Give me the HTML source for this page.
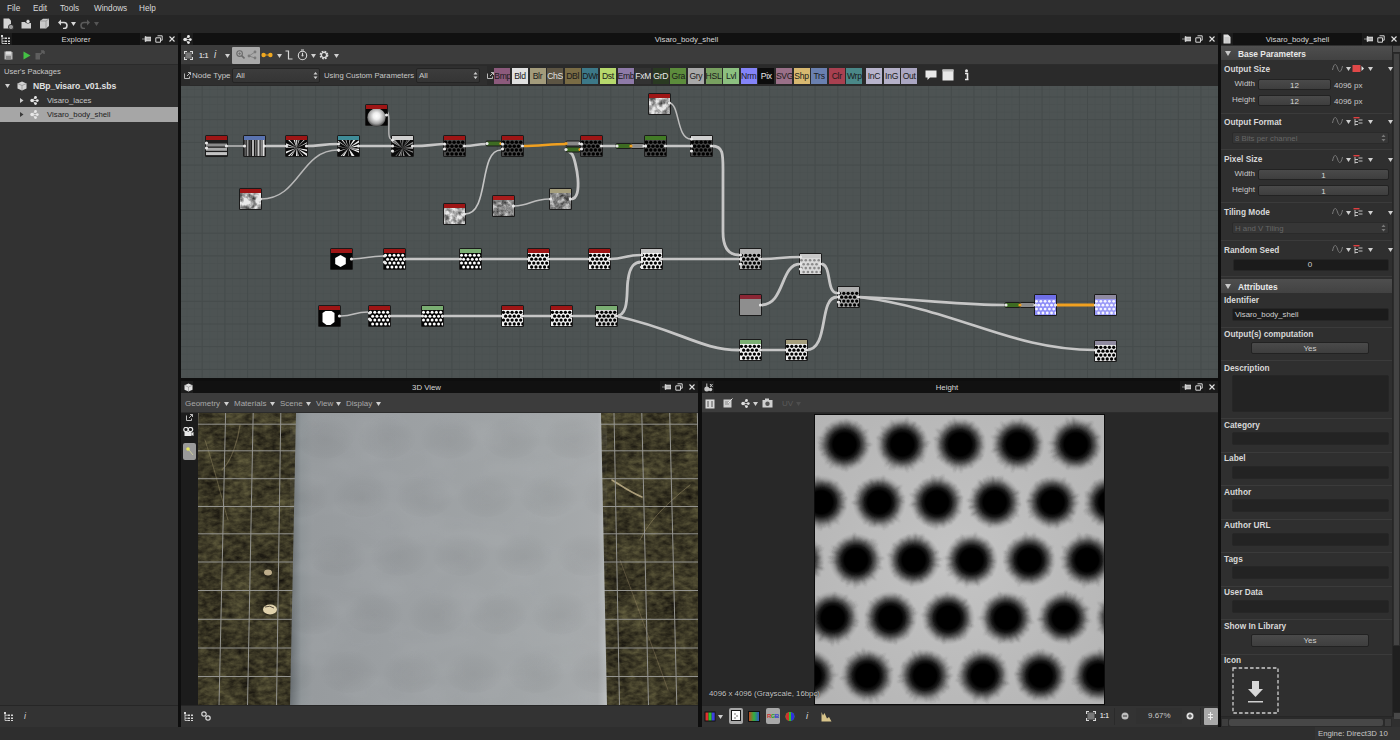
<!DOCTYPE html>
<html><head><meta charset="utf-8">
<style>
*{margin:0;padding:0;box-sizing:border-box}
html,body{width:1400px;height:740px;overflow:hidden;background:#0e0e0e;font-family:"Liberation Sans",sans-serif;font-size:8px;color:#cfcfcf}
.a{position:absolute}
.t{position:absolute;white-space:nowrap;line-height:1}
svg.a{display:block;overflow:hidden}
.fld{position:absolute;border:1px solid #222;border-radius:2px;background:linear-gradient(#4a4a4a,#3e3e3e)}
.dfld{position:absolute;border:1px solid #262626;border-radius:2px;background:#1b1b1b}
.btn{position:absolute;font-size:8.6px;color:#111;text-align:center;line-height:16px;overflow:hidden;white-space:nowrap;letter-spacing:-0.3px}
</style></head><body>
<div class="a" style="left:0px;top:0px;width:1400px;height:15px;background:#2d2d2d;"></div><div class="t" style="left:7px;top:4.5px;font-size:8.2px;color:#dadada;">File</div><div class="t" style="left:33px;top:4.5px;font-size:8.2px;color:#dadada;">Edit</div><div class="t" style="left:60px;top:4.5px;font-size:8.2px;color:#dadada;">Tools</div><div class="t" style="left:94px;top:4.5px;font-size:8.2px;color:#dadada;">Windows</div><div class="t" style="left:139px;top:4.5px;font-size:8.2px;color:#dadada;">Help</div><div class="a" style="left:0px;top:15px;width:1400px;height:18px;background:#262626;"></div><svg class="a" style="left:3px;top:18px" width="11" height="12" viewBox="0 0 11 12"><path d="M0.5 0.5H6L8 2.5V10.5H0.5Z" fill="#d6d6d6"/><circle cx="8" cy="9" r="2.6" fill="#9a9a9a" stroke="#262626" stroke-width="0.8"/></svg><svg class="a" style="left:21px;top:19px" width="11" height="10" viewBox="0 0 11 10"><path d="M0.5 3H4L5 4H10V9.5H0.5Z" fill="#cfcfcf"/><circle cx="7" cy="2.5" r="2" fill="#e0e0e0" stroke="#262626" stroke-width="0.6"/></svg><svg class="a" style="left:39px;top:18px" width="11" height="11" viewBox="0 0 11 11"><path d="M1 3L4 0.8H10V8L7 10.5H1Z" fill="#c8c8c8"/><path d="M1 3H7V10.5M7 3L10 0.8" stroke="#8a8a8a" stroke-width="0.7" fill="none"/></svg><svg class="a" style="left:58px;top:19px" width="10" height="10" viewBox="0 0 10 10"><path d="M2 3.5H6A3 3 0 0 1 6 9.5H5" stroke="#d8d8d8" stroke-width="1.6" fill="none"/><path d="M0 3.5L3 0.5V6.5Z" fill="#d8d8d8"/></svg><svg class="a" style="left:71px;top:22px" width="5" height="4" viewBox="0 0 5 4"><path d="M0 0H5L2.5 4Z" fill="#d8d8d8"/></svg><svg class="a" style="left:80px;top:19px" width="10" height="10" viewBox="0 0 10 10"><path d="M8 3.5H4A3 3 0 0 0 4 9.5H5" stroke="#5a5a5a" stroke-width="1.6" fill="none"/><path d="M10 3.5L7 0.5V6.5Z" fill="#5a5a5a"/></svg><svg class="a" style="left:94px;top:22px" width="5" height="4" viewBox="0 0 5 4"><path d="M0 0H5L2.5 4Z" fill="#555"/></svg><div class="a" style="left:0px;top:33px;width:178px;height:12px;background:#1c1c1c;"></div><div class="a" style="left:12px;top:33px;width:128px;height:12px;background:#111111;"></div><svg class="a" style="left:1px;top:34.5px" width="10" height="9" viewBox="0 0 10 9"><g fill="#d8d8d8"><rect x="0" y="0" width="2" height="2"/><rect x="4" y="2.5" width="2" height="1.5"/><rect x="7" y="2.5" width="2" height="1.5"/><rect x="7" y="5.5" width="2" height="1.5"/><rect x="4" y="5.5" width="2" height="1.5"/><rect x="4" y="8" width="2" height="1"/><rect x="7" y="8" width="2" height="1"/></g><path d="M1 2V8.5H4M1 3.2H4M1 6.2H4" stroke="#d8d8d8" stroke-width="0.8" fill="none"/></svg><div class="a" style="left:141px;top:33px;width:11px;height:12px;background:#1a1a1a;"></div><div class="a" style="left:153px;top:33px;width:11px;height:12px;background:#1a1a1a;"></div><div class="a" style="left:166px;top:33px;width:12px;height:12px;background:#1a1a1a;"></div><svg class="a" style="left:142px;top:35px" width="9" height="8" viewBox="0 0 9 8"><path d="M0 4H3M3 1.5H4V6.5H3ZM4 2H9V6H4Z" fill="#d4d4d4" stroke="#d4d4d4" stroke-width="0.6"/><path d="M4.5 3.3H8.5M4.5 4.7H8.5" stroke="#888" stroke-width="0.6"/></svg><svg class="a" style="left:155px;top:35px" width="8" height="8" viewBox="0 0 8 8"><path d="M2.5 0.8H7.2V5.2H5.5M0.8 2.8H5.5V7.2H0.8Z" fill="none" stroke="#d4d4d4" stroke-width="1"/></svg><svg class="a" style="left:169px;top:36px" width="6" height="6" viewBox="0 0 6 6"><path d="M0.5 0.5L5.5 5.5M5.5 0.5L0.5 5.5" stroke="#e0e0e0" stroke-width="1.1"/></svg><div class="t" style="left:-24.0px;top:35.5px;width:200px;text-align:center;font-size:7.8px;color:#d6d6d6;">Explorer</div><div class="a" style="left:0px;top:45px;width:178px;height:20px;background:#3a3a3a;"></div><div class="a" style="left:0px;top:64px;width:178px;height:1px;background:#2a2a2a;"></div><svg class="a" style="left:4px;top:51px" width="9" height="9" viewBox="0 0 9 9"><path d="M0.5 0.5H7.5L8.5 1.5V8.5H0.5Z" fill="#b8b8b8"/><rect x="2" y="0.5" width="5" height="3" fill="#e0e0e0"/><rect x="2" y="5" width="5" height="3.5" fill="#8a8a8a"/></svg><svg class="a" style="left:23px;top:51px" width="8" height="9" viewBox="0 0 8 9"><path d="M0.5 0.5L7.5 4.5L0.5 8.5Z" fill="#44c044"/></svg><svg class="a" style="left:35px;top:50px" width="11" height="10" viewBox="0 0 11 10"><path d="M0.5 3H5V9.5H0.5Z" fill="#5e5e5e"/><path d="M3 6L9 1M9 1H6M9 1V4" stroke="#5e5e5e" stroke-width="1.5" fill="none"/></svg><div class="a" style="left:0px;top:65px;width:178px;height:641px;background:#323232;"></div><div class="t" style="left:4px;top:67.5px;font-size:7.6px;color:#c8c8c8;">User's Packages</div><svg class="a" style="left:5px;top:84px" width="5" height="4" viewBox="0 0 5 4"><path d="M0 0H5L2.5 4Z" fill="#d0d0d0"/></svg><svg class="a" style="left:17px;top:81px" width="10" height="10" viewBox="0 0 10 10"><path d="M5 0.5L9.5 2.5V7.5L5 9.5L0.5 7.5V2.5Z" fill="#d4d4d4"/><path d="M0.5 2.5L5 4.5L9.5 2.5M5 4.5V9.5" stroke="#8a8a8a" stroke-width="0.7" fill="none"/></svg><div class="t" style="left:33px;top:81.5px;font-size:8.6px;color:#e0e0e0;font-weight:bold;letter-spacing:-0.05px;">NBp_visaro_v01.sbs</div><svg class="a" style="left:20px;top:97.5px" width="3.5" height="5" viewBox="0 0 3.5 5"><path d="M0 0L3.5 2.5L0 5Z" fill="#d0d0d0"/></svg><svg class="a" style="left:30px;top:95.5px" width="9" height="9" viewBox="0 0 9 9"><g fill="#e8e8e8"><circle cx="2" cy="4.5" r="1.7"/><circle cx="5.5" cy="1.5" r="1.4"/><circle cx="7.3" cy="4.6" r="1.4"/><circle cx="5.5" cy="7.6" r="1.4"/></g><path d="M2 4.5L5.5 1.5M2 4.5L7.3 4.6M2 4.5L5.5 7.6" stroke="#e8e8e8" stroke-width="0.8"/></svg><div class="t" style="left:47px;top:96.5px;font-size:7.8px;color:#c8c8c8;">Visaro_laces</div><div class="a" style="left:0px;top:107px;width:178px;height:15px;background:#a6a6a6;"></div><svg class="a" style="left:20px;top:111.5px" width="3.5" height="5" viewBox="0 0 3.5 5"><path d="M0 0L3.5 2.5L0 5Z" fill="#3a3a3a"/></svg><svg class="a" style="left:30px;top:109.5px" width="9" height="9" viewBox="0 0 9 9"><g fill="#e8e8e8"><circle cx="2" cy="4.5" r="1.7"/><circle cx="5.5" cy="1.5" r="1.4"/><circle cx="7.3" cy="4.6" r="1.4"/><circle cx="5.5" cy="7.6" r="1.4"/></g><path d="M2 4.5L5.5 1.5M2 4.5L7.3 4.6M2 4.5L5.5 7.6" stroke="#e8e8e8" stroke-width="0.8"/></svg><div class="t" style="left:47px;top:110.5px;font-size:7.8px;color:#1e1e1e;">Visaro_body_shell</div><div class="a" style="left:0px;top:705px;width:178px;height:1px;background:#262626;"></div><div class="a" style="left:0px;top:706px;width:178px;height:21px;background:#333333;"></div><svg class="a" style="left:4px;top:712px" width="10" height="9" viewBox="0 0 10 9"><g fill="#d8d8d8"><rect x="0" y="0" width="2" height="2"/><rect x="4" y="2.5" width="2" height="1.5"/><rect x="7" y="2.5" width="2" height="1.5"/><rect x="7" y="5.5" width="2" height="1.5"/><rect x="4" y="5.5" width="2" height="1.5"/><rect x="4" y="8" width="2" height="1"/><rect x="7" y="8" width="2" height="1"/></g><path d="M1 2V8.5H4M1 3.2H4M1 6.2H4" stroke="#d8d8d8" stroke-width="0.8" fill="none"/></svg><div class="t" style="left:24px;top:711.5px;font-size:9px;color:#d0d0d0;"><i>i</i></div><div class="a" style="left:181px;top:33px;width:1037px;height:12px;background:#1c1c1c;"></div><div class="a" style="left:193px;top:33px;width:987px;height:12px;background:#111111;"></div><svg class="a" style="left:183px;top:34.5px" width="9" height="9" viewBox="0 0 9 9"><g fill="#e8e8e8"><circle cx="2" cy="4.5" r="1.7"/><circle cx="5.5" cy="1.5" r="1.4"/><circle cx="7.3" cy="4.6" r="1.4"/><circle cx="5.5" cy="7.6" r="1.4"/></g><path d="M2 4.5L5.5 1.5M2 4.5L7.3 4.6M2 4.5L5.5 7.6" stroke="#e8e8e8" stroke-width="0.8"/></svg><div class="a" style="left:1181px;top:33px;width:11px;height:12px;background:#1a1a1a;"></div><div class="a" style="left:1193px;top:33px;width:11px;height:12px;background:#1a1a1a;"></div><div class="a" style="left:1206px;top:33px;width:12px;height:12px;background:#1a1a1a;"></div><svg class="a" style="left:1182px;top:35px" width="9" height="8" viewBox="0 0 9 8"><path d="M0 4H3M3 1.5H4V6.5H3ZM4 2H9V6H4Z" fill="#d4d4d4" stroke="#d4d4d4" stroke-width="0.6"/><path d="M4.5 3.3H8.5M4.5 4.7H8.5" stroke="#888" stroke-width="0.6"/></svg><svg class="a" style="left:1195px;top:35px" width="8" height="8" viewBox="0 0 8 8"><path d="M2.5 0.8H7.2V5.2H5.5M0.8 2.8H5.5V7.2H0.8Z" fill="none" stroke="#d4d4d4" stroke-width="1"/></svg><svg class="a" style="left:1209px;top:36px" width="6" height="6" viewBox="0 0 6 6"><path d="M0.5 0.5L5.5 5.5M5.5 0.5L0.5 5.5" stroke="#e0e0e0" stroke-width="1.1"/></svg><div class="t" style="left:586.5px;top:35.5px;width:200px;text-align:center;font-size:7.8px;color:#d6d6d6;">Visaro_body_shell</div><div class="a" style="left:181px;top:45px;width:1037px;height:20px;background:#3c3c3c;"></div><div class="a" style="left:181px;top:64px;width:1037px;height:1px;background:#2c2c2c;"></div><svg class="a" style="left:184px;top:51px" width="9" height="9" viewBox="0 0 9 9"><rect x="1.5" y="1.5" width="6" height="6" fill="#777"/><path d="M0.5 3V0.5H3M6 0.5H8.5V3M8.5 6V8.5H6M3 8.5H0.5V6" stroke="#d8d8d8" stroke-width="1.2" fill="none"/></svg><div class="t" style="left:199px;top:51.5px;font-size:7px;color:#d0d0d0;font-weight:bold;letter-spacing:-0.3px;">1:1</div><div class="t" style="left:214px;top:50px;font-size:10px;color:#d8d8d8;"><i>i</i></div><svg class="a" style="left:225px;top:54px" width="5" height="4" viewBox="0 0 5 4"><path d="M0 0H5L2.5 4Z" fill="#d0d0d0"/></svg><div class="a" style="left:232px;top:47px;width:28px;height:17px;background:#a9a9a9;border-radius:1px"></div><svg class="a" style="left:236px;top:50px" width="9" height="10" viewBox="0 0 9 10"><circle cx="3.6" cy="3.6" r="2.8" fill="none" stroke="#6a6a6a" stroke-width="1.1"/><path d="M5.6 5.6L8.5 8.5" stroke="#6a6a6a" stroke-width="1.6"/><path d="M2.3 3.6H4.9M3.6 2.3V4.9" stroke="#6a6a6a" stroke-width="0.8"/></svg><svg class="a" style="left:247px;top:50px" width="10" height="10" viewBox="0 0 10 10"><circle cx="2" cy="6" r="1.4" fill="#7a7a7a"/><circle cx="8" cy="2" r="1.4" fill="#7a7a7a"/><circle cx="8" cy="8" r="1.4" fill="#7a7a7a"/><path d="M2 6L8 2M2 6L8 8" stroke="#7a7a7a" stroke-width="0.8"/></svg><svg class="a" style="left:261px;top:52px" width="12" height="6" viewBox="0 0 12 6"><path d="M2.5 3H9.5" stroke="#e0a020" stroke-width="1"/><circle cx="2.6" cy="3" r="2.2" fill="#f0a820"/><circle cx="9.4" cy="3" r="2.2" fill="#f0a820"/></svg><svg class="a" style="left:277px;top:54px" width="5" height="4" viewBox="0 0 5 4"><path d="M0 0H5L2.5 4Z" fill="#d0d0d0"/></svg><svg class="a" style="left:285px;top:50px" width="8" height="10" viewBox="0 0 8 10"><path d="M0.5 1H3.5V9H7.5" stroke="#d8d8d8" stroke-width="1.2" fill="none"/></svg><svg class="a" style="left:297px;top:49px" width="11" height="12" viewBox="0 0 11 12"><circle cx="5.5" cy="6.5" r="4.2" fill="none" stroke="#d8d8d8" stroke-width="1.1"/><path d="M5.5 6.5V3.8M4 1H7" stroke="#d8d8d8" stroke-width="1.1"/><circle cx="5.5" cy="6.5" r="1" fill="#d8d8d8"/></svg><svg class="a" style="left:311px;top:54px" width="5" height="4" viewBox="0 0 5 4"><path d="M0 0H5L2.5 4Z" fill="#d0d0d0"/></svg><svg class="a" style="left:319px;top:50px" width="10" height="10" viewBox="0 0 10 10"><circle cx="5" cy="5" r="3.3" fill="none" stroke="#d8d8d8" stroke-width="2.2" stroke-dasharray="1.6 1"/><circle cx="5" cy="5" r="2.6" fill="none" stroke="#d8d8d8" stroke-width="1.3"/></svg><svg class="a" style="left:334px;top:54px" width="5" height="4" viewBox="0 0 5 4"><path d="M0 0H5L2.5 4Z" fill="#d0d0d0"/></svg><div class="a" style="left:181px;top:65px;width:1037px;height:21px;background:#2a2a2a;"></div><div class="a" style="left:190px;top:66px;width:297px;height:19px;background:#2f2f2f;"></div><svg class="a" style="left:184px;top:72px" width="7" height="7" viewBox="0 0 7 7"><path d="M0.5 1.5V6.5H5.5V4.5M3 4L6.5 0.5M4 0.5H6.5V3" stroke="#c8c8c8" stroke-width="0.9" fill="none"/></svg><div class="t" style="left:192px;top:72px;font-size:8px;color:#c8c8c8;">Node Type</div><div class="a" style="left:232px;top:68px;width:88px;height:15px;border:1px solid #242424;border-radius:2px;background:linear-gradient(#3c3c3c,#353535)"></div><div class="t" style="left:236px;top:72px;font-size:8px;color:#c8c8c8;">All</div><svg class="a" style="left:313px;top:71px" width="5" height="9" viewBox="0 0 5 9"><path d="M0.5 3.5L2.5 1L4.5 3.5ZM0.5 5.5L2.5 8L4.5 5.5Z" fill="#d0d0d0"/></svg><div class="t" style="left:324px;top:72px;font-size:7.7px;color:#c8c8c8;">Using Custom Parameters</div><div class="a" style="left:416px;top:68px;width:64px;height:15px;border:1px solid #242424;border-radius:2px;background:linear-gradient(#3c3c3c,#353535)"></div><div class="t" style="left:419px;top:72px;font-size:8px;color:#c8c8c8;">All</div><svg class="a" style="left:473px;top:71px" width="5" height="9" viewBox="0 0 5 9"><path d="M0.5 3.5L2.5 1L4.5 3.5ZM0.5 5.5L2.5 8L4.5 5.5Z" fill="#d0d0d0"/></svg><svg class="a" style="left:487px;top:72px" width="7" height="7" viewBox="0 0 7 7"><path d="M0.5 1.5V6.5H5.5V4.5M3 4L6.5 0.5M4 0.5H6.5V3" stroke="#c8c8c8" stroke-width="0.9" fill="none"/></svg><div class="btn" style="left:494.3px;top:68px;width:16px;height:16px;background:#8c5a7c;color:#1a1a1a">Bmp</div><div class="btn" style="left:511.9px;top:68px;width:16px;height:16px;background:#e0e0e0;color:#1a1a1a">Bld</div><div class="btn" style="left:529.5px;top:68px;width:16px;height:16px;background:#a39b7b;color:#1a1a1a">Blr</div><div class="btn" style="left:547.1px;top:68px;width:16px;height:16px;background:#5c5443;color:#e0e0e0">ChS</div><div class="btn" style="left:564.7px;top:68px;width:16px;height:16px;background:#7a6c45;color:#1a1a1a">DBl</div><div class="btn" style="left:582.3px;top:68px;width:16px;height:16px;background:#3c7888;color:#1a1a1a">DWr</div><div class="btn" style="left:599.9px;top:68px;width:16px;height:16px;background:#b6d86c;color:#1a1a1a">Dst</div><div class="btn" style="left:617.5px;top:68px;width:16px;height:16px;background:#8e7aa8;color:#1a1a1a">Emb</div><div class="btn" style="left:635.1px;top:68px;width:16px;height:16px;background:#323232;color:#e8e8e8">FxM</div><div class="btn" style="left:652.7px;top:68px;width:16px;height:16px;background:#2a3a22;color:#e8e8e8">GrD</div><div class="btn" style="left:670.3px;top:68px;width:16px;height:16px;background:#5c8c3c;color:#1a1a1a">Gra</div><div class="btn" style="left:687.9px;top:68px;width:16px;height:16px;background:#a8a8a8;color:#1a1a1a">Gry</div><div class="btn" style="left:705.5px;top:68px;width:16px;height:16px;background:#78a060;color:#1a1a1a">HSL</div><div class="btn" style="left:723.1px;top:68px;width:16px;height:16px;background:#8cc080;color:#1a1a1a">Lvl</div><div class="btn" style="left:740.7px;top:68px;width:16px;height:16px;background:#8484f8;color:#1a1a1a">Nrm</div><div class="btn" style="left:758.3px;top:68px;width:16px;height:16px;background:#0c0c0c;color:#e8e8e8">Pix</div><div class="btn" style="left:775.9px;top:68px;width:16px;height:16px;background:#9a7088;color:#1a1a1a">SVG</div><div class="btn" style="left:793.5px;top:68px;width:16px;height:16px;background:#d8b870;color:#1a1a1a">Shp</div><div class="btn" style="left:811.1px;top:68px;width:16px;height:16px;background:#6a80b0;color:#1a1a1a">Trs</div><div class="btn" style="left:828.7px;top:68px;width:16px;height:16px;background:#a84050;color:#1a1a1a">Clr</div><div class="btn" style="left:846.3px;top:68px;width:16px;height:16px;background:#4a8888;color:#1a1a1a">Wrp</div><div class="btn" style="left:866.0px;top:68px;width:16px;height:16px;background:#b8b4cc;color:#1a1a1a">InC</div><div class="btn" style="left:883.6px;top:68px;width:16px;height:16px;background:#b4b0c8;color:#1a1a1a">InG</div><div class="btn" style="left:901.2px;top:68px;width:16px;height:16px;background:#aaa6c2;color:#1a1a1a">Out</div><svg class="a" style="left:925px;top:70px" width="12" height="11" viewBox="0 0 12 11"><path d="M0.5 0.5H11.5V7.5H5L2.5 10V7.5H0.5Z" fill="#e8e8e8"/></svg><svg class="a" style="left:942px;top:69px" width="12" height="12" viewBox="0 0 12 12"><rect x="0.5" y="0.5" width="11" height="11" fill="#e8e8e8"/><rect x="0.5" y="0.5" width="11" height="2" fill="#bdbdbd"/></svg><svg class="a" style="left:964px;top:69px" width="5" height="12" viewBox="0 0 5 12"><circle cx="2.5" cy="1.8" r="1.5" fill="#e8e8e8"/><path d="M1 4.5H3.5V10M1 10.5H4.5" stroke="#e8e8e8" stroke-width="1.6" fill="none"/></svg><svg class="a" style="left:181px;top:86px" width="1037" height="292" viewBox="181 86 1037 292"><defs>
<pattern id="gmin" width="7.567" height="7.567" patternUnits="userSpaceOnUse" x="20.1" y="5.7"><path d="M0 0H7.567M0 0V7.567" stroke="#484e4e" stroke-width="1" fill="none"/></pattern>
<pattern id="gmaj" width="22.7" height="22.7" patternUnits="userSpaceOnUse" x="20.1" y="5.7"><path d="M0 0.5H22.7M0.5 0V22.7" stroke="#454b4b" stroke-width="1" fill="none"/></pattern>
<pattern id="dotsW" width="5.2" height="4.3" patternUnits="userSpaceOnUse"><circle cx="1.6" cy="2" r="1.45" fill="#fff"/><circle cx="4.2" cy="4.15" r="1.45" fill="#fff"/><circle cx="4.2" cy="-0.15" r="1.45" fill="#fff"/></pattern>
<pattern id="dotsB" width="5.2" height="4.3" patternUnits="userSpaceOnUse"><circle cx="1.6" cy="2" r="1.5" fill="#000"/><circle cx="4.2" cy="4.15" r="1.5" fill="#000"/><circle cx="4.2" cy="-0.15" r="1.5" fill="#000"/></pattern>
<pattern id="dotsL" width="5.2" height="4.3" patternUnits="userSpaceOnUse"><circle cx="1.6" cy="2" r="1.3" fill="#8a8a8a"/><circle cx="4.2" cy="4.15" r="1.3" fill="#8a8a8a"/><circle cx="4.2" cy="-0.15" r="1.3" fill="#8a8a8a"/></pattern>
<pattern id="dotsWB" width="5.2" height="4.3" patternUnits="userSpaceOnUse"><circle cx="1.6" cy="2" r="1.4" fill="#f4f4ff"/><circle cx="4.2" cy="4.15" r="1.4" fill="#f4f4ff"/><circle cx="4.2" cy="-0.15" r="1.4" fill="#f4f4ff"/></pattern>
<pattern id="scr" width="5" height="4" patternUnits="userSpaceOnUse"><path d="M0.5 1.5h2M1 3h3M3 0.5v2" stroke="#8a8a8a" stroke-width="0.9"/></pattern>
<filter id="nz" x="0" y="0" width="100%" height="100%"><feTurbulence type="fractalNoise" baseFrequency="0.16" numOctaves="3" seed="3"/><feColorMatrix type="matrix" values="0 0 0 0 0  0 0 0 0 0  0 0 0 0 0  -1.6 0 0 0 1.05"/></filter>
<filter id="nz2" x="0" y="0" width="100%" height="100%"><feTurbulence type="fractalNoise" baseFrequency="0.2" numOctaves="3" seed="8"/><feColorMatrix type="matrix" values="0 0 0 0 0  0 0 0 0 0  0 0 0 0 0  -1.4 0 0 0 1.0"/></filter>
<radialGradient id="sph" cx="0.5" cy="0.42" r="0.6"><stop offset="0" stop-color="#fff"/><stop offset="0.3" stop-color="#f0f0f0"/><stop offset="0.7" stop-color="#a0a0a0"/><stop offset="1" stop-color="#2a2a2a"/></radialGradient>
</defs><rect x="181" y="86" width="1037" height="292" fill="#4d5353"/><rect x="181" y="86" width="1037" height="292" fill="url(#gmin)"/><rect x="181" y="86" width="1037" height="292" fill="url(#gmaj)"/><path d="M227 146 L244 146" fill="none" stroke="#bdbdbd" stroke-width="1.6" stroke-linecap="round"/><path d="M261 199 C300 199 300 150 338 150" fill="none" stroke="#b8b8b8" stroke-width="1.5" stroke-linecap="round"/><path d="M386 111 C392 111 386 139 391 139" fill="none" stroke="#b8b8b8" stroke-width="1.4" stroke-linecap="round"/><path d="M465 214 C490 214 478 150 501 150" fill="none" stroke="#c4c4c4" stroke-width="1.6" stroke-linecap="round"/><path d="M514 206 C530 206 532 199 549 199" fill="none" stroke="#bdbdbd" stroke-width="1.6" stroke-linecap="round"/><path d="M669 103 C680 103 676 139 691 139" fill="none" stroke="#bdbdbd" stroke-width="1.5" stroke-linecap="round"/><path d="M352 259 C366 259 368 256 383 256" fill="none" stroke="#bdbdbd" stroke-width="1.5" stroke-linecap="round"/><path d="M341 316 C354 316 354 312 368 312" fill="none" stroke="#bdbdbd" stroke-width="1.5" stroke-linecap="round"/><path d="M265 146 L286 146" fill="none" stroke="#c6c6c6" stroke-width="2.7" stroke-linecap="round"/><path d="M306 146 C320 146 322 144 338 144" fill="none" stroke="#c6c6c6" stroke-width="2.7" stroke-linecap="round"/><path d="M359 146 L391 146" fill="none" stroke="#c6c6c6" stroke-width="2.7" stroke-linecap="round"/><path d="M413 146 C428 146 428 145 443 144" fill="none" stroke="#c6c6c6" stroke-width="2.7" stroke-linecap="round"/><path d="M465 146 C475 146 476 144 487 144" fill="none" stroke="#c6c6c6" stroke-width="2.7" stroke-linecap="round"/><path d="M571 199 C584 199 576 160 572 154 C568 150 565 150 567 150" fill="none" stroke="#c6c6c6" stroke-width="2.8" stroke-linecap="round"/><path d="M601 146 L617 146" fill="none" stroke="#c6c6c6" stroke-width="2.7" stroke-linecap="round"/><path d="M643 146 L691 146" fill="none" stroke="#c6c6c6" stroke-width="2.7" stroke-linecap="round"/><path d="M712 146 C724 146 723 155 723 175 L723 232 C723 250 730 255 739 255" fill="none" stroke="#c6c6c6" stroke-width="2.8" stroke-linecap="round"/><path d="M405 259 L460 259" fill="none" stroke="#c6c6c6" stroke-width="2.7" stroke-linecap="round"/><path d="M481 259 L528 259" fill="none" stroke="#c6c6c6" stroke-width="2.7" stroke-linecap="round"/><path d="M549 259 L589 259" fill="none" stroke="#c6c6c6" stroke-width="2.7" stroke-linecap="round"/><path d="M610 259 C625 259 625 255 641 255" fill="none" stroke="#c6c6c6" stroke-width="2.7" stroke-linecap="round"/><path d="M616 316 C630 316 626 290 628 280 C630 264 636 262 641 262" fill="none" stroke="#c6c6c6" stroke-width="2.8" stroke-linecap="round"/><path d="M662 259 L739 259" fill="none" stroke="#c6c6c6" stroke-width="2.7" stroke-linecap="round"/><path d="M761 259 C780 259 780 257 800 257" fill="none" stroke="#c6c6c6" stroke-width="2.7" stroke-linecap="round"/><path d="M761 305 C785 305 780 264 800 264" fill="none" stroke="#c6c6c6" stroke-width="2.8" stroke-linecap="round"/><path d="M821 264 C832 264 826 293 837 293" fill="none" stroke="#c6c6c6" stroke-width="2.8" stroke-linecap="round"/><path d="M806 350 C830 350 818 297 837 297" fill="none" stroke="#c6c6c6" stroke-width="2.8" stroke-linecap="round"/><path d="M616 316 C680 330 700 350 739 350" fill="none" stroke="#c6c6c6" stroke-width="2.8" stroke-linecap="round"/><path d="M761 350 L785 350" fill="none" stroke="#c6c6c6" stroke-width="2.7" stroke-linecap="round"/><path d="M390 316 L422 316" fill="none" stroke="#c6c6c6" stroke-width="2.7" stroke-linecap="round"/><path d="M443 316 L502 316" fill="none" stroke="#c6c6c6" stroke-width="2.7" stroke-linecap="round"/><path d="M522 316 L551 316" fill="none" stroke="#c6c6c6" stroke-width="2.7" stroke-linecap="round"/><path d="M571 316 L597 316" fill="none" stroke="#c6c6c6" stroke-width="2.7" stroke-linecap="round"/><path d="M859 297 C930 300 960 305 1006 305" fill="none" stroke="#c6c6c6" stroke-width="2.6" stroke-linecap="round"/><path d="M859 297 C960 310 1010 350 1095 350" fill="none" stroke="#c6c6c6" stroke-width="2.6" stroke-linecap="round"/><path d="M522 146 C540 146 550 144 567 144" fill="none" stroke="#f0a020" stroke-width="2.6" stroke-linecap="round"/><path d="M1055 305 L1095 305" fill="none" stroke="#f0a020" stroke-width="2.8" stroke-linecap="round"/><rect x="486" y="141" width="15" height="5" rx="1" fill="#3d6b22" stroke="#1b1b1b" stroke-width="1"/><rect x="566" y="141" width="14" height="5" rx="1" fill="#8a8a8a" stroke="#1b1b1b" stroke-width="1"/><rect x="566" y="147" width="14" height="5" rx="1" fill="#3d6b22" stroke="#1b1b1b" stroke-width="1"/><rect x="616" y="143.5" width="15" height="5" rx="1" fill="#3d6b22" stroke="#1b1b1b" stroke-width="1"/><rect x="631" y="143.5" width="13" height="5" rx="1" fill="#8a8a8a" stroke="#1b1b1b" stroke-width="1"/><rect x="1005" y="302.5" width="15" height="5" rx="1" fill="#3d6b22" stroke="#1b1b1b" stroke-width="1"/><rect x="1020" y="302.5" width="15" height="5" rx="1" fill="#8a8a8a" stroke="#1b1b1b" stroke-width="1"/><circle cx="501" cy="143.5" r="1.6" fill="#f0a020"/><circle cx="566" cy="143.5" r="1.6" fill="#f0a020"/><circle cx="580" cy="149.5" r="1.6" fill="#f0a020"/><circle cx="631" cy="146" r="1.6" fill="#f0a020"/><circle cx="1020" cy="305" r="1.6" fill="#f0a020"/><circle cx="487" cy="143.5" r="1.6" fill="#e8e8e8"/><circle cx="566" cy="149.5" r="1.6" fill="#e8e8e8"/><circle cx="580" cy="143.5" r="1.6" fill="#e8e8e8"/><circle cx="617" cy="146" r="1.6" fill="#e8e8e8"/><circle cx="644" cy="146" r="1.6" fill="#e8e8e8"/><circle cx="1006" cy="305" r="1.6" fill="#e8e8e8"/><circle cx="1035" cy="305" r="1.6" fill="#e8e8e8"/><rect x="205" y="135" width="23" height="22" rx="1.5" fill="#1b1b1b"/><rect x="206" y="140" width="21" height="16" fill="#1e1e1e"/><rect x="206" y="143.5" width="21" height="3" fill="#8a8a8a"/><rect x="206" y="147.8" width="21" height="3" fill="#a8a8a8"/><rect x="206" y="152.1" width="21" height="3" fill="#c4c4c4"/><rect x="206" y="136" width="21" height="4" fill="#9e1515"/><circle cx="206.5" cy="143" r="1.6" fill="#e8e8e8"/><circle cx="206.5" cy="148" r="1.6" fill="#e8e8e8"/><circle cx="226.5" cy="146" r="1.6" fill="#e8e8e8"/><rect x="243" y="135" width="23" height="22" rx="1.5" fill="#1b1b1b"/><rect x="244" y="140" width="21" height="16" fill="#1a1a1a"/><rect x="244.5" y="140" width="2" height="16" fill="#5a5a5a"/><rect x="247" y="140" width="1.5" height="16" fill="#9a9a9a"/><rect x="249.5" y="140" width="1.5" height="16" fill="#404040"/><rect x="252" y="140" width="2" height="16" fill="#b4b4b4"/><rect x="255" y="140" width="1.5" height="16" fill="#707070"/><rect x="257.5" y="140" width="2" height="16" fill="#d0d0d0"/><rect x="260.5" y="140" width="1.5" height="16" fill="#888"/><rect x="262.5" y="140" width="2" height="16" fill="#e0e0e0"/><rect x="244" y="136" width="21" height="4" fill="#5a73b0"/><circle cx="244.5" cy="146" r="1.6" fill="#e8e8e8"/><circle cx="264.5" cy="146" r="1.6" fill="#e8e8e8"/><rect x="285" y="135" width="23" height="22" rx="1.5" fill="#1b1b1b"/><svg x="286" y="140" width="21" height="16" viewBox="286 140 21 16"><rect x="286" y="140" width="21" height="16" fill="#0a0a0a"/><path d="M296.5 148.0 L316.3 150.6 L315.6 153.8Z" fill="#f0f0f0"/><path d="M296.5 148.0 L314.2 157.4 L312.3 160.3Z" fill="#f0f0f0"/><path d="M296.5 148.0 L309.5 163.2 L308.4 164.1Z" fill="#f0f0f0"/><path d="M296.5 148.0 L302.0 167.2 L300.3 167.6Z" fill="#f0f0f0"/><path d="M296.5 148.0 L299.3 167.8 L295.2 168.0Z" fill="#f0f0f0"/><path d="M296.5 148.0 L286.8 165.5 L285.0 164.4Z" fill="#f0f0f0"/><path d="M296.5 148.0 L283.8 163.4 L281.9 161.6Z" fill="#f0f0f0"/><path d="M296.5 148.0 L278.7 157.2 L277.6 154.4Z" fill="#f0f0f0"/><path d="M296.5 148.0 L276.5 146.9 L276.7 145.2Z" fill="#f0f0f0"/><path d="M296.5 148.0 L277.4 142.2 L278.2 139.9Z" fill="#f0f0f0"/><path d="M296.5 148.0 L282.0 134.2 L283.5 132.8Z" fill="#f0f0f0"/><path d="M296.5 148.0 L289.8 129.1 L293.1 128.3Z" fill="#f0f0f0"/><path d="M296.5 148.0 L295.4 128.0 L298.7 128.1Z" fill="#f0f0f0"/><path d="M296.5 148.0 L301.6 128.7 L303.6 129.3Z" fill="#f0f0f0"/><path d="M296.5 148.0 L309.8 133.1 L310.7 134.0Z" fill="#f0f0f0"/><path d="M296.5 148.0 L314.1 138.4 L314.7 139.6Z" fill="#f0f0f0"/></svg><rect x="286" y="136" width="21" height="4" fill="#9e1515"/><circle cx="286.5" cy="146" r="1.6" fill="#e8e8e8"/><circle cx="306.5" cy="146" r="1.6" fill="#e8e8e8"/><rect x="337" y="135" width="23" height="22" rx="1.5" fill="#1b1b1b"/><svg x="338" y="140" width="21" height="16" viewBox="338 140 21 16"><rect x="338" y="140" width="21" height="16" fill="#0a0a0a"/><path d="M348.5 148.0 L368.4 149.6 L368.1 152.1Z" fill="#f0f0f0"/><path d="M348.5 148.0 L367.7 153.5 L366.7 156.4Z" fill="#f0f0f0"/><path d="M348.5 148.0 L360.6 163.9 L356.9 166.1Z" fill="#f0f0f0"/><path d="M348.5 148.0 L358.6 165.2 L355.7 166.6Z" fill="#f0f0f0"/><path d="M348.5 148.0 L349.8 168.0 L348.8 168.0Z" fill="#f0f0f0"/><path d="M348.5 148.0 L339.2 165.7 L336.3 163.8Z" fill="#f0f0f0"/><path d="M348.5 148.0 L335.5 163.2 L334.5 162.3Z" fill="#f0f0f0"/><path d="M348.5 148.0 L329.9 155.3 L329.2 153.3Z" fill="#f0f0f0"/><path d="M348.5 148.0 L328.6 145.7 L328.8 144.7Z" fill="#f0f0f0"/><path d="M348.5 148.0 L331.3 137.8 L332.0 136.8Z" fill="#f0f0f0"/><path d="M348.5 148.0 L335.3 133.0 L336.9 131.7Z" fill="#f0f0f0"/><path d="M348.5 148.0 L341.5 129.3 L343.2 128.7Z" fill="#f0f0f0"/><path d="M348.5 148.0 L351.0 128.2 L353.0 128.5Z" fill="#f0f0f0"/><path d="M348.5 148.0 L358.7 130.8 L361.6 132.9Z" fill="#f0f0f0"/><path d="M348.5 148.0 L364.5 136.0 L366.1 138.6Z" fill="#f0f0f0"/><path d="M348.5 148.0 L367.5 141.7 L368.3 145.0Z" fill="#f0f0f0"/></svg><rect x="338" y="136" width="21" height="4" fill="#3f8c98"/><circle cx="338.5" cy="144" r="1.6" fill="#e8e8e8"/><circle cx="338.5" cy="150" r="1.6" fill="#e8e8e8"/><circle cx="358.5" cy="146" r="1.6" fill="#e8e8e8"/><rect x="391" y="135" width="23" height="22" rx="1.5" fill="#1b1b1b"/><svg x="392" y="140" width="21" height="16" viewBox="392 140 21 16"><rect x="392" y="140" width="21" height="16" fill="#0a0a0a"/><path d="M402.5 148.0 L422.4 145.8 L422.4 149.8Z" fill="#9a9a9a"/><path d="M402.5 148.0 L421.5 154.3 L420.8 156.2Z" fill="#9a9a9a"/><path d="M402.5 148.0 L417.2 161.6 L415.1 163.6Z" fill="#9a9a9a"/><path d="M402.5 148.0 L407.6 167.3 L404.2 167.9Z" fill="#9a9a9a"/><path d="M402.5 148.0 L400.2 167.9 L398.1 167.5Z" fill="#9a9a9a"/><path d="M402.5 148.0 L396.5 167.1 L393.2 165.7Z" fill="#9a9a9a"/><path d="M402.5 148.0 L390.1 163.7 L389.3 163.0Z" fill="#9a9a9a"/><path d="M402.5 148.0 L384.7 157.1 L384.2 156.2Z" fill="#9a9a9a"/><path d="M402.5 148.0 L382.7 145.3 L382.9 144.0Z" fill="#9a9a9a"/><path d="M402.5 148.0 L385.0 138.4 L386.3 136.3Z" fill="#9a9a9a"/><path d="M402.5 148.0 L386.6 135.9 L388.9 133.4Z" fill="#9a9a9a"/><path d="M402.5 148.0 L395.9 129.1 L397.6 128.6Z" fill="#9a9a9a"/><path d="M402.5 148.0 L402.1 128.0 L404.8 128.1Z" fill="#9a9a9a"/><path d="M402.5 148.0 L412.2 130.5 L413.2 131.1Z" fill="#9a9a9a"/><path d="M402.5 148.0 L414.9 132.3 L416.3 133.6Z" fill="#9a9a9a"/><path d="M402.5 148.0 L419.7 137.9 L420.9 140.1Z" fill="#9a9a9a"/></svg><rect x="392" y="136" width="21" height="4" fill="#cfcfcf"/><circle cx="392.5" cy="140" r="1.6" fill="#e8e8e8"/><circle cx="392.5" cy="146" r="1.6" fill="#e8e8e8"/><circle cx="392.5" cy="151" r="1.6" fill="#e8e8e8"/><circle cx="412.5" cy="146" r="1.6" fill="#e8e8e8"/><rect x="443" y="135" width="23" height="22" rx="1.5" fill="#1b1b1b"/><svg x="444" y="140" width="21" height="16"><rect width="21" height="16" fill="#4a4a4a"/><circle cx="1.50" cy="2.30" r="1.75" fill="#000"/><circle cx="5.80" cy="2.30" r="1.75" fill="#000"/><circle cx="10.10" cy="2.30" r="1.75" fill="#000"/><circle cx="14.40" cy="2.30" r="1.75" fill="#000"/><circle cx="18.70" cy="2.30" r="1.75" fill="#000"/><circle cx="23.00" cy="2.30" r="1.75" fill="#000"/><circle cx="3.65" cy="6.20" r="1.75" fill="#000"/><circle cx="7.95" cy="6.20" r="1.75" fill="#000"/><circle cx="12.25" cy="6.20" r="1.75" fill="#000"/><circle cx="16.55" cy="6.20" r="1.75" fill="#000"/><circle cx="20.85" cy="6.20" r="1.75" fill="#000"/><circle cx="25.15" cy="6.20" r="1.75" fill="#000"/><circle cx="1.50" cy="10.10" r="1.75" fill="#000"/><circle cx="5.80" cy="10.10" r="1.75" fill="#000"/><circle cx="10.10" cy="10.10" r="1.75" fill="#000"/><circle cx="14.40" cy="10.10" r="1.75" fill="#000"/><circle cx="18.70" cy="10.10" r="1.75" fill="#000"/><circle cx="23.00" cy="10.10" r="1.75" fill="#000"/><circle cx="3.65" cy="14.00" r="1.75" fill="#000"/><circle cx="7.95" cy="14.00" r="1.75" fill="#000"/><circle cx="12.25" cy="14.00" r="1.75" fill="#000"/><circle cx="16.55" cy="14.00" r="1.75" fill="#000"/><circle cx="20.85" cy="14.00" r="1.75" fill="#000"/><circle cx="25.15" cy="14.00" r="1.75" fill="#000"/><circle cx="1.50" cy="17.90" r="1.75" fill="#000"/><circle cx="5.80" cy="17.90" r="1.75" fill="#000"/><circle cx="10.10" cy="17.90" r="1.75" fill="#000"/><circle cx="14.40" cy="17.90" r="1.75" fill="#000"/><circle cx="18.70" cy="17.90" r="1.75" fill="#000"/><circle cx="23.00" cy="17.90" r="1.75" fill="#000"/></svg><rect x="444" y="136" width="21" height="4" fill="#9e1515"/><circle cx="444.5" cy="144" r="1.6" fill="#e8e8e8"/><circle cx="444.5" cy="149" r="1.6" fill="#e8e8e8"/><circle cx="464.5" cy="146" r="1.6" fill="#e8e8e8"/><rect x="501" y="135" width="23" height="22" rx="1.5" fill="#1b1b1b"/><svg x="502" y="140" width="21" height="16"><rect width="21" height="16" fill="#4a4a4a"/><circle cx="1.50" cy="2.30" r="1.75" fill="#000"/><circle cx="5.80" cy="2.30" r="1.75" fill="#000"/><circle cx="10.10" cy="2.30" r="1.75" fill="#000"/><circle cx="14.40" cy="2.30" r="1.75" fill="#000"/><circle cx="18.70" cy="2.30" r="1.75" fill="#000"/><circle cx="23.00" cy="2.30" r="1.75" fill="#000"/><circle cx="3.65" cy="6.20" r="1.75" fill="#000"/><circle cx="7.95" cy="6.20" r="1.75" fill="#000"/><circle cx="12.25" cy="6.20" r="1.75" fill="#000"/><circle cx="16.55" cy="6.20" r="1.75" fill="#000"/><circle cx="20.85" cy="6.20" r="1.75" fill="#000"/><circle cx="25.15" cy="6.20" r="1.75" fill="#000"/><circle cx="1.50" cy="10.10" r="1.75" fill="#000"/><circle cx="5.80" cy="10.10" r="1.75" fill="#000"/><circle cx="10.10" cy="10.10" r="1.75" fill="#000"/><circle cx="14.40" cy="10.10" r="1.75" fill="#000"/><circle cx="18.70" cy="10.10" r="1.75" fill="#000"/><circle cx="23.00" cy="10.10" r="1.75" fill="#000"/><circle cx="3.65" cy="14.00" r="1.75" fill="#000"/><circle cx="7.95" cy="14.00" r="1.75" fill="#000"/><circle cx="12.25" cy="14.00" r="1.75" fill="#000"/><circle cx="16.55" cy="14.00" r="1.75" fill="#000"/><circle cx="20.85" cy="14.00" r="1.75" fill="#000"/><circle cx="25.15" cy="14.00" r="1.75" fill="#000"/><circle cx="1.50" cy="17.90" r="1.75" fill="#000"/><circle cx="5.80" cy="17.90" r="1.75" fill="#000"/><circle cx="10.10" cy="17.90" r="1.75" fill="#000"/><circle cx="14.40" cy="17.90" r="1.75" fill="#000"/><circle cx="18.70" cy="17.90" r="1.75" fill="#000"/><circle cx="23.00" cy="17.90" r="1.75" fill="#000"/></svg><rect x="502" y="136" width="21" height="4" fill="#9e1515"/><circle cx="502.5" cy="144" r="1.6" fill="#e8e8e8"/><circle cx="502.5" cy="149" r="1.6" fill="#e8e8e8"/><circle cx="522.5" cy="146" r="1.6" fill="#e8e8e8"/><rect x="580" y="135" width="23" height="22" rx="1.5" fill="#1b1b1b"/><svg x="581" y="140" width="21" height="16"><rect width="21" height="16" fill="#4a4a4a"/><circle cx="1.50" cy="2.30" r="1.75" fill="#000"/><circle cx="5.80" cy="2.30" r="1.75" fill="#000"/><circle cx="10.10" cy="2.30" r="1.75" fill="#000"/><circle cx="14.40" cy="2.30" r="1.75" fill="#000"/><circle cx="18.70" cy="2.30" r="1.75" fill="#000"/><circle cx="23.00" cy="2.30" r="1.75" fill="#000"/><circle cx="3.65" cy="6.20" r="1.75" fill="#000"/><circle cx="7.95" cy="6.20" r="1.75" fill="#000"/><circle cx="12.25" cy="6.20" r="1.75" fill="#000"/><circle cx="16.55" cy="6.20" r="1.75" fill="#000"/><circle cx="20.85" cy="6.20" r="1.75" fill="#000"/><circle cx="25.15" cy="6.20" r="1.75" fill="#000"/><circle cx="1.50" cy="10.10" r="1.75" fill="#000"/><circle cx="5.80" cy="10.10" r="1.75" fill="#000"/><circle cx="10.10" cy="10.10" r="1.75" fill="#000"/><circle cx="14.40" cy="10.10" r="1.75" fill="#000"/><circle cx="18.70" cy="10.10" r="1.75" fill="#000"/><circle cx="23.00" cy="10.10" r="1.75" fill="#000"/><circle cx="3.65" cy="14.00" r="1.75" fill="#000"/><circle cx="7.95" cy="14.00" r="1.75" fill="#000"/><circle cx="12.25" cy="14.00" r="1.75" fill="#000"/><circle cx="16.55" cy="14.00" r="1.75" fill="#000"/><circle cx="20.85" cy="14.00" r="1.75" fill="#000"/><circle cx="25.15" cy="14.00" r="1.75" fill="#000"/><circle cx="1.50" cy="17.90" r="1.75" fill="#000"/><circle cx="5.80" cy="17.90" r="1.75" fill="#000"/><circle cx="10.10" cy="17.90" r="1.75" fill="#000"/><circle cx="14.40" cy="17.90" r="1.75" fill="#000"/><circle cx="18.70" cy="17.90" r="1.75" fill="#000"/><circle cx="23.00" cy="17.90" r="1.75" fill="#000"/></svg><rect x="581" y="136" width="21" height="4" fill="#9e1515"/><circle cx="581.5" cy="144" r="1.6" fill="#e8e8e8"/><circle cx="581.5" cy="149" r="1.6" fill="#e8e8e8"/><circle cx="601.5" cy="146" r="1.6" fill="#e8e8e8"/><rect x="644" y="135" width="23" height="22" rx="1.5" fill="#1b1b1b"/><svg x="645" y="140" width="21" height="16"><rect width="21" height="16" fill="#4a4a4a"/><circle cx="1.50" cy="2.30" r="1.75" fill="#000"/><circle cx="5.80" cy="2.30" r="1.75" fill="#000"/><circle cx="10.10" cy="2.30" r="1.75" fill="#000"/><circle cx="14.40" cy="2.30" r="1.75" fill="#000"/><circle cx="18.70" cy="2.30" r="1.75" fill="#000"/><circle cx="23.00" cy="2.30" r="1.75" fill="#000"/><circle cx="3.65" cy="6.20" r="1.75" fill="#000"/><circle cx="7.95" cy="6.20" r="1.75" fill="#000"/><circle cx="12.25" cy="6.20" r="1.75" fill="#000"/><circle cx="16.55" cy="6.20" r="1.75" fill="#000"/><circle cx="20.85" cy="6.20" r="1.75" fill="#000"/><circle cx="25.15" cy="6.20" r="1.75" fill="#000"/><circle cx="1.50" cy="10.10" r="1.75" fill="#000"/><circle cx="5.80" cy="10.10" r="1.75" fill="#000"/><circle cx="10.10" cy="10.10" r="1.75" fill="#000"/><circle cx="14.40" cy="10.10" r="1.75" fill="#000"/><circle cx="18.70" cy="10.10" r="1.75" fill="#000"/><circle cx="23.00" cy="10.10" r="1.75" fill="#000"/><circle cx="3.65" cy="14.00" r="1.75" fill="#000"/><circle cx="7.95" cy="14.00" r="1.75" fill="#000"/><circle cx="12.25" cy="14.00" r="1.75" fill="#000"/><circle cx="16.55" cy="14.00" r="1.75" fill="#000"/><circle cx="20.85" cy="14.00" r="1.75" fill="#000"/><circle cx="25.15" cy="14.00" r="1.75" fill="#000"/><circle cx="1.50" cy="17.90" r="1.75" fill="#000"/><circle cx="5.80" cy="17.90" r="1.75" fill="#000"/><circle cx="10.10" cy="17.90" r="1.75" fill="#000"/><circle cx="14.40" cy="17.90" r="1.75" fill="#000"/><circle cx="18.70" cy="17.90" r="1.75" fill="#000"/><circle cx="23.00" cy="17.90" r="1.75" fill="#000"/></svg><rect x="645" y="136" width="21" height="4" fill="#427a26"/><circle cx="645.5" cy="146" r="1.6" fill="#e8e8e8"/><circle cx="665.5" cy="146" r="1.6" fill="#e8e8e8"/><rect x="690" y="135" width="23" height="22" rx="1.5" fill="#1b1b1b"/><svg x="691" y="140" width="21" height="16"><rect width="21" height="16" fill="#444"/><circle cx="1.50" cy="2.30" r="1.75" fill="#000"/><circle cx="5.80" cy="2.30" r="1.75" fill="#000"/><circle cx="10.10" cy="2.30" r="1.75" fill="#000"/><circle cx="14.40" cy="2.30" r="1.75" fill="#000"/><circle cx="18.70" cy="2.30" r="1.75" fill="#000"/><circle cx="23.00" cy="2.30" r="1.75" fill="#000"/><circle cx="3.65" cy="6.20" r="1.75" fill="#000"/><circle cx="7.95" cy="6.20" r="1.75" fill="#000"/><circle cx="12.25" cy="6.20" r="1.75" fill="#000"/><circle cx="16.55" cy="6.20" r="1.75" fill="#000"/><circle cx="20.85" cy="6.20" r="1.75" fill="#000"/><circle cx="25.15" cy="6.20" r="1.75" fill="#000"/><circle cx="1.50" cy="10.10" r="1.75" fill="#000"/><circle cx="5.80" cy="10.10" r="1.75" fill="#000"/><circle cx="10.10" cy="10.10" r="1.75" fill="#000"/><circle cx="14.40" cy="10.10" r="1.75" fill="#000"/><circle cx="18.70" cy="10.10" r="1.75" fill="#000"/><circle cx="23.00" cy="10.10" r="1.75" fill="#000"/><circle cx="3.65" cy="14.00" r="1.75" fill="#000"/><circle cx="7.95" cy="14.00" r="1.75" fill="#000"/><circle cx="12.25" cy="14.00" r="1.75" fill="#000"/><circle cx="16.55" cy="14.00" r="1.75" fill="#000"/><circle cx="20.85" cy="14.00" r="1.75" fill="#000"/><circle cx="25.15" cy="14.00" r="1.75" fill="#000"/><circle cx="1.50" cy="17.90" r="1.75" fill="#000"/><circle cx="5.80" cy="17.90" r="1.75" fill="#000"/><circle cx="10.10" cy="17.90" r="1.75" fill="#000"/><circle cx="14.40" cy="17.90" r="1.75" fill="#000"/><circle cx="18.70" cy="17.90" r="1.75" fill="#000"/><circle cx="23.00" cy="17.90" r="1.75" fill="#000"/></svg><rect x="691" y="136" width="21" height="4" fill="#cfcfcf"/><circle cx="691.5" cy="139" r="1.6" fill="#e8e8e8"/><circle cx="691.5" cy="146" r="1.6" fill="#e8e8e8"/><circle cx="691.5" cy="151" r="1.6" fill="#e8e8e8"/><circle cx="711.5" cy="146" r="1.6" fill="#e8e8e8"/><rect x="365" y="104" width="23" height="22" rx="1.5" fill="#1b1b1b"/><rect x="366" y="109" width="21" height="16" fill="#050505"/><circle cx="376.5" cy="117.5" r="9.2" fill="url(#sph)"/><rect x="366" y="105" width="21" height="4" fill="#9e1515"/><circle cx="386.5" cy="115" r="1.6" fill="#e8e8e8"/><rect x="239" y="188" width="23" height="22" rx="1.5" fill="#1b1b1b"/><rect x="240" y="193" width="21" height="16" fill="#e8e8e8"/><rect x="240" y="193" width="21" height="16" fill="#666" filter="url(#nz)"/><rect x="240" y="189" width="21" height="4" fill="#9e1515"/><circle cx="260.5" cy="199" r="1.6" fill="#e8e8e8"/><rect x="443" y="203" width="23" height="22" rx="1.5" fill="#1b1b1b"/><rect x="444" y="208" width="21" height="16" fill="#e8e8e8"/><rect x="444" y="208" width="21" height="16" fill="#666" filter="url(#nz)"/><rect x="444" y="204" width="21" height="4" fill="#9e1515"/><circle cx="464.5" cy="214" r="1.6" fill="#e8e8e8"/><rect x="492" y="195" width="23" height="22" rx="1.5" fill="#1b1b1b"/><rect x="493" y="200" width="21" height="16" fill="#c8c8c8"/><rect x="493" y="200" width="21" height="16" fill="#666" filter="url(#nz2)"/><rect x="493" y="196" width="21" height="4" fill="#a81c1c"/><circle cx="513.5" cy="206" r="1.6" fill="#e8e8e8"/><rect x="549" y="188" width="23" height="22" rx="1.5" fill="#1b1b1b"/><rect x="550" y="193" width="21" height="16" fill="#c0c0c0"/><rect x="550" y="193" width="21" height="16" fill="#666" filter="url(#nz2)"/><rect x="550" y="189" width="21" height="4" fill="#a59e7c"/><circle cx="550.5" cy="199" r="1.6" fill="#e8e8e8"/><circle cx="570.5" cy="199" r="1.6" fill="#e8e8e8"/><rect x="648" y="93" width="23" height="22" rx="1.5" fill="#1b1b1b"/><rect x="649" y="98" width="21" height="16" fill="#e8e8e8"/><rect x="649" y="98" width="21" height="16" fill="#666" filter="url(#nz)"/><rect x="649" y="94" width="21" height="4" fill="#9e1515"/><circle cx="669.5" cy="103" r="1.6" fill="#e8e8e8"/><rect x="330" y="248" width="23" height="22" rx="1.5" fill="#1b1b1b"/><rect x="331" y="253" width="21" height="16" fill="#050505"/><path d="M340.5 255.0 L345.8 258.0 L345.8 264.0 L340.5 267.0 L335.2 264.0 L335.2 258.0Z" fill="#fff"/><rect x="331" y="249" width="21" height="4" fill="#9e1515"/><circle cx="351.5" cy="259" r="1.6" fill="#e8e8e8"/><rect x="383" y="248" width="23" height="22" rx="1.5" fill="#1b1b1b"/><svg x="384" y="253" width="21" height="16"><rect width="21" height="16" fill="#050505"/><circle cx="1.50" cy="2.30" r="1.5" fill="#fff"/><circle cx="5.80" cy="2.30" r="1.5" fill="#fff"/><circle cx="10.10" cy="2.30" r="1.5" fill="#fff"/><circle cx="14.40" cy="2.30" r="1.5" fill="#fff"/><circle cx="18.70" cy="2.30" r="1.5" fill="#fff"/><circle cx="23.00" cy="2.30" r="1.5" fill="#fff"/><circle cx="3.65" cy="6.20" r="1.5" fill="#fff"/><circle cx="7.95" cy="6.20" r="1.5" fill="#fff"/><circle cx="12.25" cy="6.20" r="1.5" fill="#fff"/><circle cx="16.55" cy="6.20" r="1.5" fill="#fff"/><circle cx="20.85" cy="6.20" r="1.5" fill="#fff"/><circle cx="25.15" cy="6.20" r="1.5" fill="#fff"/><circle cx="1.50" cy="10.10" r="1.5" fill="#fff"/><circle cx="5.80" cy="10.10" r="1.5" fill="#fff"/><circle cx="10.10" cy="10.10" r="1.5" fill="#fff"/><circle cx="14.40" cy="10.10" r="1.5" fill="#fff"/><circle cx="18.70" cy="10.10" r="1.5" fill="#fff"/><circle cx="23.00" cy="10.10" r="1.5" fill="#fff"/><circle cx="3.65" cy="14.00" r="1.5" fill="#fff"/><circle cx="7.95" cy="14.00" r="1.5" fill="#fff"/><circle cx="12.25" cy="14.00" r="1.5" fill="#fff"/><circle cx="16.55" cy="14.00" r="1.5" fill="#fff"/><circle cx="20.85" cy="14.00" r="1.5" fill="#fff"/><circle cx="25.15" cy="14.00" r="1.5" fill="#fff"/><circle cx="1.50" cy="17.90" r="1.5" fill="#fff"/><circle cx="5.80" cy="17.90" r="1.5" fill="#fff"/><circle cx="10.10" cy="17.90" r="1.5" fill="#fff"/><circle cx="14.40" cy="17.90" r="1.5" fill="#fff"/><circle cx="18.70" cy="17.90" r="1.5" fill="#fff"/><circle cx="23.00" cy="17.90" r="1.5" fill="#fff"/></svg><rect x="384" y="249" width="21" height="4" fill="#9e1515"/><circle cx="384.5" cy="256" r="1.6" fill="#e8e8e8"/><circle cx="384.5" cy="262" r="1.6" fill="#e8e8e8"/><circle cx="404.5" cy="259" r="1.6" fill="#e8e8e8"/><rect x="459" y="248" width="23" height="22" rx="1.5" fill="#1b1b1b"/><svg x="460" y="253" width="21" height="16"><rect width="21" height="16" fill="#050505"/><circle cx="1.50" cy="2.30" r="1.5" fill="#fff"/><circle cx="5.80" cy="2.30" r="1.5" fill="#fff"/><circle cx="10.10" cy="2.30" r="1.5" fill="#fff"/><circle cx="14.40" cy="2.30" r="1.5" fill="#fff"/><circle cx="18.70" cy="2.30" r="1.5" fill="#fff"/><circle cx="23.00" cy="2.30" r="1.5" fill="#fff"/><circle cx="3.65" cy="6.20" r="1.5" fill="#fff"/><circle cx="7.95" cy="6.20" r="1.5" fill="#fff"/><circle cx="12.25" cy="6.20" r="1.5" fill="#fff"/><circle cx="16.55" cy="6.20" r="1.5" fill="#fff"/><circle cx="20.85" cy="6.20" r="1.5" fill="#fff"/><circle cx="25.15" cy="6.20" r="1.5" fill="#fff"/><circle cx="1.50" cy="10.10" r="1.5" fill="#fff"/><circle cx="5.80" cy="10.10" r="1.5" fill="#fff"/><circle cx="10.10" cy="10.10" r="1.5" fill="#fff"/><circle cx="14.40" cy="10.10" r="1.5" fill="#fff"/><circle cx="18.70" cy="10.10" r="1.5" fill="#fff"/><circle cx="23.00" cy="10.10" r="1.5" fill="#fff"/><circle cx="3.65" cy="14.00" r="1.5" fill="#fff"/><circle cx="7.95" cy="14.00" r="1.5" fill="#fff"/><circle cx="12.25" cy="14.00" r="1.5" fill="#fff"/><circle cx="16.55" cy="14.00" r="1.5" fill="#fff"/><circle cx="20.85" cy="14.00" r="1.5" fill="#fff"/><circle cx="25.15" cy="14.00" r="1.5" fill="#fff"/><circle cx="1.50" cy="17.90" r="1.5" fill="#fff"/><circle cx="5.80" cy="17.90" r="1.5" fill="#fff"/><circle cx="10.10" cy="17.90" r="1.5" fill="#fff"/><circle cx="14.40" cy="17.90" r="1.5" fill="#fff"/><circle cx="18.70" cy="17.90" r="1.5" fill="#fff"/><circle cx="23.00" cy="17.90" r="1.5" fill="#fff"/></svg><rect x="460" y="249" width="21" height="4" fill="#7aae72"/><circle cx="460.5" cy="259" r="1.6" fill="#e8e8e8"/><circle cx="480.5" cy="259" r="1.6" fill="#e8e8e8"/><rect x="527" y="248" width="23" height="22" rx="1.5" fill="#1b1b1b"/><svg x="528" y="253" width="21" height="16"><rect width="21" height="16" fill="#f4f4f4"/><circle cx="1.50" cy="2.30" r="1.65" fill="#000"/><circle cx="5.80" cy="2.30" r="1.65" fill="#000"/><circle cx="10.10" cy="2.30" r="1.65" fill="#000"/><circle cx="14.40" cy="2.30" r="1.65" fill="#000"/><circle cx="18.70" cy="2.30" r="1.65" fill="#000"/><circle cx="23.00" cy="2.30" r="1.65" fill="#000"/><circle cx="3.65" cy="6.20" r="1.65" fill="#000"/><circle cx="7.95" cy="6.20" r="1.65" fill="#000"/><circle cx="12.25" cy="6.20" r="1.65" fill="#000"/><circle cx="16.55" cy="6.20" r="1.65" fill="#000"/><circle cx="20.85" cy="6.20" r="1.65" fill="#000"/><circle cx="25.15" cy="6.20" r="1.65" fill="#000"/><circle cx="1.50" cy="10.10" r="1.65" fill="#000"/><circle cx="5.80" cy="10.10" r="1.65" fill="#000"/><circle cx="10.10" cy="10.10" r="1.65" fill="#000"/><circle cx="14.40" cy="10.10" r="1.65" fill="#000"/><circle cx="18.70" cy="10.10" r="1.65" fill="#000"/><circle cx="23.00" cy="10.10" r="1.65" fill="#000"/><circle cx="3.65" cy="14.00" r="1.65" fill="#000"/><circle cx="7.95" cy="14.00" r="1.65" fill="#000"/><circle cx="12.25" cy="14.00" r="1.65" fill="#000"/><circle cx="16.55" cy="14.00" r="1.65" fill="#000"/><circle cx="20.85" cy="14.00" r="1.65" fill="#000"/><circle cx="25.15" cy="14.00" r="1.65" fill="#000"/><circle cx="1.50" cy="17.90" r="1.65" fill="#000"/><circle cx="5.80" cy="17.90" r="1.65" fill="#000"/><circle cx="10.10" cy="17.90" r="1.65" fill="#000"/><circle cx="14.40" cy="17.90" r="1.65" fill="#000"/><circle cx="18.70" cy="17.90" r="1.65" fill="#000"/><circle cx="23.00" cy="17.90" r="1.65" fill="#000"/></svg><rect x="528" y="249" width="21" height="4" fill="#9e1515"/><circle cx="528.5" cy="259" r="1.6" fill="#e8e8e8"/><circle cx="548.5" cy="259" r="1.6" fill="#e8e8e8"/><rect x="588" y="248" width="23" height="22" rx="1.5" fill="#1b1b1b"/><svg x="589" y="253" width="21" height="16"><rect width="21" height="16" fill="#f4f4f4"/><circle cx="1.50" cy="2.30" r="1.65" fill="#000"/><circle cx="5.80" cy="2.30" r="1.65" fill="#000"/><circle cx="10.10" cy="2.30" r="1.65" fill="#000"/><circle cx="14.40" cy="2.30" r="1.65" fill="#000"/><circle cx="18.70" cy="2.30" r="1.65" fill="#000"/><circle cx="23.00" cy="2.30" r="1.65" fill="#000"/><circle cx="3.65" cy="6.20" r="1.65" fill="#000"/><circle cx="7.95" cy="6.20" r="1.65" fill="#000"/><circle cx="12.25" cy="6.20" r="1.65" fill="#000"/><circle cx="16.55" cy="6.20" r="1.65" fill="#000"/><circle cx="20.85" cy="6.20" r="1.65" fill="#000"/><circle cx="25.15" cy="6.20" r="1.65" fill="#000"/><circle cx="1.50" cy="10.10" r="1.65" fill="#000"/><circle cx="5.80" cy="10.10" r="1.65" fill="#000"/><circle cx="10.10" cy="10.10" r="1.65" fill="#000"/><circle cx="14.40" cy="10.10" r="1.65" fill="#000"/><circle cx="18.70" cy="10.10" r="1.65" fill="#000"/><circle cx="23.00" cy="10.10" r="1.65" fill="#000"/><circle cx="3.65" cy="14.00" r="1.65" fill="#000"/><circle cx="7.95" cy="14.00" r="1.65" fill="#000"/><circle cx="12.25" cy="14.00" r="1.65" fill="#000"/><circle cx="16.55" cy="14.00" r="1.65" fill="#000"/><circle cx="20.85" cy="14.00" r="1.65" fill="#000"/><circle cx="25.15" cy="14.00" r="1.65" fill="#000"/><circle cx="1.50" cy="17.90" r="1.65" fill="#000"/><circle cx="5.80" cy="17.90" r="1.65" fill="#000"/><circle cx="10.10" cy="17.90" r="1.65" fill="#000"/><circle cx="14.40" cy="17.90" r="1.65" fill="#000"/><circle cx="18.70" cy="17.90" r="1.65" fill="#000"/><circle cx="23.00" cy="17.90" r="1.65" fill="#000"/></svg><rect x="589" y="249" width="21" height="4" fill="#9e1515"/><circle cx="589.5" cy="259" r="1.6" fill="#e8e8e8"/><circle cx="609.5" cy="259" r="1.6" fill="#e8e8e8"/><rect x="640" y="248" width="23" height="22" rx="1.5" fill="#1b1b1b"/><svg x="641" y="253" width="21" height="16"><rect width="21" height="16" fill="#f4f4f4"/><circle cx="1.50" cy="2.30" r="1.65" fill="#000"/><circle cx="5.80" cy="2.30" r="1.65" fill="#000"/><circle cx="10.10" cy="2.30" r="1.65" fill="#000"/><circle cx="14.40" cy="2.30" r="1.65" fill="#000"/><circle cx="18.70" cy="2.30" r="1.65" fill="#000"/><circle cx="23.00" cy="2.30" r="1.65" fill="#000"/><circle cx="3.65" cy="6.20" r="1.65" fill="#000"/><circle cx="7.95" cy="6.20" r="1.65" fill="#000"/><circle cx="12.25" cy="6.20" r="1.65" fill="#000"/><circle cx="16.55" cy="6.20" r="1.65" fill="#000"/><circle cx="20.85" cy="6.20" r="1.65" fill="#000"/><circle cx="25.15" cy="6.20" r="1.65" fill="#000"/><circle cx="1.50" cy="10.10" r="1.65" fill="#000"/><circle cx="5.80" cy="10.10" r="1.65" fill="#000"/><circle cx="10.10" cy="10.10" r="1.65" fill="#000"/><circle cx="14.40" cy="10.10" r="1.65" fill="#000"/><circle cx="18.70" cy="10.10" r="1.65" fill="#000"/><circle cx="23.00" cy="10.10" r="1.65" fill="#000"/><circle cx="3.65" cy="14.00" r="1.65" fill="#000"/><circle cx="7.95" cy="14.00" r="1.65" fill="#000"/><circle cx="12.25" cy="14.00" r="1.65" fill="#000"/><circle cx="16.55" cy="14.00" r="1.65" fill="#000"/><circle cx="20.85" cy="14.00" r="1.65" fill="#000"/><circle cx="25.15" cy="14.00" r="1.65" fill="#000"/><circle cx="1.50" cy="17.90" r="1.65" fill="#000"/><circle cx="5.80" cy="17.90" r="1.65" fill="#000"/><circle cx="10.10" cy="17.90" r="1.65" fill="#000"/><circle cx="14.40" cy="17.90" r="1.65" fill="#000"/><circle cx="18.70" cy="17.90" r="1.65" fill="#000"/><circle cx="23.00" cy="17.90" r="1.65" fill="#000"/></svg><rect x="641" y="249" width="21" height="4" fill="#c4c4c4"/><circle cx="641.5" cy="255" r="1.6" fill="#e8e8e8"/><circle cx="641.5" cy="262" r="1.6" fill="#e8e8e8"/><circle cx="641.5" cy="267" r="1.6" fill="#e8e8e8"/><circle cx="661.5" cy="259" r="1.6" fill="#e8e8e8"/><rect x="318" y="305" width="23" height="22" rx="1.5" fill="#1b1b1b"/><rect x="319" y="310" width="21" height="16" fill="#050505"/><path d="M322.5 313.0 L325.5 311.0 L331.5 311.0 L334.5 313.0 L334.5 322.0 L330.5 325.0 L326.5 325.0 L322.5 322.0Z" fill="#fff"/><rect x="319" y="306" width="21" height="4" fill="#9e1515"/><circle cx="339.5" cy="316" r="1.6" fill="#e8e8e8"/><rect x="368" y="305" width="23" height="22" rx="1.5" fill="#1b1b1b"/><svg x="369" y="310" width="21" height="16"><rect width="21" height="16" fill="#050505"/><circle cx="1.50" cy="2.30" r="1.5" fill="#fff"/><circle cx="5.80" cy="2.30" r="1.5" fill="#fff"/><circle cx="10.10" cy="2.30" r="1.5" fill="#fff"/><circle cx="14.40" cy="2.30" r="1.5" fill="#fff"/><circle cx="18.70" cy="2.30" r="1.5" fill="#fff"/><circle cx="23.00" cy="2.30" r="1.5" fill="#fff"/><circle cx="3.65" cy="6.20" r="1.5" fill="#fff"/><circle cx="7.95" cy="6.20" r="1.5" fill="#fff"/><circle cx="12.25" cy="6.20" r="1.5" fill="#fff"/><circle cx="16.55" cy="6.20" r="1.5" fill="#fff"/><circle cx="20.85" cy="6.20" r="1.5" fill="#fff"/><circle cx="25.15" cy="6.20" r="1.5" fill="#fff"/><circle cx="1.50" cy="10.10" r="1.5" fill="#fff"/><circle cx="5.80" cy="10.10" r="1.5" fill="#fff"/><circle cx="10.10" cy="10.10" r="1.5" fill="#fff"/><circle cx="14.40" cy="10.10" r="1.5" fill="#fff"/><circle cx="18.70" cy="10.10" r="1.5" fill="#fff"/><circle cx="23.00" cy="10.10" r="1.5" fill="#fff"/><circle cx="3.65" cy="14.00" r="1.5" fill="#fff"/><circle cx="7.95" cy="14.00" r="1.5" fill="#fff"/><circle cx="12.25" cy="14.00" r="1.5" fill="#fff"/><circle cx="16.55" cy="14.00" r="1.5" fill="#fff"/><circle cx="20.85" cy="14.00" r="1.5" fill="#fff"/><circle cx="25.15" cy="14.00" r="1.5" fill="#fff"/><circle cx="1.50" cy="17.90" r="1.5" fill="#fff"/><circle cx="5.80" cy="17.90" r="1.5" fill="#fff"/><circle cx="10.10" cy="17.90" r="1.5" fill="#fff"/><circle cx="14.40" cy="17.90" r="1.5" fill="#fff"/><circle cx="18.70" cy="17.90" r="1.5" fill="#fff"/><circle cx="23.00" cy="17.90" r="1.5" fill="#fff"/></svg><rect x="369" y="306" width="21" height="4" fill="#9e1515"/><circle cx="369.5" cy="313" r="1.6" fill="#e8e8e8"/><circle cx="369.5" cy="319" r="1.6" fill="#e8e8e8"/><circle cx="389.5" cy="316" r="1.6" fill="#e8e8e8"/><rect x="421" y="305" width="23" height="22" rx="1.5" fill="#1b1b1b"/><svg x="422" y="310" width="21" height="16"><rect width="21" height="16" fill="#050505"/><circle cx="1.50" cy="2.30" r="1.5" fill="#fff"/><circle cx="5.80" cy="2.30" r="1.5" fill="#fff"/><circle cx="10.10" cy="2.30" r="1.5" fill="#fff"/><circle cx="14.40" cy="2.30" r="1.5" fill="#fff"/><circle cx="18.70" cy="2.30" r="1.5" fill="#fff"/><circle cx="23.00" cy="2.30" r="1.5" fill="#fff"/><circle cx="3.65" cy="6.20" r="1.5" fill="#fff"/><circle cx="7.95" cy="6.20" r="1.5" fill="#fff"/><circle cx="12.25" cy="6.20" r="1.5" fill="#fff"/><circle cx="16.55" cy="6.20" r="1.5" fill="#fff"/><circle cx="20.85" cy="6.20" r="1.5" fill="#fff"/><circle cx="25.15" cy="6.20" r="1.5" fill="#fff"/><circle cx="1.50" cy="10.10" r="1.5" fill="#fff"/><circle cx="5.80" cy="10.10" r="1.5" fill="#fff"/><circle cx="10.10" cy="10.10" r="1.5" fill="#fff"/><circle cx="14.40" cy="10.10" r="1.5" fill="#fff"/><circle cx="18.70" cy="10.10" r="1.5" fill="#fff"/><circle cx="23.00" cy="10.10" r="1.5" fill="#fff"/><circle cx="3.65" cy="14.00" r="1.5" fill="#fff"/><circle cx="7.95" cy="14.00" r="1.5" fill="#fff"/><circle cx="12.25" cy="14.00" r="1.5" fill="#fff"/><circle cx="16.55" cy="14.00" r="1.5" fill="#fff"/><circle cx="20.85" cy="14.00" r="1.5" fill="#fff"/><circle cx="25.15" cy="14.00" r="1.5" fill="#fff"/><circle cx="1.50" cy="17.90" r="1.5" fill="#fff"/><circle cx="5.80" cy="17.90" r="1.5" fill="#fff"/><circle cx="10.10" cy="17.90" r="1.5" fill="#fff"/><circle cx="14.40" cy="17.90" r="1.5" fill="#fff"/><circle cx="18.70" cy="17.90" r="1.5" fill="#fff"/><circle cx="23.00" cy="17.90" r="1.5" fill="#fff"/></svg><rect x="422" y="306" width="21" height="4" fill="#7aae72"/><circle cx="422.5" cy="316" r="1.6" fill="#e8e8e8"/><circle cx="442.5" cy="316" r="1.6" fill="#e8e8e8"/><rect x="501" y="305" width="23" height="22" rx="1.5" fill="#1b1b1b"/><svg x="502" y="310" width="21" height="16"><rect width="21" height="16" fill="#f4f4f4"/><circle cx="1.50" cy="2.30" r="1.65" fill="#000"/><circle cx="5.80" cy="2.30" r="1.65" fill="#000"/><circle cx="10.10" cy="2.30" r="1.65" fill="#000"/><circle cx="14.40" cy="2.30" r="1.65" fill="#000"/><circle cx="18.70" cy="2.30" r="1.65" fill="#000"/><circle cx="23.00" cy="2.30" r="1.65" fill="#000"/><circle cx="3.65" cy="6.20" r="1.65" fill="#000"/><circle cx="7.95" cy="6.20" r="1.65" fill="#000"/><circle cx="12.25" cy="6.20" r="1.65" fill="#000"/><circle cx="16.55" cy="6.20" r="1.65" fill="#000"/><circle cx="20.85" cy="6.20" r="1.65" fill="#000"/><circle cx="25.15" cy="6.20" r="1.65" fill="#000"/><circle cx="1.50" cy="10.10" r="1.65" fill="#000"/><circle cx="5.80" cy="10.10" r="1.65" fill="#000"/><circle cx="10.10" cy="10.10" r="1.65" fill="#000"/><circle cx="14.40" cy="10.10" r="1.65" fill="#000"/><circle cx="18.70" cy="10.10" r="1.65" fill="#000"/><circle cx="23.00" cy="10.10" r="1.65" fill="#000"/><circle cx="3.65" cy="14.00" r="1.65" fill="#000"/><circle cx="7.95" cy="14.00" r="1.65" fill="#000"/><circle cx="12.25" cy="14.00" r="1.65" fill="#000"/><circle cx="16.55" cy="14.00" r="1.65" fill="#000"/><circle cx="20.85" cy="14.00" r="1.65" fill="#000"/><circle cx="25.15" cy="14.00" r="1.65" fill="#000"/><circle cx="1.50" cy="17.90" r="1.65" fill="#000"/><circle cx="5.80" cy="17.90" r="1.65" fill="#000"/><circle cx="10.10" cy="17.90" r="1.65" fill="#000"/><circle cx="14.40" cy="17.90" r="1.65" fill="#000"/><circle cx="18.70" cy="17.90" r="1.65" fill="#000"/><circle cx="23.00" cy="17.90" r="1.65" fill="#000"/></svg><rect x="502" y="306" width="21" height="4" fill="#9e1515"/><circle cx="502.5" cy="316" r="1.6" fill="#e8e8e8"/><circle cx="522.5" cy="316" r="1.6" fill="#e8e8e8"/><rect x="550" y="305" width="23" height="22" rx="1.5" fill="#1b1b1b"/><svg x="551" y="310" width="21" height="16"><rect width="21" height="16" fill="#f4f4f4"/><circle cx="1.50" cy="2.30" r="1.65" fill="#000"/><circle cx="5.80" cy="2.30" r="1.65" fill="#000"/><circle cx="10.10" cy="2.30" r="1.65" fill="#000"/><circle cx="14.40" cy="2.30" r="1.65" fill="#000"/><circle cx="18.70" cy="2.30" r="1.65" fill="#000"/><circle cx="23.00" cy="2.30" r="1.65" fill="#000"/><circle cx="3.65" cy="6.20" r="1.65" fill="#000"/><circle cx="7.95" cy="6.20" r="1.65" fill="#000"/><circle cx="12.25" cy="6.20" r="1.65" fill="#000"/><circle cx="16.55" cy="6.20" r="1.65" fill="#000"/><circle cx="20.85" cy="6.20" r="1.65" fill="#000"/><circle cx="25.15" cy="6.20" r="1.65" fill="#000"/><circle cx="1.50" cy="10.10" r="1.65" fill="#000"/><circle cx="5.80" cy="10.10" r="1.65" fill="#000"/><circle cx="10.10" cy="10.10" r="1.65" fill="#000"/><circle cx="14.40" cy="10.10" r="1.65" fill="#000"/><circle cx="18.70" cy="10.10" r="1.65" fill="#000"/><circle cx="23.00" cy="10.10" r="1.65" fill="#000"/><circle cx="3.65" cy="14.00" r="1.65" fill="#000"/><circle cx="7.95" cy="14.00" r="1.65" fill="#000"/><circle cx="12.25" cy="14.00" r="1.65" fill="#000"/><circle cx="16.55" cy="14.00" r="1.65" fill="#000"/><circle cx="20.85" cy="14.00" r="1.65" fill="#000"/><circle cx="25.15" cy="14.00" r="1.65" fill="#000"/><circle cx="1.50" cy="17.90" r="1.65" fill="#000"/><circle cx="5.80" cy="17.90" r="1.65" fill="#000"/><circle cx="10.10" cy="17.90" r="1.65" fill="#000"/><circle cx="14.40" cy="17.90" r="1.65" fill="#000"/><circle cx="18.70" cy="17.90" r="1.65" fill="#000"/><circle cx="23.00" cy="17.90" r="1.65" fill="#000"/></svg><rect x="551" y="306" width="21" height="4" fill="#9e1515"/><circle cx="551.5" cy="316" r="1.6" fill="#e8e8e8"/><circle cx="571.5" cy="316" r="1.6" fill="#e8e8e8"/><rect x="595" y="305" width="23" height="22" rx="1.5" fill="#1b1b1b"/><svg x="596" y="310" width="21" height="16"><rect width="21" height="16" fill="#d8d8d8"/><circle cx="1.50" cy="2.30" r="1.65" fill="#000"/><circle cx="5.80" cy="2.30" r="1.65" fill="#000"/><circle cx="10.10" cy="2.30" r="1.65" fill="#000"/><circle cx="14.40" cy="2.30" r="1.65" fill="#000"/><circle cx="18.70" cy="2.30" r="1.65" fill="#000"/><circle cx="23.00" cy="2.30" r="1.65" fill="#000"/><circle cx="3.65" cy="6.20" r="1.65" fill="#000"/><circle cx="7.95" cy="6.20" r="1.65" fill="#000"/><circle cx="12.25" cy="6.20" r="1.65" fill="#000"/><circle cx="16.55" cy="6.20" r="1.65" fill="#000"/><circle cx="20.85" cy="6.20" r="1.65" fill="#000"/><circle cx="25.15" cy="6.20" r="1.65" fill="#000"/><circle cx="1.50" cy="10.10" r="1.65" fill="#000"/><circle cx="5.80" cy="10.10" r="1.65" fill="#000"/><circle cx="10.10" cy="10.10" r="1.65" fill="#000"/><circle cx="14.40" cy="10.10" r="1.65" fill="#000"/><circle cx="18.70" cy="10.10" r="1.65" fill="#000"/><circle cx="23.00" cy="10.10" r="1.65" fill="#000"/><circle cx="3.65" cy="14.00" r="1.65" fill="#000"/><circle cx="7.95" cy="14.00" r="1.65" fill="#000"/><circle cx="12.25" cy="14.00" r="1.65" fill="#000"/><circle cx="16.55" cy="14.00" r="1.65" fill="#000"/><circle cx="20.85" cy="14.00" r="1.65" fill="#000"/><circle cx="25.15" cy="14.00" r="1.65" fill="#000"/><circle cx="1.50" cy="17.90" r="1.65" fill="#000"/><circle cx="5.80" cy="17.90" r="1.65" fill="#000"/><circle cx="10.10" cy="17.90" r="1.65" fill="#000"/><circle cx="14.40" cy="17.90" r="1.65" fill="#000"/><circle cx="18.70" cy="17.90" r="1.65" fill="#000"/><circle cx="23.00" cy="17.90" r="1.65" fill="#000"/></svg><rect x="596" y="306" width="21" height="4" fill="#7aae72"/><circle cx="596.5" cy="316" r="1.6" fill="#e8e8e8"/><circle cx="616.5" cy="316" r="1.6" fill="#e8e8e8"/><rect x="739" y="248" width="23" height="22" rx="1.5" fill="#1b1b1b"/><svg x="740" y="253" width="21" height="16"><rect width="21" height="16" fill="#b8b8b8"/><circle cx="1.50" cy="2.30" r="1.65" fill="#000"/><circle cx="5.80" cy="2.30" r="1.65" fill="#000"/><circle cx="10.10" cy="2.30" r="1.65" fill="#000"/><circle cx="14.40" cy="2.30" r="1.65" fill="#000"/><circle cx="18.70" cy="2.30" r="1.65" fill="#000"/><circle cx="23.00" cy="2.30" r="1.65" fill="#000"/><circle cx="3.65" cy="6.20" r="1.65" fill="#000"/><circle cx="7.95" cy="6.20" r="1.65" fill="#000"/><circle cx="12.25" cy="6.20" r="1.65" fill="#000"/><circle cx="16.55" cy="6.20" r="1.65" fill="#000"/><circle cx="20.85" cy="6.20" r="1.65" fill="#000"/><circle cx="25.15" cy="6.20" r="1.65" fill="#000"/><circle cx="1.50" cy="10.10" r="1.65" fill="#000"/><circle cx="5.80" cy="10.10" r="1.65" fill="#000"/><circle cx="10.10" cy="10.10" r="1.65" fill="#000"/><circle cx="14.40" cy="10.10" r="1.65" fill="#000"/><circle cx="18.70" cy="10.10" r="1.65" fill="#000"/><circle cx="23.00" cy="10.10" r="1.65" fill="#000"/><circle cx="3.65" cy="14.00" r="1.65" fill="#000"/><circle cx="7.95" cy="14.00" r="1.65" fill="#000"/><circle cx="12.25" cy="14.00" r="1.65" fill="#000"/><circle cx="16.55" cy="14.00" r="1.65" fill="#000"/><circle cx="20.85" cy="14.00" r="1.65" fill="#000"/><circle cx="25.15" cy="14.00" r="1.65" fill="#000"/><circle cx="1.50" cy="17.90" r="1.65" fill="#000"/><circle cx="5.80" cy="17.90" r="1.65" fill="#000"/><circle cx="10.10" cy="17.90" r="1.65" fill="#000"/><circle cx="14.40" cy="17.90" r="1.65" fill="#000"/><circle cx="18.70" cy="17.90" r="1.65" fill="#000"/><circle cx="23.00" cy="17.90" r="1.65" fill="#000"/></svg><rect x="740" y="249" width="21" height="4" fill="#b4b4b4"/><circle cx="740.5" cy="255" r="1.6" fill="#e8e8e8"/><circle cx="740.5" cy="259" r="1.6" fill="#e8e8e8"/><circle cx="740.5" cy="264" r="1.6" fill="#e8e8e8"/><circle cx="760.5" cy="259" r="1.6" fill="#e8e8e8"/><rect x="799" y="253" width="23" height="22" rx="1.5" fill="#1b1b1b"/><svg x="800" y="258" width="21" height="16"><rect width="21" height="16" fill="#d8d8d8"/><circle cx="1.50" cy="2.30" r="1.3" fill="#8a8a8a"/><circle cx="5.80" cy="2.30" r="1.3" fill="#8a8a8a"/><circle cx="10.10" cy="2.30" r="1.3" fill="#8a8a8a"/><circle cx="14.40" cy="2.30" r="1.3" fill="#8a8a8a"/><circle cx="18.70" cy="2.30" r="1.3" fill="#8a8a8a"/><circle cx="23.00" cy="2.30" r="1.3" fill="#8a8a8a"/><circle cx="3.65" cy="6.20" r="1.3" fill="#8a8a8a"/><circle cx="7.95" cy="6.20" r="1.3" fill="#8a8a8a"/><circle cx="12.25" cy="6.20" r="1.3" fill="#8a8a8a"/><circle cx="16.55" cy="6.20" r="1.3" fill="#8a8a8a"/><circle cx="20.85" cy="6.20" r="1.3" fill="#8a8a8a"/><circle cx="25.15" cy="6.20" r="1.3" fill="#8a8a8a"/><circle cx="1.50" cy="10.10" r="1.3" fill="#8a8a8a"/><circle cx="5.80" cy="10.10" r="1.3" fill="#8a8a8a"/><circle cx="10.10" cy="10.10" r="1.3" fill="#8a8a8a"/><circle cx="14.40" cy="10.10" r="1.3" fill="#8a8a8a"/><circle cx="18.70" cy="10.10" r="1.3" fill="#8a8a8a"/><circle cx="23.00" cy="10.10" r="1.3" fill="#8a8a8a"/><circle cx="3.65" cy="14.00" r="1.3" fill="#8a8a8a"/><circle cx="7.95" cy="14.00" r="1.3" fill="#8a8a8a"/><circle cx="12.25" cy="14.00" r="1.3" fill="#8a8a8a"/><circle cx="16.55" cy="14.00" r="1.3" fill="#8a8a8a"/><circle cx="20.85" cy="14.00" r="1.3" fill="#8a8a8a"/><circle cx="25.15" cy="14.00" r="1.3" fill="#8a8a8a"/><circle cx="1.50" cy="17.90" r="1.3" fill="#8a8a8a"/><circle cx="5.80" cy="17.90" r="1.3" fill="#8a8a8a"/><circle cx="10.10" cy="17.90" r="1.3" fill="#8a8a8a"/><circle cx="14.40" cy="17.90" r="1.3" fill="#8a8a8a"/><circle cx="18.70" cy="17.90" r="1.3" fill="#8a8a8a"/><circle cx="23.00" cy="17.90" r="1.3" fill="#8a8a8a"/></svg><rect x="800" y="254" width="21" height="4" fill="#c8c8c8"/><circle cx="800.5" cy="257" r="1.6" fill="#e8e8e8"/><circle cx="800.5" cy="264" r="1.6" fill="#e8e8e8"/><circle cx="800.5" cy="269" r="1.6" fill="#e8e8e8"/><circle cx="820.5" cy="264" r="1.6" fill="#e8e8e8"/><rect x="739" y="294" width="23" height="22" rx="1.5" fill="#1b1b1b"/><rect x="740" y="299" width="21" height="16" fill="#8e8e8e"/><rect x="740" y="295" width="21" height="4" fill="#8a2634"/><circle cx="760.5" cy="305" r="1.6" fill="#e8e8e8"/><rect x="837" y="286" width="23" height="22" rx="1.5" fill="#1b1b1b"/><svg x="838" y="291" width="21" height="16"><rect width="21" height="16" fill="#a8a8a8"/><circle cx="1.50" cy="2.30" r="1.65" fill="#000"/><circle cx="5.80" cy="2.30" r="1.65" fill="#000"/><circle cx="10.10" cy="2.30" r="1.65" fill="#000"/><circle cx="14.40" cy="2.30" r="1.65" fill="#000"/><circle cx="18.70" cy="2.30" r="1.65" fill="#000"/><circle cx="23.00" cy="2.30" r="1.65" fill="#000"/><circle cx="3.65" cy="6.20" r="1.65" fill="#000"/><circle cx="7.95" cy="6.20" r="1.65" fill="#000"/><circle cx="12.25" cy="6.20" r="1.65" fill="#000"/><circle cx="16.55" cy="6.20" r="1.65" fill="#000"/><circle cx="20.85" cy="6.20" r="1.65" fill="#000"/><circle cx="25.15" cy="6.20" r="1.65" fill="#000"/><circle cx="1.50" cy="10.10" r="1.65" fill="#000"/><circle cx="5.80" cy="10.10" r="1.65" fill="#000"/><circle cx="10.10" cy="10.10" r="1.65" fill="#000"/><circle cx="14.40" cy="10.10" r="1.65" fill="#000"/><circle cx="18.70" cy="10.10" r="1.65" fill="#000"/><circle cx="23.00" cy="10.10" r="1.65" fill="#000"/><circle cx="3.65" cy="14.00" r="1.65" fill="#000"/><circle cx="7.95" cy="14.00" r="1.65" fill="#000"/><circle cx="12.25" cy="14.00" r="1.65" fill="#000"/><circle cx="16.55" cy="14.00" r="1.65" fill="#000"/><circle cx="20.85" cy="14.00" r="1.65" fill="#000"/><circle cx="25.15" cy="14.00" r="1.65" fill="#000"/><circle cx="1.50" cy="17.90" r="1.65" fill="#000"/><circle cx="5.80" cy="17.90" r="1.65" fill="#000"/><circle cx="10.10" cy="17.90" r="1.65" fill="#000"/><circle cx="14.40" cy="17.90" r="1.65" fill="#000"/><circle cx="18.70" cy="17.90" r="1.65" fill="#000"/><circle cx="23.00" cy="17.90" r="1.65" fill="#000"/></svg><rect x="838" y="287" width="21" height="4" fill="#b0b0b0"/><circle cx="838.5" cy="293" r="1.6" fill="#e8e8e8"/><circle cx="838.5" cy="297" r="1.6" fill="#e8e8e8"/><circle cx="838.5" cy="302" r="1.6" fill="#e8e8e8"/><circle cx="858.5" cy="297" r="1.6" fill="#e8e8e8"/><rect x="739" y="339" width="23" height="22" rx="1.5" fill="#1b1b1b"/><svg x="740" y="344" width="21" height="16"><rect width="21" height="16" fill="#f4f4f4"/><circle cx="1.50" cy="2.30" r="1.65" fill="#000"/><circle cx="5.80" cy="2.30" r="1.65" fill="#000"/><circle cx="10.10" cy="2.30" r="1.65" fill="#000"/><circle cx="14.40" cy="2.30" r="1.65" fill="#000"/><circle cx="18.70" cy="2.30" r="1.65" fill="#000"/><circle cx="23.00" cy="2.30" r="1.65" fill="#000"/><circle cx="3.65" cy="6.20" r="1.65" fill="#000"/><circle cx="7.95" cy="6.20" r="1.65" fill="#000"/><circle cx="12.25" cy="6.20" r="1.65" fill="#000"/><circle cx="16.55" cy="6.20" r="1.65" fill="#000"/><circle cx="20.85" cy="6.20" r="1.65" fill="#000"/><circle cx="25.15" cy="6.20" r="1.65" fill="#000"/><circle cx="1.50" cy="10.10" r="1.65" fill="#000"/><circle cx="5.80" cy="10.10" r="1.65" fill="#000"/><circle cx="10.10" cy="10.10" r="1.65" fill="#000"/><circle cx="14.40" cy="10.10" r="1.65" fill="#000"/><circle cx="18.70" cy="10.10" r="1.65" fill="#000"/><circle cx="23.00" cy="10.10" r="1.65" fill="#000"/><circle cx="3.65" cy="14.00" r="1.65" fill="#000"/><circle cx="7.95" cy="14.00" r="1.65" fill="#000"/><circle cx="12.25" cy="14.00" r="1.65" fill="#000"/><circle cx="16.55" cy="14.00" r="1.65" fill="#000"/><circle cx="20.85" cy="14.00" r="1.65" fill="#000"/><circle cx="25.15" cy="14.00" r="1.65" fill="#000"/><circle cx="1.50" cy="17.90" r="1.65" fill="#000"/><circle cx="5.80" cy="17.90" r="1.65" fill="#000"/><circle cx="10.10" cy="17.90" r="1.65" fill="#000"/><circle cx="14.40" cy="17.90" r="1.65" fill="#000"/><circle cx="18.70" cy="17.90" r="1.65" fill="#000"/><circle cx="23.00" cy="17.90" r="1.65" fill="#000"/></svg><rect x="740" y="340" width="21" height="4" fill="#7aae72"/><circle cx="740.5" cy="350" r="1.6" fill="#e8e8e8"/><circle cx="760.5" cy="350" r="1.6" fill="#e8e8e8"/><rect x="785" y="339" width="23" height="22" rx="1.5" fill="#1b1b1b"/><svg x="786" y="344" width="21" height="16"><rect width="21" height="16" fill="#ececec"/><circle cx="1.50" cy="2.30" r="1.65" fill="#000"/><circle cx="5.80" cy="2.30" r="1.65" fill="#000"/><circle cx="10.10" cy="2.30" r="1.65" fill="#000"/><circle cx="14.40" cy="2.30" r="1.65" fill="#000"/><circle cx="18.70" cy="2.30" r="1.65" fill="#000"/><circle cx="23.00" cy="2.30" r="1.65" fill="#000"/><circle cx="3.65" cy="6.20" r="1.65" fill="#000"/><circle cx="7.95" cy="6.20" r="1.65" fill="#000"/><circle cx="12.25" cy="6.20" r="1.65" fill="#000"/><circle cx="16.55" cy="6.20" r="1.65" fill="#000"/><circle cx="20.85" cy="6.20" r="1.65" fill="#000"/><circle cx="25.15" cy="6.20" r="1.65" fill="#000"/><circle cx="1.50" cy="10.10" r="1.65" fill="#000"/><circle cx="5.80" cy="10.10" r="1.65" fill="#000"/><circle cx="10.10" cy="10.10" r="1.65" fill="#000"/><circle cx="14.40" cy="10.10" r="1.65" fill="#000"/><circle cx="18.70" cy="10.10" r="1.65" fill="#000"/><circle cx="23.00" cy="10.10" r="1.65" fill="#000"/><circle cx="3.65" cy="14.00" r="1.65" fill="#000"/><circle cx="7.95" cy="14.00" r="1.65" fill="#000"/><circle cx="12.25" cy="14.00" r="1.65" fill="#000"/><circle cx="16.55" cy="14.00" r="1.65" fill="#000"/><circle cx="20.85" cy="14.00" r="1.65" fill="#000"/><circle cx="25.15" cy="14.00" r="1.65" fill="#000"/><circle cx="1.50" cy="17.90" r="1.65" fill="#000"/><circle cx="5.80" cy="17.90" r="1.65" fill="#000"/><circle cx="10.10" cy="17.90" r="1.65" fill="#000"/><circle cx="14.40" cy="17.90" r="1.65" fill="#000"/><circle cx="18.70" cy="17.90" r="1.65" fill="#000"/><circle cx="23.00" cy="17.90" r="1.65" fill="#000"/></svg><rect x="786" y="340" width="21" height="4" fill="#a59e7c"/><circle cx="786.5" cy="350" r="1.6" fill="#e8e8e8"/><circle cx="806.5" cy="350" r="1.6" fill="#e8e8e8"/><rect x="1034" y="294" width="23" height="22" rx="1.5" fill="#1b1b1b"/><svg x="1035" y="299" width="21" height="16"><rect width="21" height="16" fill="#8c8cf8"/><circle cx="1.50" cy="2.30" r="1.4" fill="#f4f4ff"/><circle cx="5.80" cy="2.30" r="1.4" fill="#f4f4ff"/><circle cx="10.10" cy="2.30" r="1.4" fill="#f4f4ff"/><circle cx="14.40" cy="2.30" r="1.4" fill="#f4f4ff"/><circle cx="18.70" cy="2.30" r="1.4" fill="#f4f4ff"/><circle cx="23.00" cy="2.30" r="1.4" fill="#f4f4ff"/><circle cx="3.65" cy="6.20" r="1.4" fill="#f4f4ff"/><circle cx="7.95" cy="6.20" r="1.4" fill="#f4f4ff"/><circle cx="12.25" cy="6.20" r="1.4" fill="#f4f4ff"/><circle cx="16.55" cy="6.20" r="1.4" fill="#f4f4ff"/><circle cx="20.85" cy="6.20" r="1.4" fill="#f4f4ff"/><circle cx="25.15" cy="6.20" r="1.4" fill="#f4f4ff"/><circle cx="1.50" cy="10.10" r="1.4" fill="#f4f4ff"/><circle cx="5.80" cy="10.10" r="1.4" fill="#f4f4ff"/><circle cx="10.10" cy="10.10" r="1.4" fill="#f4f4ff"/><circle cx="14.40" cy="10.10" r="1.4" fill="#f4f4ff"/><circle cx="18.70" cy="10.10" r="1.4" fill="#f4f4ff"/><circle cx="23.00" cy="10.10" r="1.4" fill="#f4f4ff"/><circle cx="3.65" cy="14.00" r="1.4" fill="#f4f4ff"/><circle cx="7.95" cy="14.00" r="1.4" fill="#f4f4ff"/><circle cx="12.25" cy="14.00" r="1.4" fill="#f4f4ff"/><circle cx="16.55" cy="14.00" r="1.4" fill="#f4f4ff"/><circle cx="20.85" cy="14.00" r="1.4" fill="#f4f4ff"/><circle cx="25.15" cy="14.00" r="1.4" fill="#f4f4ff"/><circle cx="1.50" cy="17.90" r="1.4" fill="#f4f4ff"/><circle cx="5.80" cy="17.90" r="1.4" fill="#f4f4ff"/><circle cx="10.10" cy="17.90" r="1.4" fill="#f4f4ff"/><circle cx="14.40" cy="17.90" r="1.4" fill="#f4f4ff"/><circle cx="18.70" cy="17.90" r="1.4" fill="#f4f4ff"/><circle cx="23.00" cy="17.90" r="1.4" fill="#f4f4ff"/></svg><rect x="1035" y="295" width="21" height="4" fill="#6f6fe8"/><circle cx="1035.5" cy="305" r="1.6" fill="#e8e8e8"/><circle cx="1055.5" cy="305" r="1.6" fill="#e8e8e8"/><rect x="1094" y="294" width="23" height="22" rx="1.5" fill="#1b1b1b"/><svg x="1095" y="299" width="21" height="16"><rect width="21" height="16" fill="#9a9af8"/><circle cx="1.50" cy="2.30" r="1.4" fill="#f4f4ff"/><circle cx="5.80" cy="2.30" r="1.4" fill="#f4f4ff"/><circle cx="10.10" cy="2.30" r="1.4" fill="#f4f4ff"/><circle cx="14.40" cy="2.30" r="1.4" fill="#f4f4ff"/><circle cx="18.70" cy="2.30" r="1.4" fill="#f4f4ff"/><circle cx="23.00" cy="2.30" r="1.4" fill="#f4f4ff"/><circle cx="3.65" cy="6.20" r="1.4" fill="#f4f4ff"/><circle cx="7.95" cy="6.20" r="1.4" fill="#f4f4ff"/><circle cx="12.25" cy="6.20" r="1.4" fill="#f4f4ff"/><circle cx="16.55" cy="6.20" r="1.4" fill="#f4f4ff"/><circle cx="20.85" cy="6.20" r="1.4" fill="#f4f4ff"/><circle cx="25.15" cy="6.20" r="1.4" fill="#f4f4ff"/><circle cx="1.50" cy="10.10" r="1.4" fill="#f4f4ff"/><circle cx="5.80" cy="10.10" r="1.4" fill="#f4f4ff"/><circle cx="10.10" cy="10.10" r="1.4" fill="#f4f4ff"/><circle cx="14.40" cy="10.10" r="1.4" fill="#f4f4ff"/><circle cx="18.70" cy="10.10" r="1.4" fill="#f4f4ff"/><circle cx="23.00" cy="10.10" r="1.4" fill="#f4f4ff"/><circle cx="3.65" cy="14.00" r="1.4" fill="#f4f4ff"/><circle cx="7.95" cy="14.00" r="1.4" fill="#f4f4ff"/><circle cx="12.25" cy="14.00" r="1.4" fill="#f4f4ff"/><circle cx="16.55" cy="14.00" r="1.4" fill="#f4f4ff"/><circle cx="20.85" cy="14.00" r="1.4" fill="#f4f4ff"/><circle cx="25.15" cy="14.00" r="1.4" fill="#f4f4ff"/><circle cx="1.50" cy="17.90" r="1.4" fill="#f4f4ff"/><circle cx="5.80" cy="17.90" r="1.4" fill="#f4f4ff"/><circle cx="10.10" cy="17.90" r="1.4" fill="#f4f4ff"/><circle cx="14.40" cy="17.90" r="1.4" fill="#f4f4ff"/><circle cx="18.70" cy="17.90" r="1.4" fill="#f4f4ff"/><circle cx="23.00" cy="17.90" r="1.4" fill="#f4f4ff"/></svg><rect x="1095" y="295" width="21" height="4" fill="#8f8aa0"/><circle cx="1095.5" cy="305" r="1.6" fill="#e8e8e8"/><rect x="1094" y="340" width="23" height="22" rx="1.5" fill="#1b1b1b"/><svg x="1095" y="345" width="21" height="16"><rect width="21" height="16" fill="#e8e8e8"/><circle cx="1.50" cy="2.30" r="1.65" fill="#000"/><circle cx="5.80" cy="2.30" r="1.65" fill="#000"/><circle cx="10.10" cy="2.30" r="1.65" fill="#000"/><circle cx="14.40" cy="2.30" r="1.65" fill="#000"/><circle cx="18.70" cy="2.30" r="1.65" fill="#000"/><circle cx="23.00" cy="2.30" r="1.65" fill="#000"/><circle cx="3.65" cy="6.20" r="1.65" fill="#000"/><circle cx="7.95" cy="6.20" r="1.65" fill="#000"/><circle cx="12.25" cy="6.20" r="1.65" fill="#000"/><circle cx="16.55" cy="6.20" r="1.65" fill="#000"/><circle cx="20.85" cy="6.20" r="1.65" fill="#000"/><circle cx="25.15" cy="6.20" r="1.65" fill="#000"/><circle cx="1.50" cy="10.10" r="1.65" fill="#000"/><circle cx="5.80" cy="10.10" r="1.65" fill="#000"/><circle cx="10.10" cy="10.10" r="1.65" fill="#000"/><circle cx="14.40" cy="10.10" r="1.65" fill="#000"/><circle cx="18.70" cy="10.10" r="1.65" fill="#000"/><circle cx="23.00" cy="10.10" r="1.65" fill="#000"/><circle cx="3.65" cy="14.00" r="1.65" fill="#000"/><circle cx="7.95" cy="14.00" r="1.65" fill="#000"/><circle cx="12.25" cy="14.00" r="1.65" fill="#000"/><circle cx="16.55" cy="14.00" r="1.65" fill="#000"/><circle cx="20.85" cy="14.00" r="1.65" fill="#000"/><circle cx="25.15" cy="14.00" r="1.65" fill="#000"/><circle cx="1.50" cy="17.90" r="1.65" fill="#000"/><circle cx="5.80" cy="17.90" r="1.65" fill="#000"/><circle cx="10.10" cy="17.90" r="1.65" fill="#000"/><circle cx="14.40" cy="17.90" r="1.65" fill="#000"/><circle cx="18.70" cy="17.90" r="1.65" fill="#000"/><circle cx="23.00" cy="17.90" r="1.65" fill="#000"/></svg><rect x="1095" y="341" width="21" height="4" fill="#8f8aa0"/><circle cx="1095.5" cy="350" r="1.6" fill="#e8e8e8"/></svg><div class="a" style="left:181px;top:381px;width:517px;height:12px;background:#1c1c1c;"></div><div class="a" style="left:193px;top:381px;width:467px;height:12px;background:#111111;"></div><svg class="a" style="left:184px;top:383px" width="9" height="9" viewBox="0 0 9 9"><path d="M4.5 0.5L8.5 2.3V6.7L4.5 8.5L0.5 6.7V2.3Z" fill="#e0e0e0"/><path d="M0.5 2.3L4.5 4.1L8.5 2.3M4.5 4.1V8.5" stroke="#8a8a8a" stroke-width="0.6" fill="none"/></svg><div class="a" style="left:661px;top:381px;width:11px;height:12px;background:#1a1a1a;"></div><div class="a" style="left:673px;top:381px;width:11px;height:12px;background:#1a1a1a;"></div><div class="a" style="left:686px;top:381px;width:12px;height:12px;background:#1a1a1a;"></div><svg class="a" style="left:662px;top:383px" width="9" height="8" viewBox="0 0 9 8"><path d="M0 4H3M3 1.5H4V6.5H3ZM4 2H9V6H4Z" fill="#d4d4d4" stroke="#d4d4d4" stroke-width="0.6"/><path d="M4.5 3.3H8.5M4.5 4.7H8.5" stroke="#888" stroke-width="0.6"/></svg><svg class="a" style="left:675px;top:383px" width="8" height="8" viewBox="0 0 8 8"><path d="M2.5 0.8H7.2V5.2H5.5M0.8 2.8H5.5V7.2H0.8Z" fill="none" stroke="#d4d4d4" stroke-width="1"/></svg><svg class="a" style="left:689px;top:384px" width="6" height="6" viewBox="0 0 6 6"><path d="M0.5 0.5L5.5 5.5M5.5 0.5L0.5 5.5" stroke="#e0e0e0" stroke-width="1.1"/></svg><div class="t" style="left:326.5px;top:383.5px;width:200px;text-align:center;font-size:7.8px;color:#d6d6d6;">3D View</div><div class="a" style="left:181px;top:393px;width:517px;height:20px;background:#3c3c3c;"></div><div class="a" style="left:181px;top:412px;width:517px;height:1px;background:#2c2c2c;"></div><div class="t" style="left:185px;top:400px;font-size:8px;color:#a8a8a8;">Geometry</div><svg class="a" style="left:224px;top:402px" width="5" height="4" viewBox="0 0 5 4"><path d="M0 0H5L2.5 4Z" fill="#d0d0d0"/></svg><div class="t" style="left:234px;top:400px;font-size:8px;color:#a8a8a8;">Materials</div><svg class="a" style="left:270px;top:402px" width="5" height="4" viewBox="0 0 5 4"><path d="M0 0H5L2.5 4Z" fill="#d0d0d0"/></svg><div class="t" style="left:280px;top:400px;font-size:8px;color:#a8a8a8;">Scene</div><svg class="a" style="left:306px;top:402px" width="5" height="4" viewBox="0 0 5 4"><path d="M0 0H5L2.5 4Z" fill="#d0d0d0"/></svg><div class="t" style="left:316px;top:400px;font-size:8px;color:#a8a8a8;">View</div><svg class="a" style="left:336px;top:402px" width="5" height="4" viewBox="0 0 5 4"><path d="M0 0H5L2.5 4Z" fill="#d0d0d0"/></svg><div class="t" style="left:346px;top:400px;font-size:8px;color:#a8a8a8;">Display</div><svg class="a" style="left:376px;top:402px" width="5" height="4" viewBox="0 0 5 4"><path d="M0 0H5L2.5 4Z" fill="#d0d0d0"/></svg><div class="a" style="left:181px;top:413px;width:17px;height:293px;background:#1c1c1c;"></div><svg class="a" style="left:186px;top:414px" width="7" height="7" viewBox="0 0 7 7"><path d="M0.5 1.5V6.5H5.5V4.5M3 4L6.5 0.5M4 0.5H6.5V3" stroke="#d0d0d0" stroke-width="0.9" fill="none"/></svg><svg class="a" style="left:183px;top:427px" width="11" height="10" viewBox="0 0 11 10"><circle cx="3" cy="2.5" r="2.2" fill="none" stroke="#e8e8e8" stroke-width="1.2"/><circle cx="7.5" cy="2.5" r="2.2" fill="none" stroke="#e8e8e8" stroke-width="1.2"/><rect x="1.5" y="5" width="7" height="4" fill="#e8e8e8"/><path d="M8.5 6L10.5 5V9L8.5 8Z" fill="#e8e8e8"/></svg><div class="a" style="left:183px;top:443px;width:13px;height:17px;background:#9a9a9a;border-radius:2px"></div><svg class="a" style="left:185px;top:446px" width="9" height="10" viewBox="0 0 9 10"><circle cx="3" cy="3" r="1.8" fill="#e8e860"/><path d="M4 4L8 9" stroke="#d8d8a0" stroke-width="0.8"/></svg><svg class="a" style="left:198px;top:413px" width="500" height="293" viewBox="198 413 500 293"><defs>
<filter id="grass" x="0" y="0" width="100%" height="100%" filterUnits="objectBoundingBox" color-interpolation-filters="sRGB">
<feTurbulence type="fractalNoise" baseFrequency="0.035" numOctaves="3" seed="5" result="lo0"/>
<feColorMatrix in="lo0" type="matrix" values="1 0 0 0 0  1 0 0 0 0  0 1 0 0 0  0 0 0 0 1" result="lo"/>
<feTurbulence type="fractalNoise" baseFrequency="0.14 0.22" numOctaves="3" seed="11" result="hi0"/>
<feColorMatrix in="hi0" type="matrix" values="1 0 0 0 0  1 0 0 0 0  1 0 0 0 0  0 0 0 0 1" result="hi"/>
<feComposite in="lo" in2="hi" operator="arithmetic" k1="0" k2="0.5" k3="0.65" k4="-0.08" result="mix"/>
<feColorMatrix in="mix" type="matrix" values="0.44 0 0 0 0.02  0.43 0 0 0 0.01  0.28 0 0 0 0.01  0 0 0 0 1"/>
</filter>
<linearGradient id="cloth" x1="0" x2="1" y1="0" y2="0">
<stop offset="0" stop-color="#6a7074"/><stop offset="0.035" stop-color="#8f9598"/><stop offset="0.07" stop-color="#979b9e"/><stop offset="0.3" stop-color="#9b9fa2"/><stop offset="0.8" stop-color="#a2a6a8"/><stop offset="0.97" stop-color="#a7aaac"/><stop offset="1" stop-color="#bcbfc0"/>
</linearGradient>
<filter id="cl" x="0" y="0" width="100%" height="100%"><feTurbulence type="fractalNoise" baseFrequency="0.02 0.04" numOctaves="2" seed="2"/><feColorMatrix type="matrix" values="0 0 0 0 0.5  0 0 0 0 0.52  0 0 0 0 0.54  0 0 0 -0.9 0.55"/></filter>
</defs><rect x="198" y="413" width="500" height="293" fill="#4a4430"/><rect x="198" y="413" width="500" height="293" filter="url(#grass)"/><g fill="none" stroke-linecap="round"><path d="M612 480 C622 486 630 492 642 497" stroke="#c8b890" stroke-width="1.6" opacity="0.8"/><path d="M640 540 C650 520 665 505 690 485" stroke="#a89870" stroke-width="1" opacity="0.45"/><path d="M620 560 C635 600 650 640 668 690" stroke="#9a8a68" stroke-width="1" opacity="0.4"/><path d="M205 440 C215 470 222 500 228 520" stroke="#a89a70" stroke-width="1" opacity="0.4"/><path d="M240 425 C238 440 232 460 222 470" stroke="#b0a078" stroke-width="1.2" opacity="0.4"/></g><ellipse cx="268" cy="572.5" rx="4" ry="3" fill="#d6c39e" opacity="0.85"/><ellipse cx="270" cy="609.5" rx="7" ry="5" fill="#e0d2ac"/><path d="M265 607 Q270 605 274 608" stroke="#5a5040" stroke-width="1" fill="none"/><line x1="198" y1="424.2" x2="698" y2="424.2" stroke="#949490" stroke-width="1"/><line x1="198" y1="450.8" x2="698" y2="450.8" stroke="#949490" stroke-width="1"/><line x1="198" y1="478.7" x2="698" y2="478.7" stroke="#949490" stroke-width="1"/><line x1="198" y1="506.5" x2="698" y2="506.5" stroke="#949490" stroke-width="1"/><line x1="198" y1="533.8" x2="698" y2="533.8" stroke="#949490" stroke-width="1"/><line x1="198" y1="562" x2="698" y2="562" stroke="#949490" stroke-width="1"/><line x1="198" y1="590.5" x2="698" y2="590.5" stroke="#949490" stroke-width="1"/><line x1="198" y1="619.3" x2="698" y2="619.3" stroke="#949490" stroke-width="1"/><line x1="198" y1="648" x2="698" y2="648" stroke="#949490" stroke-width="1"/><line x1="198" y1="676.5" x2="698" y2="676.5" stroke="#949490" stroke-width="1"/><line x1="198" y1="413" x2="190" y2="706" stroke="#949490" stroke-width="1"/><line x1="225.6" y1="413" x2="219" y2="706" stroke="#949490" stroke-width="1"/><line x1="253.2" y1="413" x2="247.5" y2="706" stroke="#949490" stroke-width="1"/><line x1="280.8" y1="413" x2="276.5" y2="706" stroke="#949490" stroke-width="1"/><line x1="614" y1="413" x2="619.5" y2="706" stroke="#949490" stroke-width="1"/><line x1="641.8" y1="413" x2="648.5" y2="706" stroke="#949490" stroke-width="1"/><line x1="669.7" y1="413" x2="676.8" y2="706" stroke="#949490" stroke-width="1"/><line x1="697.3" y1="413" x2="705" y2="706" stroke="#949490" stroke-width="1"/><path d="M296 413 L601 413 L607 706 L290 706 Z" fill="url(#cloth)"/><path d="M296 413 L601 413 L607 706 L290 706 Z" fill="#fff" filter="url(#cl)" opacity="0.35"/><defs><radialGradient id="dimp" cx="0.5" cy="0.6" r="0.5"><stop offset="0" stop-color="#000" stop-opacity="0.045"/><stop offset="0.6" stop-color="#000" stop-opacity="0.025"/><stop offset="1" stop-color="#000" stop-opacity="0"/></radialGradient><clipPath id="clc"><path d="M296 413 L601 413 L607 706 L290 706 Z"/></clipPath></defs><g clip-path="url(#clc)"><ellipse cx="225.3" cy="376.2" rx="30" ry="24" fill="url(#dimp)"/><ellipse cx="287.5" cy="376.2" rx="30" ry="24" fill="url(#dimp)"/><ellipse cx="349.7" cy="376.2" rx="30" ry="24" fill="url(#dimp)"/><ellipse cx="411.9" cy="376.2" rx="30" ry="24" fill="url(#dimp)"/><ellipse cx="474.1" cy="376.2" rx="30" ry="24" fill="url(#dimp)"/><ellipse cx="536.3" cy="376.2" rx="30" ry="24" fill="url(#dimp)"/><ellipse cx="598.5" cy="376.2" rx="30" ry="24" fill="url(#dimp)"/><ellipse cx="660.7" cy="376.2" rx="30" ry="24" fill="url(#dimp)"/><ellipse cx="722.9" cy="376.2" rx="30" ry="24" fill="url(#dimp)"/><ellipse cx="200.3" cy="434.8" rx="30" ry="24" fill="url(#dimp)"/><ellipse cx="262.5" cy="434.8" rx="30" ry="24" fill="url(#dimp)"/><ellipse cx="324.7" cy="434.8" rx="30" ry="24" fill="url(#dimp)"/><ellipse cx="386.9" cy="434.8" rx="30" ry="24" fill="url(#dimp)"/><ellipse cx="449.1" cy="434.8" rx="30" ry="24" fill="url(#dimp)"/><ellipse cx="511.3" cy="434.8" rx="30" ry="24" fill="url(#dimp)"/><ellipse cx="573.5" cy="434.8" rx="30" ry="24" fill="url(#dimp)"/><ellipse cx="635.7" cy="434.8" rx="30" ry="24" fill="url(#dimp)"/><ellipse cx="697.9" cy="434.8" rx="30" ry="24" fill="url(#dimp)"/><ellipse cx="237.6" cy="493.4" rx="30" ry="24" fill="url(#dimp)"/><ellipse cx="299.8" cy="493.4" rx="30" ry="24" fill="url(#dimp)"/><ellipse cx="362.0" cy="493.4" rx="30" ry="24" fill="url(#dimp)"/><ellipse cx="424.2" cy="493.4" rx="30" ry="24" fill="url(#dimp)"/><ellipse cx="486.4" cy="493.4" rx="30" ry="24" fill="url(#dimp)"/><ellipse cx="548.6" cy="493.4" rx="30" ry="24" fill="url(#dimp)"/><ellipse cx="610.8" cy="493.4" rx="30" ry="24" fill="url(#dimp)"/><ellipse cx="673.0" cy="493.4" rx="30" ry="24" fill="url(#dimp)"/><ellipse cx="735.2" cy="493.4" rx="30" ry="24" fill="url(#dimp)"/><ellipse cx="212.6" cy="552.0" rx="30" ry="24" fill="url(#dimp)"/><ellipse cx="274.8" cy="552.0" rx="30" ry="24" fill="url(#dimp)"/><ellipse cx="337.0" cy="552.0" rx="30" ry="24" fill="url(#dimp)"/><ellipse cx="399.2" cy="552.0" rx="30" ry="24" fill="url(#dimp)"/><ellipse cx="461.4" cy="552.0" rx="30" ry="24" fill="url(#dimp)"/><ellipse cx="523.6" cy="552.0" rx="30" ry="24" fill="url(#dimp)"/><ellipse cx="585.8" cy="552.0" rx="30" ry="24" fill="url(#dimp)"/><ellipse cx="648.0" cy="552.0" rx="30" ry="24" fill="url(#dimp)"/><ellipse cx="710.2" cy="552.0" rx="30" ry="24" fill="url(#dimp)"/><ellipse cx="249.8" cy="610.6" rx="30" ry="24" fill="url(#dimp)"/><ellipse cx="312.0" cy="610.6" rx="30" ry="24" fill="url(#dimp)"/><ellipse cx="374.2" cy="610.6" rx="30" ry="24" fill="url(#dimp)"/><ellipse cx="436.4" cy="610.6" rx="30" ry="24" fill="url(#dimp)"/><ellipse cx="498.6" cy="610.6" rx="30" ry="24" fill="url(#dimp)"/><ellipse cx="560.8" cy="610.6" rx="30" ry="24" fill="url(#dimp)"/><ellipse cx="623.0" cy="610.6" rx="30" ry="24" fill="url(#dimp)"/><ellipse cx="685.2" cy="610.6" rx="30" ry="24" fill="url(#dimp)"/><ellipse cx="747.4" cy="610.6" rx="30" ry="24" fill="url(#dimp)"/><ellipse cx="224.9" cy="669.2" rx="30" ry="24" fill="url(#dimp)"/><ellipse cx="287.1" cy="669.2" rx="30" ry="24" fill="url(#dimp)"/><ellipse cx="349.3" cy="669.2" rx="30" ry="24" fill="url(#dimp)"/><ellipse cx="411.5" cy="669.2" rx="30" ry="24" fill="url(#dimp)"/><ellipse cx="473.7" cy="669.2" rx="30" ry="24" fill="url(#dimp)"/><ellipse cx="535.9" cy="669.2" rx="30" ry="24" fill="url(#dimp)"/><ellipse cx="598.1" cy="669.2" rx="30" ry="24" fill="url(#dimp)"/><ellipse cx="660.3" cy="669.2" rx="30" ry="24" fill="url(#dimp)"/><ellipse cx="722.5" cy="669.2" rx="30" ry="24" fill="url(#dimp)"/><ellipse cx="262.1" cy="727.8" rx="30" ry="24" fill="url(#dimp)"/><ellipse cx="324.3" cy="727.8" rx="30" ry="24" fill="url(#dimp)"/><ellipse cx="386.5" cy="727.8" rx="30" ry="24" fill="url(#dimp)"/><ellipse cx="448.7" cy="727.8" rx="30" ry="24" fill="url(#dimp)"/><ellipse cx="510.9" cy="727.8" rx="30" ry="24" fill="url(#dimp)"/><ellipse cx="573.1" cy="727.8" rx="30" ry="24" fill="url(#dimp)"/><ellipse cx="635.3" cy="727.8" rx="30" ry="24" fill="url(#dimp)"/><ellipse cx="697.5" cy="727.8" rx="30" ry="24" fill="url(#dimp)"/><ellipse cx="759.7" cy="727.8" rx="30" ry="24" fill="url(#dimp)"/><ellipse cx="237.1" cy="786.4" rx="30" ry="24" fill="url(#dimp)"/><ellipse cx="299.3" cy="786.4" rx="30" ry="24" fill="url(#dimp)"/><ellipse cx="361.5" cy="786.4" rx="30" ry="24" fill="url(#dimp)"/><ellipse cx="423.7" cy="786.4" rx="30" ry="24" fill="url(#dimp)"/><ellipse cx="485.9" cy="786.4" rx="30" ry="24" fill="url(#dimp)"/><ellipse cx="548.1" cy="786.4" rx="30" ry="24" fill="url(#dimp)"/><ellipse cx="610.3" cy="786.4" rx="30" ry="24" fill="url(#dimp)"/><ellipse cx="672.5" cy="786.4" rx="30" ry="24" fill="url(#dimp)"/><ellipse cx="734.7" cy="786.4" rx="30" ry="24" fill="url(#dimp)"/></g></svg><div class="a" style="left:181px;top:705px;width:517px;height:1px;background:#262626;"></div><div class="a" style="left:181px;top:706px;width:517px;height:21px;background:#333333;"></div><svg class="a" style="left:184px;top:712px" width="10" height="9" viewBox="0 0 10 9"><g fill="#d8d8d8"><rect x="0" y="0" width="2" height="2"/><rect x="4" y="2.5" width="2" height="1.5"/><rect x="7" y="2.5" width="2" height="1.5"/><rect x="7" y="5.5" width="2" height="1.5"/><rect x="4" y="5.5" width="2" height="1.5"/><rect x="4" y="8" width="2" height="1"/><rect x="7" y="8" width="2" height="1"/></g><path d="M1 2V8.5H4M1 3.2H4M1 6.2H4" stroke="#d8d8d8" stroke-width="0.8" fill="none"/></svg><svg class="a" style="left:201px;top:711px" width="10" height="10" viewBox="0 0 10 10"><circle cx="3" cy="3" r="2.2" fill="none" stroke="#d8d8d8" stroke-width="1.2"/><circle cx="7" cy="7" r="2.2" fill="none" stroke="#d8d8d8" stroke-width="1.2"/></svg><div class="a" style="left:702px;top:381px;width:516px;height:12px;background:#1c1c1c;"></div><div class="a" style="left:714px;top:381px;width:466px;height:12px;background:#111111;"></div><svg class="a" style="left:704px;top:383px" width="9" height="9" viewBox="0 0 9 9"><circle cx="2.8" cy="6" r="2.5" fill="#c8c8c8"/><path d="M2.8 0.5V4M6 1L8.5 4M6 4L8.5 1" stroke="#c8c8c8" stroke-width="1"/><circle cx="6.5" cy="6.5" r="1.8" fill="#c8c8c8"/></svg><div class="a" style="left:1181px;top:381px;width:11px;height:12px;background:#1a1a1a;"></div><div class="a" style="left:1193px;top:381px;width:11px;height:12px;background:#1a1a1a;"></div><div class="a" style="left:1206px;top:381px;width:12px;height:12px;background:#1a1a1a;"></div><svg class="a" style="left:1182px;top:383px" width="9" height="8" viewBox="0 0 9 8"><path d="M0 4H3M3 1.5H4V6.5H3ZM4 2H9V6H4Z" fill="#d4d4d4" stroke="#d4d4d4" stroke-width="0.6"/><path d="M4.5 3.3H8.5M4.5 4.7H8.5" stroke="#888" stroke-width="0.6"/></svg><svg class="a" style="left:1195px;top:383px" width="8" height="8" viewBox="0 0 8 8"><path d="M2.5 0.8H7.2V5.2H5.5M0.8 2.8H5.5V7.2H0.8Z" fill="none" stroke="#d4d4d4" stroke-width="1"/></svg><svg class="a" style="left:1209px;top:384px" width="6" height="6" viewBox="0 0 6 6"><path d="M0.5 0.5L5.5 5.5M5.5 0.5L0.5 5.5" stroke="#e0e0e0" stroke-width="1.1"/></svg><div class="t" style="left:847.0px;top:383.5px;width:200px;text-align:center;font-size:7.8px;color:#d6d6d6;">Height</div><div class="a" style="left:702px;top:393px;width:516px;height:20px;background:#3c3c3c;"></div><div class="a" style="left:702px;top:412px;width:516px;height:1px;background:#2c2c2c;"></div><svg class="a" style="left:705px;top:399px" width="10" height="10" viewBox="0 0 10 10"><rect x="0.5" y="0.5" width="9" height="9" fill="#d8d8d8"/><path d="M3 2V8M7 2V8" stroke="#6a6a6a" stroke-width="1.2"/></svg><svg class="a" style="left:723px;top:398px" width="10" height="10" viewBox="0 0 10 10"><rect x="0.5" y="1.5" width="8" height="8" fill="#d0d0d0"/><path d="M2 4H7M2 6H6" stroke="#7a7a7a" stroke-width="0.8"/><path d="M5 5L9.5 0.5" stroke="#e8e8e8" stroke-width="1"/></svg><svg class="a" style="left:741px;top:399px" width="9" height="9" viewBox="0 0 9 9"><g fill="#e0e0e0"><circle cx="2" cy="4.5" r="1.7"/><circle cx="5.5" cy="1.5" r="1.4"/><circle cx="7.3" cy="4.6" r="1.4"/><circle cx="5.5" cy="7.6" r="1.4"/></g><path d="M2 4.5L5.5 1.5M2 4.5L7.3 4.6M2 4.5L5.5 7.6" stroke="#e0e0e0" stroke-width="0.8"/></svg><svg class="a" style="left:753px;top:402px" width="5" height="4" viewBox="0 0 5 4"><path d="M0 0H5L2.5 4Z" fill="#d0d0d0"/></svg><svg class="a" style="left:762px;top:398px" width="11" height="10" viewBox="0 0 11 10"><rect x="0.5" y="2" width="10" height="7.5" fill="#d0d0d0"/><rect x="3" y="0.5" width="4" height="2" fill="#d0d0d0"/><circle cx="5.5" cy="5.7" r="2.2" fill="#555"/></svg><div class="t" style="left:782px;top:400px;font-size:8px;color:#5a5a5a;">UV</div><svg class="a" style="left:796px;top:402px" width="5" height="4" viewBox="0 0 5 4"><path d="M0 0H5L2.5 4Z" fill="#4e4e4e"/></svg><div class="a" style="left:702px;top:413px;width:516px;height:292px;background:#282828;"></div><div class="a" style="left:814px;top:414px;width:291px;height:291px;background:#0c0c0c;"></div><svg class="a" style="left:815px;top:415px" width="289" height="289" viewBox="0 0 289 289"><defs><radialGradient id="hole"><stop offset="0" stop-color="#000"/><stop offset="0.42" stop-color="#000"/><stop offset="0.56" stop-color="#1c1c1c"/><stop offset="0.72" stop-color="#585858" stop-opacity="0.9"/><stop offset="0.87" stop-color="#8a8a8a" stop-opacity="0.5"/><stop offset="1" stop-color="#a0a0a0" stop-opacity="0"/></radialGradient>
<radialGradient id="bgv" cx="0.5" cy="0.5" r="0.7"><stop offset="0" stop-color="#c4c4c4"/><stop offset="1" stop-color="#b4b4b4"/></radialGradient>
<filter id="sb" x="-10%" y="-10%" width="120%" height="120%"><feGaussianBlur stdDeviation="0.9"/></filter></defs><rect width="289" height="289" fill="url(#bgv)"/><circle cx="-5.1" cy="-28.4" r="27" fill="url(#hole)"/><circle cx="52.7" cy="-28.4" r="27" fill="url(#hole)"/><circle cx="110.5" cy="-28.4" r="27" fill="url(#hole)"/><circle cx="168.3" cy="-28.4" r="27" fill="url(#hole)"/><circle cx="226.1" cy="-28.4" r="27" fill="url(#hole)"/><circle cx="283.9" cy="-28.4" r="27" fill="url(#hole)"/><circle cx="-28.3" cy="29.4" r="27" fill="url(#hole)"/><circle cx="29.5" cy="29.4" r="27" fill="url(#hole)"/><circle cx="87.3" cy="29.4" r="27" fill="url(#hole)"/><circle cx="145.1" cy="29.4" r="27" fill="url(#hole)"/><circle cx="202.9" cy="29.4" r="27" fill="url(#hole)"/><circle cx="260.7" cy="29.4" r="27" fill="url(#hole)"/><circle cx="318.5" cy="29.4" r="27" fill="url(#hole)"/><circle cx="6.3" cy="87.2" r="27" fill="url(#hole)"/><circle cx="64.1" cy="87.2" r="27" fill="url(#hole)"/><circle cx="121.9" cy="87.2" r="27" fill="url(#hole)"/><circle cx="179.7" cy="87.2" r="27" fill="url(#hole)"/><circle cx="237.5" cy="87.2" r="27" fill="url(#hole)"/><circle cx="295.3" cy="87.2" r="27" fill="url(#hole)"/><circle cx="-16.9" cy="145.0" r="27" fill="url(#hole)"/><circle cx="40.9" cy="145.0" r="27" fill="url(#hole)"/><circle cx="98.7" cy="145.0" r="27" fill="url(#hole)"/><circle cx="156.5" cy="145.0" r="27" fill="url(#hole)"/><circle cx="214.3" cy="145.0" r="27" fill="url(#hole)"/><circle cx="272.1" cy="145.0" r="27" fill="url(#hole)"/><circle cx="17.7" cy="202.8" r="27" fill="url(#hole)"/><circle cx="75.5" cy="202.8" r="27" fill="url(#hole)"/><circle cx="133.3" cy="202.8" r="27" fill="url(#hole)"/><circle cx="191.1" cy="202.8" r="27" fill="url(#hole)"/><circle cx="248.9" cy="202.8" r="27" fill="url(#hole)"/><circle cx="306.7" cy="202.8" r="27" fill="url(#hole)"/><circle cx="-5.5" cy="260.6" r="27" fill="url(#hole)"/><circle cx="52.3" cy="260.6" r="27" fill="url(#hole)"/><circle cx="110.1" cy="260.6" r="27" fill="url(#hole)"/><circle cx="167.9" cy="260.6" r="27" fill="url(#hole)"/><circle cx="225.7" cy="260.6" r="27" fill="url(#hole)"/><circle cx="283.5" cy="260.6" r="27" fill="url(#hole)"/><circle cx="-28.7" cy="318.4" r="27" fill="url(#hole)"/><circle cx="29.1" cy="318.4" r="27" fill="url(#hole)"/><circle cx="86.9" cy="318.4" r="27" fill="url(#hole)"/><circle cx="144.7" cy="318.4" r="27" fill="url(#hole)"/><circle cx="202.5" cy="318.4" r="27" fill="url(#hole)"/><circle cx="260.3" cy="318.4" r="27" fill="url(#hole)"/><circle cx="318.1" cy="318.4" r="27" fill="url(#hole)"/><g filter="url(#sb)" stroke="#303030" stroke-width="1" stroke-opacity="0.4" fill="none"><path d="M9.9 -28.8L15.2 -29.0M9.7 -25.9L14.3 -25.1M9.3 -24.1L16.3 -22.0M9.0 -23.1L17.0 -20.1M8.1 -21.2L15.0 -17.5M6.9 -19.4L10.7 -16.5M4.9 -17.2L12.5 -8.6M3.8 -16.3L7.3 -11.4M0.9 -14.6L5.8 -3.1M-1.1 -14.0L1.0 -6.7M-4.1 -13.4L-3.8 -9.0M-6.0 -13.4L-6.3 -6.8M-6.4 -13.5L-6.8 -8.4M-8.9 -13.9L-11.7 -2.9M-10.6 -14.5L-14.0 -5.9M-13.5 -16.0L-17.6 -9.9M-15.0 -17.1L-18.0 -13.7M-15.7 -17.8L-19.9 -13.7M-17.9 -20.7L-24.7 -16.6M-18.6 -21.8L-26.9 -17.7M-19.5 -24.1L-25.9 -22.1M-20.0 -27.0L-30.3 -26.0M-20.1 -27.8L-29.2 -27.4M-19.9 -30.6L-31.7 -32.3M-19.3 -33.2L-25.6 -35.2M-18.2 -35.7L-22.7 -38.1M-17.8 -36.3L-27.0 -42.1M-17.0 -37.6L-23.6 -42.7M-15.7 -39.0L-22.8 -46.0M-12.7 -41.4L-17.3 -49.3M-10.5 -42.4L-13.0 -48.8M-8.9 -42.9L-11.2 -52.0M-7.0 -43.3L-8.1 -51.3M-4.3 -43.4L-3.6 -55.9M-3.0 -43.3L-1.6 -53.1M-1.9 -43.1L0.3 -53.1M1.5 -41.9L7.1 -53.5M3.6 -40.6L7.5 -45.9M4.5 -39.9L10.9 -47.6M5.5 -39.1L11.2 -44.9M7.1 -37.2L11.2 -40.1M8.1 -35.6L17.7 -40.8M9.0 -33.5L14.9 -35.6M9.7 -30.8L21.4 -32.7M67.7 -29.4L75.7 -29.9M67.5 -26.1L79.3 -24.4M66.9 -23.4L78.0 -19.6M66.6 -22.7L73.7 -19.7M65.5 -20.6L75.7 -14.3M63.3 -17.8L67.1 -14.0M63.1 -17.6L67.3 -13.2M61.3 -16.1L66.2 -9.3M58.7 -14.7L61.3 -8.8M58.1 -14.4L60.8 -7.1M55.1 -13.6L56.6 -4.6M51.6 -13.4L50.9 -3.3M50.5 -13.6L49.1 -4.1M48.1 -14.1L46.7 -9.9M45.6 -15.2L40.4 -5.5M43.8 -16.3L37.3 -7.3M43.1 -16.9L38.2 -11.1M42.0 -17.9L35.1 -11.1M40.7 -19.4L37.0 -16.7M39.4 -21.5L34.5 -19.0M38.4 -23.8L34.2 -22.4M38.1 -25.1L32.8 -23.9M37.7 -27.4L30.5 -27.0M37.7 -29.4L25.9 -30.2M38.4 -32.9L33.3 -34.5M38.8 -34.1L32.2 -36.8M39.9 -36.2L35.6 -38.9M41.9 -38.8L32.6 -47.8M42.8 -39.7L37.3 -46.0M43.8 -40.5L40.8 -44.4M46.1 -41.9L43.3 -47.6M49.2 -43.0L48.0 -48.3M49.4 -43.0L46.7 -55.3M52.8 -43.4L52.8 -48.7M54.9 -43.2L55.6 -47.4M57.0 -42.8L60.7 -55.0M59.7 -41.7L64.5 -50.7M60.3 -41.3L64.0 -47.6M61.9 -40.2L68.6 -48.9M64.1 -38.2L72.4 -45.3M65.1 -36.9L70.1 -40.2M66.6 -33.9L78.6 -38.7M67.3 -31.8L78.3 -34.4M67.6 -29.8L78.3 -30.8M125.5 -29.1L134.1 -29.4M125.4 -26.6L129.6 -26.1M125.2 -25.3L131.5 -23.9M124.4 -22.7L133.8 -18.8M122.5 -19.4L128.9 -14.6M121.1 -17.8L130.3 -8.7M119.5 -16.4L123.8 -10.5M119.2 -16.2L122.7 -11.2M117.4 -15.1L120.1 -9.9M114.4 -13.9L117.6 -2.2M111.8 -13.5L112.6 -5.2M110.1 -13.4L109.9 -2.2M109.4 -13.4L108.6 -3.5M105.3 -14.3L101.5 -3.9M103.7 -15.0L100.0 -7.6M103.0 -15.4L97.5 -5.7M101.0 -16.8L93.9 -8.1M98.5 -19.5L92.4 -15.0M98.0 -20.1L87.6 -13.2M96.6 -22.7L91.5 -20.5M96.4 -23.3L91.3 -21.5M95.5 -27.2L84.3 -26.4M95.5 -27.6L84.1 -26.9M95.9 -31.7L86.2 -33.8M96.0 -32.3L87.4 -34.6M96.5 -33.8L92.7 -35.3M98.5 -37.4L90.7 -43.4M99.2 -38.3L89.9 -46.4M100.6 -39.6L92.7 -48.5M103.1 -41.4L100.1 -46.5M103.7 -41.8L100.7 -47.7M105.7 -42.6L102.7 -51.4M107.8 -43.2L106.4 -50.8M109.6 -43.4L108.9 -55.5M112.3 -43.3L113.3 -51.4M114.9 -42.7L118.5 -54.3M116.6 -42.1L121.5 -53.3M118.6 -41.0L123.4 -48.4M120.4 -39.7L123.1 -42.8M121.7 -38.3L126.0 -42.1M122.4 -37.5L131.3 -44.3M123.8 -35.3L131.1 -39.2M125.0 -32.1L133.8 -34.3M125.3 -30.9L133.8 -32.4M183.3 -28.3L194.4 -28.2M183.3 -27.2L192.3 -26.5M182.9 -24.8L189.1 -23.2M181.7 -21.6L189.3 -17.7M180.8 -20.2L189.9 -14.2M179.0 -17.9L184.6 -12.2M177.9 -16.9L183.4 -10.3M176.4 -15.8L181.9 -7.1M174.6 -14.8L178.4 -6.8M172.6 -14.0L176.1 -2.1M170.0 -13.5L171.3 -1.7M167.2 -13.4L166.8 -7.1M166.0 -13.6L164.1 -1.2M163.3 -14.3L161.6 -9.3M162.9 -14.4L160.0 -7.0M161.1 -15.3L158.1 -9.9M159.3 -16.4L153.2 -8.4M156.5 -19.1L147.1 -11.6M156.1 -19.6L147.7 -13.5M154.5 -22.5L149.6 -20.4M153.7 -25.1L141.3 -22.2M153.6 -25.6L141.2 -23.3M153.3 -28.2L144.9 -28.0M153.7 -31.7L142.5 -34.2M153.7 -31.8L146.0 -33.6M154.7 -34.7L148.3 -37.6M155.3 -35.9L149.4 -39.3M157.3 -38.6L154.3 -41.5M158.6 -39.8L153.4 -45.9M159.2 -40.4L155.0 -45.9M162.3 -42.2L158.9 -50.1M163.1 -42.5L158.6 -54.5M166.9 -43.3L165.6 -56.0M167.4 -43.4L166.9 -49.7M169.3 -43.4L170.1 -54.3M172.0 -42.9L173.3 -47.9M174.4 -42.1L179.3 -53.3M177.0 -40.6L180.7 -45.7M177.5 -40.3L185.0 -50.0M179.7 -38.1L187.6 -44.8M180.4 -37.3L184.0 -40.0M182.1 -34.2L189.3 -37.3M182.4 -33.6L194.0 -37.9M183.2 -30.2L194.3 -31.6M241.1 -29.4L252.7 -30.2M241.1 -27.3L252.8 -26.4M240.5 -24.3L247.3 -22.3M239.7 -22.1L250.9 -16.8M239.0 -20.8L243.5 -18.1M237.4 -18.5L242.0 -14.5M236.6 -17.7L240.4 -13.8M235.1 -16.4L238.6 -11.7M232.7 -14.9L235.7 -8.9M229.7 -13.8L231.3 -7.4M228.2 -13.6L229.0 -8.0M226.5 -13.4L226.6 -9.2M224.6 -13.5L224.1 -9.4M221.3 -14.2L218.5 -5.7M220.6 -14.5L217.5 -6.8M217.1 -16.4L214.2 -12.4M215.7 -17.6L210.2 -11.9M214.8 -18.6L206.1 -11.0M213.6 -20.1L206.5 -15.3M212.3 -22.6L200.4 -17.6M211.8 -23.8L200.9 -20.3M211.2 -26.8L201.5 -25.7M211.1 -28.2L204.0 -28.1M211.1 -29.5L206.0 -29.8M211.5 -31.6L201.0 -33.9M212.2 -34.1L207.2 -36.2M213.0 -35.7L202.8 -41.2M215.4 -38.9L208.2 -45.9M215.9 -39.4L211.7 -43.9M217.6 -40.7L213.0 -47.4M219.1 -41.7L215.4 -48.8M221.3 -42.6L217.3 -54.6M225.1 -43.4L224.5 -52.3M225.5 -43.4L225.0 -56.1M227.8 -43.3L228.6 -50.5M229.2 -43.1L230.7 -50.4M232.3 -42.1L235.8 -49.8M233.6 -41.4L237.9 -48.8M235.0 -40.5L238.8 -45.6M236.8 -38.9L242.2 -44.3M238.1 -37.4L241.5 -39.9M239.5 -35.1L245.0 -37.8M240.5 -32.4L249.0 -34.8M241.0 -29.9L250.9 -31.0M298.9 -27.9L310.8 -27.5M298.8 -26.5L305.7 -25.7M297.9 -23.1L302.9 -21.2M297.3 -21.7L306.1 -17.3M297.1 -21.2L307.2 -15.7M294.6 -17.9L301.5 -11.1M293.3 -16.7L300.4 -7.9M292.7 -16.3L297.8 -9.2M290.1 -14.8L294.9 -4.3M287.4 -13.8L290.1 -2.7M285.8 -13.5L287.4 -1.6M283.5 -13.4L283.2 -3.2M282.4 -13.5L282.0 -9.2M280.5 -13.8L278.9 -6.7M278.5 -14.4L274.4 -3.6M275.7 -15.9L270.4 -7.8M273.9 -17.3L267.1 -9.7M272.6 -18.6L269.5 -15.9M270.9 -20.9L261.6 -15.5M270.3 -22.2L262.2 -18.5M269.4 -24.5L265.0 -23.4M269.0 -26.8L262.7 -26.2M268.9 -27.4L262.6 -26.9M269.1 -31.1L263.4 -32.1M269.7 -33.2L257.6 -37.2M270.2 -34.6L263.5 -37.7M271.3 -36.5L262.7 -41.9M273.0 -38.7L266.0 -45.3M274.3 -40.0L271.3 -43.6M275.1 -40.5L271.4 -45.6M278.2 -42.3L275.6 -48.5M279.8 -42.8L278.7 -46.8M280.7 -43.1L279.4 -49.3M284.3 -43.4L284.6 -53.6M286.5 -43.2L287.6 -49.7M288.2 -42.8L290.5 -50.6M290.1 -42.1L292.1 -46.7M292.8 -40.5L296.2 -45.2M294.6 -39.0L303.4 -47.7M294.4 -39.1L300.2 -44.9M296.9 -35.9L307.9 -42.2M297.5 -34.7L303.3 -37.5M298.1 -33.3L309.9 -37.4M298.6 -31.2L307.7 -33.0M-13.3 28.5L-4.6 28.0M-13.6 32.6L-8.6 33.7M-14.1 34.4L-6.0 37.2M-15.1 36.5L-6.0 41.3M-15.3 37.0L-4.9 43.0M-16.9 39.2L-13.7 42.0M-17.6 39.9L-11.6 45.8M-20.1 42.0L-16.4 47.6M-21.3 42.7L-18.0 48.9M-23.7 43.7L-20.1 54.7M-25.0 44.0L-22.6 54.5M-29.1 44.4L-29.4 49.5M-31.4 44.1L-33.6 54.3M-33.4 43.5L-35.7 49.7M-34.3 43.2L-37.2 50.1M-37.4 41.3L-43.0 48.7M-37.9 41.0L-42.9 47.0M-39.3 39.6L-42.5 42.6M-40.4 38.3L-49.6 45.1M-41.7 36.1L-52.8 41.6M-42.5 34.2L-48.6 36.2M-43.2 31.5L-48.8 32.3M-43.3 29.7L-55.9 30.0M-43.0 26.4L-54.1 24.1M-42.6 24.9L-54.3 21.2M-41.5 22.2L-49.3 17.9M-40.6 20.9L-44.3 18.3M-39.3 19.2L-45.2 13.7M-37.7 17.7L-43.8 10.0M-36.8 17.1L-39.4 13.4M-33.6 15.4L-35.4 10.5M-32.6 15.0L-34.6 8.2M-30.9 14.6L-32.8 4.1M-27.2 14.4L-26.7 8.1M-25.8 14.6L-24.7 8.0M-23.9 15.0L-21.7 7.8M-22.8 15.4L-20.8 10.4M-20.8 16.4L-14.7 5.9M-18.5 18.1L-14.6 13.5M-16.3 20.3L-6.0 12.5M-15.7 21.2L-11.3 18.3M-15.0 22.5L-10.7 20.3M-14.0 24.8L-9.4 23.3M-13.6 26.6L-7.3 25.5M44.5 29.6L56.5 29.7M44.3 32.1L51.8 33.5M43.9 33.4L52.3 35.8M43.3 35.4L49.7 38.2M42.7 36.6L48.4 39.7M40.1 40.0L43.7 43.7M39.3 40.7L45.6 48.1M36.9 42.5L39.8 47.6M36.2 42.8L39.0 48.4M34.0 43.7L36.3 51.4M30.6 44.4L31.4 56.0M28.6 44.4L28.4 48.6M28.5 44.4L27.8 54.7M24.4 43.5L21.5 51.3M23.1 43.0L21.4 46.6M21.6 42.2L15.1 52.7M19.1 40.2L11.0 48.6M17.5 38.3L12.4 42.1M17.4 38.3L13.1 41.5M15.8 35.6L6.6 39.8M14.8 32.6L4.6 34.8M14.6 31.2L3.8 32.5M14.5 29.5L5.5 29.6M14.5 28.4L3.5 27.6M14.9 25.8L3.0 22.8M16.0 22.9L9.9 19.9M16.4 22.1L11.0 19.0M18.4 19.3L10.8 12.4M19.0 18.7L15.7 15.4M21.4 16.7L16.5 9.0M23.0 15.9L20.4 10.4M25.5 14.9L24.4 11.0M26.9 14.6L25.5 6.6M30.6 14.4L31.3 4.7M32.5 14.7L34.2 6.6M33.1 14.8L34.6 8.8M36.7 16.3L41.7 7.2M37.2 16.5L39.4 12.9M39.3 18.1L45.9 10.4M40.7 19.4L45.4 15.2M42.3 21.6L52.9 15.2M42.9 22.6L46.7 20.6M43.8 24.8L51.2 22.4M44.4 27.7L50.1 27.0M102.3 30.1L112.9 30.6M102.1 31.5L107.9 32.4M101.3 34.7L107.7 37.1M100.6 36.3L106.0 39.1M100.3 36.9L109.6 42.4M99.0 38.8L108.7 46.8M97.1 40.7L100.9 45.0M96.0 41.6L100.4 48.0M93.2 43.2L98.1 54.7M92.3 43.5L94.9 50.6M90.1 44.1L92.5 56.7M88.2 44.4L88.4 48.8M86.2 44.4L85.7 51.9M82.2 43.5L78.1 54.7M80.6 42.8L74.7 54.4M78.3 41.4L74.2 47.0M78.1 41.2L70.4 51.0M75.6 38.8L72.2 41.4M74.5 37.2L68.1 41.0M73.8 35.9L67.5 38.9M73.2 34.4L69.4 35.7M72.5 32.1L65.5 33.3M72.3 28.3L67.2 27.9M72.7 26.2L66.9 24.9M72.8 25.5L61.8 22.5M74.0 22.5L67.0 18.8M74.1 22.2L66.9 18.3M75.8 19.8L66.3 12.0M76.9 18.6L71.9 13.3M80.0 16.3L77.9 12.6M80.9 15.8L76.0 5.6M83.7 14.8L82.6 10.6M84.1 14.8L83.1 10.3M88.3 14.4L88.7 8.1M90.0 14.6L92.2 2.8M91.2 14.9L92.8 8.7M94.5 16.2L99.1 7.9M94.9 16.5L100.2 7.5M96.8 17.8L100.9 12.8M97.8 18.7L105.4 11.0M100.4 22.1L108.9 17.5M101.4 24.2L105.3 22.7M101.5 24.6L109.3 21.9M102.3 28.4L114.8 27.5M160.1 29.1L166.4 29.0M160.0 31.4L168.3 32.5M159.2 34.6L164.5 36.6M158.4 36.3L167.9 41.2M157.3 38.2L166.2 44.5M156.3 39.4L161.4 44.1M155.2 40.4L160.2 45.8M152.6 42.4L155.0 46.4M152.0 42.7L156.9 52.3M149.9 43.6L151.4 48.0M148.3 44.0L150.3 52.8M145.5 44.4L145.9 57.2M142.1 44.1L139.4 56.7M141.4 43.9L140.3 48.6M139.8 43.4L136.7 51.3M136.6 41.7L132.0 48.3M135.8 41.1L130.9 47.2M133.6 39.0L125.8 45.4M132.2 37.0L122.2 42.9M131.3 35.3L126.6 37.3M130.5 32.8L124.0 34.4M130.2 31.4L122.9 32.3M130.1 28.8L124.3 28.6M130.2 27.9L124.0 27.2M130.5 26.0L118.9 23.3M131.5 23.0L125.3 20.0M132.3 21.5L121.4 14.7M133.8 19.6L129.2 15.6M135.8 17.6L129.8 9.8M138.0 16.2L135.7 11.8M138.8 15.8L134.0 5.5M141.7 14.8L138.9 2.9M141.9 14.7L140.5 8.3M144.2 14.4L143.8 8.7M148.4 14.8L150.4 5.7M150.3 15.3L152.9 8.4M152.1 16.1L155.9 9.0M152.7 16.5L158.3 7.0M155.7 18.8L159.2 15.3M156.6 19.8L163.9 13.6M157.3 20.7L163.3 16.5M158.4 22.4L163.5 19.7M159.3 24.6L168.2 21.6M160.0 27.6L165.8 26.9M217.9 28.2L224.8 27.7M217.7 32.0L223.3 32.9M217.4 33.2L223.1 34.7M216.2 36.3L224.2 40.4M216.1 36.6L220.4 39.0M214.4 39.0L221.3 44.8M212.5 41.0L215.5 44.7M211.7 41.6L217.7 49.9M209.3 43.0L212.1 48.9M207.6 43.7L211.5 55.6M205.5 44.2L207.0 53.1M203.2 44.4L203.4 52.1M199.9 44.1L197.3 56.8M199.0 43.9L197.5 49.5M196.2 42.8L193.6 48.0M195.8 42.6L190.1 53.3M193.2 40.9L185.9 49.5M191.7 39.4L182.8 47.3M190.3 37.6L185.8 40.6M189.8 36.7L181.9 41.0M188.4 33.3L176.6 36.5M188.2 32.5L178.8 34.5M187.9 29.7L179.4 29.9M188.0 28.1L181.4 27.5M188.5 25.1L176.7 21.6M188.9 24.0L181.0 21.0M190.7 20.7L180.4 13.3M191.1 20.1L187.1 17.0M193.9 17.4L186.2 7.2M194.8 16.8L192.3 13.0M197.6 15.4L195.0 8.4M199.6 14.8L197.5 5.4M201.5 14.5L201.0 9.0M203.6 14.4L203.9 8.4M204.8 14.5L206.3 3.0M207.9 15.3L209.8 9.9M208.5 15.5L211.4 8.4M211.0 16.8L215.1 10.5M212.0 17.5L215.8 12.6M214.6 20.0L224.0 12.4M214.9 20.4L222.1 14.9M216.8 23.7L220.8 22.1M217.5 26.0L222.4 24.8M217.8 27.5L226.7 26.4M275.7 29.7L282.5 29.8M275.6 31.3L284.7 32.5M275.1 33.5L284.7 36.1M274.4 35.5L281.7 38.8M273.9 36.5L282.3 41.1M272.1 39.2L276.7 43.2M270.0 41.1L276.9 49.8M268.9 42.0L272.0 46.7M267.0 43.0L269.1 47.5M265.8 43.5L268.4 50.9M263.8 44.1L265.4 51.9M260.7 44.4L260.7 48.8M258.2 44.2L257.5 48.9M255.9 43.6L252.4 54.1M254.4 43.0L252.6 47.1M252.6 42.0L248.6 48.2M250.1 40.0L246.4 43.7M248.8 38.6L238.6 46.5M247.8 37.0L238.0 42.8M247.4 36.3L236.0 42.2M246.3 33.6L234.2 37.2M245.7 30.5L240.3 31.0M245.7 28.7L233.4 28.1M245.7 28.3L238.6 27.8M246.5 24.6L241.4 22.8M247.5 22.3L241.8 19.3M248.5 20.7L244.2 17.6M249.4 19.6L240.1 11.5M250.4 18.5L246.0 13.9M252.6 16.8L248.9 11.0M253.5 16.3L250.8 11.3M255.7 15.3L251.6 3.5M259.0 14.5L257.6 2.5M259.9 14.4L259.3 3.4M261.9 14.4L262.6 5.7M265.2 15.1L267.4 8.2M267.7 16.2L272.0 8.2M269.0 16.9L275.6 6.9M269.8 17.5L277.6 7.2M272.2 19.8L278.0 15.0M273.7 21.9L279.2 18.7M274.8 24.3L283.4 21.1M275.0 24.9L285.4 21.6M275.5 27.1L281.1 26.3M333.5 30.0L337.9 30.2M333.2 32.3L339.4 33.5M332.8 33.9L345.0 37.8M332.1 35.8L341.1 40.1M331.4 37.1L334.8 39.2M330.5 38.4L334.8 41.5M328.1 40.9L333.2 47.0M326.6 42.0L333.1 52.2M325.5 42.7L328.4 48.0M322.4 43.9L323.5 47.9M321.8 44.0L323.4 51.0M319.4 44.4L319.9 51.6M317.0 44.3L316.1 53.5M314.1 43.7L312.3 49.3M312.0 42.9L308.4 50.4M311.1 42.5L305.0 53.3M309.2 41.1L305.8 45.3M307.8 39.9L300.9 46.8M305.4 36.7L295.8 42.2M305.0 35.8L299.2 38.6M304.5 34.7L295.3 38.2M303.6 31.4L296.5 32.3M303.5 29.1L295.5 28.9M303.8 26.2L293.5 24.0M303.9 25.8L292.2 22.8M304.4 24.2L296.2 21.1M305.8 21.5L300.5 18.2M306.5 20.4L297.7 13.8M307.8 18.9L301.4 12.6M311.3 16.2L308.8 11.6M311.6 16.1L307.3 7.7M314.3 15.0L311.5 5.6M317.1 14.5L316.6 8.9M318.0 14.4L317.8 7.7M319.6 14.4L320.4 2.5M323.4 15.2L326.8 5.3M323.6 15.3L327.6 4.4M327.1 17.1L331.8 10.4M328.8 18.5L334.3 12.6M329.4 19.1L333.0 15.7M330.8 20.8L334.3 18.3M332.0 22.8L341.6 18.1M333.0 25.6L344.3 22.7M333.4 27.8L339.8 27.1M21.3 87.3L29.2 87.4M21.0 90.0L29.6 91.7M20.8 90.9L30.3 93.3M19.4 94.4L24.7 97.3M18.4 96.1L21.7 98.5M18.0 96.6L22.8 100.4M15.7 98.9L23.5 108.7M13.9 100.1L17.4 106.1M11.7 101.2L14.2 107.7M11.1 101.4L15.0 112.9M8.1 102.1L9.4 112.2M5.9 102.2L5.6 115.0M4.2 102.1L2.6 113.5M1.6 101.5L-2.0 112.6M0.2 100.9L-4.1 110.5M-2.0 99.7L-5.7 105.4M-3.0 99.0L-8.9 106.5M-4.3 97.8L-13.0 106.4M-5.8 96.0L-9.3 98.5M-6.9 94.3L-17.8 100.1M-8.0 91.8L-13.0 93.4M-8.3 90.4L-12.6 91.4M-8.7 86.7L-18.4 86.4M-8.5 84.6L-18.9 82.8M-8.4 84.0L-17.4 82.0M-7.5 81.3L-17.9 76.8M-5.9 78.5L-15.7 71.4M-5.7 78.2L-15.1 71.1M-2.8 75.2L-10.3 65.3M-2.6 75.1L-6.1 70.4M-0.8 74.0L-2.8 70.2M2.9 72.6L0.3 61.6M4.5 72.3L3.1 61.0M6.6 72.2L6.8 65.6M7.5 72.2L7.9 67.4M11.1 73.0L13.0 67.5M12.1 73.4L15.2 66.2M13.4 74.0L16.4 68.4M15.7 75.5L22.3 67.4M17.4 77.1L22.5 72.5M19.5 80.0L27.0 76.0M20.3 81.7L29.2 78.3M20.3 81.9L27.6 79.2M21.1 84.9L32.0 83.2M79.1 86.8L89.4 86.6M78.9 89.4L84.8 90.3M78.2 92.3L82.8 93.9M77.4 94.1L82.3 96.7M77.3 94.3L82.5 97.0M75.0 97.5L84.3 106.3M74.8 97.7L80.8 103.6M72.2 99.8L78.3 109.2M71.0 100.5L74.9 108.0M68.7 101.5L72.2 112.4M66.8 102.0L69.1 114.2M64.6 102.2L64.8 108.1M61.5 102.0L60.0 110.3M60.8 101.8L58.6 111.3M58.8 101.2L54.9 111.6M55.6 99.6L49.3 108.7M54.0 98.3L49.2 103.7M52.9 97.2L47.3 102.2M51.0 94.5L46.8 96.8M50.1 92.6L46.1 94.1M49.9 92.1L43.9 94.2M49.1 88.4L40.7 89.0M49.1 87.5L37.1 87.7M49.2 85.7L41.1 84.9M49.7 82.9L39.4 79.8M50.7 80.4L42.0 76.0M51.3 79.4L45.4 75.8M52.2 78.0L43.1 70.9M54.6 75.6L47.8 67.4M55.3 75.0L50.7 68.6M58.5 73.3L55.0 64.8M59.0 73.1L56.3 65.4M62.9 72.2L62.4 66.1M63.4 72.2L63.0 65.5M66.7 72.4L68.7 61.0M67.5 72.6L68.8 67.3M69.8 73.3L72.4 66.9M72.3 74.6L75.2 70.0M73.6 75.6L77.2 71.2M76.1 78.3L84.6 72.0M76.2 78.3L86.4 70.8M77.3 80.1L83.9 76.6M78.8 84.1L89.7 81.8M79.0 85.6L86.9 84.8M136.9 86.5L146.6 86.0M136.9 88.4L142.7 88.9M136.4 91.2L140.5 92.3M135.6 93.2L145.8 97.7M134.3 95.7L141.3 100.5M133.0 97.3L139.1 102.7M132.4 98.0L138.9 104.7M130.2 99.7L136.1 108.6M127.2 101.2L130.0 108.6M126.0 101.6L128.9 112.0M124.2 102.0L125.2 108.0M121.4 102.2L120.9 114.1M119.1 101.9L117.2 112.1M116.9 101.3L113.5 110.9M115.4 100.7L111.8 108.0M114.2 100.1L109.2 108.3M112.8 99.1L108.1 105.3M110.1 96.5L102.0 103.0M109.1 95.0L103.8 98.3M108.3 93.6L101.0 97.1M107.4 91.1L100.0 93.2M107.0 88.9L94.7 90.3M106.9 88.0L97.0 88.5M107.2 84.4L99.8 83.0M107.5 83.0L95.2 79.4M107.8 82.0L99.5 78.9M108.9 79.8L99.3 74.3M111.3 76.6L105.1 70.5M111.4 76.5L104.9 70.0M113.9 74.5L108.3 65.7M115.7 73.5L111.7 64.7M118.4 72.6L116.4 64.1M119.6 72.4L117.6 60.0M121.2 72.2L120.7 62.1M123.8 72.3L125.1 61.5M125.2 72.6L128.1 60.0M127.8 73.4L129.6 69.3M129.5 74.3L133.4 67.8M130.8 75.1L135.4 68.9M133.1 77.2L140.8 70.4M134.3 78.8L139.6 75.2M135.3 80.4L144.8 75.5M136.6 84.0L145.1 82.1M136.6 84.4L147.7 82.3M194.7 86.9L200.6 86.8M194.6 88.5L205.6 89.4M193.9 92.1L203.0 95.3M193.4 93.4L201.6 97.1M192.7 94.7L203.6 101.1M191.3 96.8L198.8 103.0M188.9 99.0L195.9 108.0M187.9 99.8L191.5 105.4M185.8 100.9L187.9 105.6M183.2 101.8L184.8 108.8M181.0 102.1L181.6 108.5M180.0 102.2L180.1 108.5M177.7 102.1L177.0 107.7M176.6 101.9L174.5 112.2M174.0 101.1L171.6 106.8M172.0 100.1L167.7 107.2M170.0 98.6L163.7 106.1M168.1 96.7L162.5 101.3M166.6 94.4L156.3 100.1M166.5 94.4L156.5 99.9M165.1 90.5L154.3 92.9M165.0 90.2L153.7 92.5M164.7 86.9L160.6 86.8M164.7 86.2L152.2 85.4M165.4 82.6L159.5 80.7M165.7 81.9L160.7 80.0M166.7 79.6L157.3 74.1M168.1 77.7L164.0 74.2M170.6 75.3L163.9 66.4M170.9 75.0L163.9 65.3M173.7 73.4L169.3 63.3M175.9 72.7L172.8 61.1M178.3 72.3L177.1 60.8M179.0 72.2L178.5 62.0M181.9 72.4L183.5 61.8M183.8 72.8L187.0 61.3M186.1 73.6L188.8 67.8M187.3 74.2L189.9 69.7M189.5 75.9L192.5 72.4M191.0 77.3L195.0 73.8M192.3 79.1L199.4 74.5M193.4 81.1L204.1 76.2M193.7 81.9L204.5 77.7M194.5 85.0L203.5 83.7M252.5 87.6L264.1 87.9M252.4 89.0L260.1 90.0M251.5 92.5L255.9 94.1M251.0 93.7L259.8 98.0M250.7 94.3L259.0 98.8M248.5 97.3L257.7 105.7M247.6 98.3L256.3 107.7M245.6 99.8L250.1 106.9M242.9 101.2L244.4 105.2M241.2 101.7L243.6 111.1M240.0 102.0L242.0 113.6M237.8 102.2L238.0 110.5M235.3 102.0L233.7 112.9M233.9 101.8L232.1 109.5M231.4 100.9L227.8 109.1M228.7 99.4L224.9 104.8M227.1 98.0L221.8 103.5M226.2 97.0L221.3 101.2M224.9 95.3L214.1 102.2M223.7 93.1L213.5 97.5M223.2 91.8L216.7 93.9M222.7 89.8L213.6 91.4M222.5 86.9L211.4 86.6M222.5 86.2L212.1 85.4M223.4 82.1L215.0 79.1M223.4 82.0L217.2 79.6M224.3 80.1L219.2 77.4M226.9 76.6L220.1 70.0M228.0 75.6L220.9 67.0M230.2 74.1L225.6 65.8M231.5 73.4L227.7 64.6M233.7 72.7L231.4 63.6M235.8 72.3L235.1 66.4M237.9 72.2L238.1 64.1M240.3 72.5L241.2 67.6M241.0 72.6L242.0 68.4M244.3 73.8L249.9 63.0M245.9 74.8L250.0 68.7M247.9 76.4L255.6 68.4M248.9 77.5L253.8 73.4M249.9 78.7L256.3 74.3M251.0 80.6L258.0 77.1M252.0 83.3L264.0 80.1M252.2 84.0L261.1 82.1M310.3 86.1L315.3 85.7M310.0 90.1L319.0 91.8M309.4 92.4L316.9 95.1M309.4 92.4L316.4 94.9M307.8 95.5L318.2 102.4M305.8 97.9L311.7 103.8M305.3 98.4L308.6 102.1M303.1 100.0L306.2 105.0M302.3 100.5L304.2 104.1M300.7 101.2L304.3 110.7M298.3 101.9L300.9 114.3M296.3 102.2L297.1 114.0M294.0 102.1L293.7 106.3M290.6 101.4L288.6 107.3M288.6 100.6L286.0 105.7M288.1 100.4L282.9 110.0M285.1 98.2L277.1 106.8M283.6 96.6L279.9 99.6M282.5 95.0L273.7 100.5M281.7 93.5L270.5 98.7M281.1 92.0L269.1 96.0M280.4 88.8L276.3 89.3M280.3 88.4L270.5 89.1M280.6 84.3L276.0 83.4M280.8 83.4L270.6 80.7M281.3 81.7L270.4 77.4M282.7 79.1L278.8 76.7M283.8 77.6L276.7 71.8M285.4 76.0L278.7 68.4M286.5 75.1L279.9 66.0M288.8 73.7L284.5 64.9M291.4 72.7L289.3 65.2M292.9 72.4L291.1 61.5M296.4 72.2L297.2 61.2M297.6 72.4L298.6 65.8M298.5 72.5L301.2 60.1M302.0 73.8L307.1 63.5M303.1 74.4L308.0 66.3M306.0 76.6L314.1 68.6M306.8 77.6L312.0 73.2M307.8 78.9L317.8 72.3M308.8 80.7L318.0 76.3M309.8 83.2L321.4 80.0M310.2 85.8L316.8 85.2M-1.9 143.8L4.4 143.3M-2.0 147.0L7.2 148.2M-2.7 149.9L8.6 153.9M-2.8 150.2L7.9 154.2M-4.7 153.7L4.9 160.6M-5.7 155.0L-0.8 159.2M-7.7 156.9L-0.8 165.8M-9.2 157.9L-2.9 168.3M-10.3 158.5L-8.3 162.8M-12.8 159.4L-9.7 170.2M-14.1 159.7L-12.0 170.3M-17.9 160.0L-18.4 166.1M-19.3 159.8L-20.9 169.8M-21.0 159.4L-22.7 165.0M-22.6 158.9L-26.7 168.8M-25.6 157.2L-30.3 163.9M-26.0 157.0L-32.8 165.9M-28.7 154.3L-33.4 158.1M-29.6 152.9L-39.9 159.3M-30.9 150.4L-39.0 153.5M-31.3 149.3L-40.2 151.9M-31.6 147.9L-37.2 149.0M-31.9 145.8L-42.2 146.3M-31.8 143.2L-40.8 142.1M-31.4 141.0L-39.7 138.7M-30.9 139.5L-35.0 137.9M-28.8 135.9L-34.7 131.5M-28.8 135.9L-36.5 130.0M-26.2 133.2L-29.5 129.0M-24.8 132.3L-28.6 126.2M-23.1 131.3L-24.8 127.5M-22.2 131.0L-26.7 118.9M-18.2 130.1L-18.9 121.7M-16.7 130.0L-16.7 123.6M-14.1 130.3L-12.6 122.6M-11.7 130.9L-7.8 120.7M-10.0 131.7L-4.1 120.4M-9.3 132.1L-7.1 128.3M-7.6 133.2L-4.2 128.8M-6.2 134.4L-3.1 131.3M-4.2 137.0L5.8 130.7M-3.3 138.7L8.1 133.4M-2.3 141.7L2.2 140.7M-2.0 143.1L5.5 142.1M55.9 144.1L68.5 143.3M55.8 146.6L64.9 147.5M55.2 149.5L67.2 153.4M54.4 151.6L61.1 154.9M53.6 153.0L58.2 155.9M51.5 155.6L60.6 164.8M51.2 155.9L54.2 159.0M49.5 157.3L53.6 163.2M46.2 159.0L50.6 170.4M44.3 159.6L45.4 163.9M42.4 159.9L43.4 170.3M40.5 160.0L40.2 172.9M39.8 160.0L39.4 165.3M36.1 159.2L32.1 171.0M34.3 158.5L31.3 164.5M32.6 157.5L26.6 166.5M31.8 156.9L27.6 162.4M30.0 155.3L26.2 158.8M28.3 153.1L23.7 156.1M27.5 151.8L22.8 154.2M26.4 148.8L22.4 149.9M26.0 146.6L20.3 147.2M25.9 146.1L13.6 147.0M26.0 143.5L13.6 142.3M26.8 139.9L15.5 135.9M26.9 139.6L19.4 136.7M27.8 137.7L17.0 131.7M30.1 134.6L23.2 127.9M31.0 133.7L26.3 128.4M33.5 132.0L29.3 124.8M34.9 131.2L32.9 126.4M36.0 130.8L34.6 126.5M39.3 130.1L38.3 121.2M40.0 130.0L39.4 118.2M42.5 130.1L43.3 122.4M44.3 130.4L45.8 124.1M47.9 131.7L51.1 125.5M48.3 132.0L52.5 124.7M50.4 133.4L58.1 124.0M51.6 134.5L60.8 125.5M52.9 136.0L62.6 128.8M54.7 139.1L60.1 136.8M55.3 140.7L61.6 138.8M55.7 142.3L61.4 141.2M113.7 144.7L126.6 144.4M113.3 148.3L125.4 151.0M113.3 148.3L119.8 149.7M111.9 152.1L115.9 154.2M111.0 153.6L116.5 157.4M109.3 155.7L112.2 158.6M108.0 156.8L112.3 162.4M107.5 157.1L109.9 160.4M104.2 159.0L107.4 167.1M103.6 159.2L106.3 166.6M99.9 160.0L100.3 165.9M98.5 160.0L98.5 165.2M97.3 159.9L96.3 170.8M94.0 159.2L92.2 164.7M93.4 159.0L91.7 163.5M90.4 157.5L85.7 164.5M89.3 156.7L85.6 161.2M87.2 154.6L79.2 161.3M85.7 152.5L77.7 157.1M85.4 151.9L81.3 154.0M84.2 148.7L76.7 150.6M83.8 146.6L79.3 147.1M83.7 144.3L76.7 143.9M84.0 142.1L72.4 139.7M84.3 140.8L80.3 139.6M85.5 137.9L78.2 134.0M86.6 136.2L81.4 132.4M86.9 135.8L77.8 128.7M88.6 133.9L85.0 129.8M90.3 132.6L85.1 124.8M91.4 131.9L87.2 124.3M94.3 130.6L91.8 122.4M95.7 130.3L93.6 120.1M99.5 130.0L100.1 118.2M100.4 130.1L101.6 119.8M102.7 130.5L105.5 120.1M104.0 131.0L108.1 119.8M107.7 133.0L112.8 126.2M108.5 133.7L114.3 127.1M110.1 135.2L113.3 132.5M111.9 137.9L117.2 135.0M112.0 138.1L116.4 135.8M112.9 140.2L123.7 136.6M113.3 141.8L118.1 140.7M171.5 145.5L177.2 145.7M171.5 146.0L180.8 146.6M170.8 149.4L179.2 152.0M169.9 151.7L174.3 153.9M168.6 153.8L177.1 160.0M168.5 154.0L172.6 157.0M166.3 156.3L171.9 162.7M165.0 157.3L168.0 161.5M162.9 158.5L165.2 163.3M160.5 159.5L163.7 170.8M159.5 159.7L161.3 168.7M155.9 160.0L155.7 165.5M153.6 159.7L151.2 171.9M152.5 159.5L150.5 167.0M149.5 158.3L145.5 166.0M148.6 157.8L142.0 168.4M146.2 155.9L141.3 161.0M145.6 155.3L140.5 160.1M144.0 153.2L133.2 160.3M142.6 150.6L131.2 155.1M141.9 148.5L130.6 151.2M141.8 148.2L133.4 150.0M141.5 143.9L129.2 143.0M141.6 143.5L133.8 142.7M142.2 140.5L135.3 138.3M142.9 138.7L138.7 136.8M143.8 137.0L136.6 132.5M144.4 136.1L140.2 132.9M147.6 133.0L141.0 124.1M149.3 131.8L144.6 123.3M151.0 131.1L146.5 120.0M153.2 130.4L152.2 126.2M154.7 130.1L153.9 123.8M156.9 130.0L157.1 123.5M158.7 130.2L160.6 118.0M161.0 130.7L162.9 124.7M162.8 131.4L166.1 124.2M165.5 133.0L169.4 127.7M166.0 133.4L172.2 125.7M167.2 134.5L173.9 128.0M169.7 137.8L177.3 133.7M169.9 138.3L177.2 134.6M170.9 140.9L176.0 139.4M171.2 142.0L176.3 140.9M229.3 144.5L236.9 144.3M229.2 146.6L235.4 147.3M228.9 148.3L237.6 150.2M227.6 152.0L236.0 156.4M226.8 153.3L235.1 158.7M226.1 154.3L234.3 160.7M224.2 156.3L230.1 163.0M222.2 157.8L226.5 164.8M220.9 158.4L223.7 164.0M219.2 159.2L222.0 167.3M216.7 159.8L218.2 169.0M215.5 160.0L216.0 167.1M211.3 159.7L210.1 165.7M209.9 159.4L207.5 167.4M208.5 158.9L203.6 170.8M206.6 157.9L201.0 167.3M205.1 156.9L202.3 160.5M202.4 154.1L196.1 159.0M202.3 154.0L196.3 158.5M200.7 151.4L191.1 155.9M200.2 150.1L194.5 152.2M199.3 146.0L188.7 146.8M199.3 145.8L192.3 146.2M199.4 143.2L189.4 142.0M200.0 140.5L188.9 137.0M201.0 138.1L193.3 134.1M202.0 136.4L193.2 130.3M203.4 134.7L197.4 129.0M205.0 133.2L198.6 125.1M207.0 131.9L204.6 127.4M208.9 131.0L207.4 127.2M210.7 130.4L208.5 121.4M212.2 130.2L210.4 117.6M214.5 130.0L214.6 122.2M217.1 130.3L219.3 118.6M218.8 130.7L221.0 123.6M220.4 131.3L223.7 123.9M222.9 132.7L226.6 127.2M223.9 133.5L229.7 126.6M225.5 135.0L230.6 130.4M227.3 137.5L237.4 131.6M227.9 138.8L235.2 135.4M228.5 140.1L234.8 137.8M229.0 142.0L238.0 140.2M287.1 145.2L291.9 145.3M286.8 148.1L293.5 149.6M286.2 150.0L297.1 153.9M285.3 152.2L290.4 155.0M284.8 153.0L295.1 159.4M284.2 153.9L287.7 156.5M281.8 156.4L287.3 162.9M279.3 158.1L284.6 167.7M278.2 158.7L283.6 170.5M276.3 159.4L278.7 167.7M273.8 159.9L274.6 167.4M272.4 160.0L272.7 169.3M270.3 159.9L268.8 172.3M267.5 159.3L264.8 167.6M266.8 159.0L264.1 165.9M264.2 157.7L259.4 165.4M262.1 156.2L254.2 165.1M260.1 154.0L253.3 159.0M259.6 153.2L251.5 158.5M258.0 150.1L251.3 152.6M257.7 149.2L246.8 152.3M257.4 147.9L250.7 149.2M257.1 143.9L245.7 143.0M257.3 142.8L252.3 142.1M258.0 139.9L248.4 136.4M258.8 138.1L247.3 132.1M260.0 136.1L253.7 131.5M260.2 135.8L255.0 131.8M262.3 133.6L256.7 127.2M263.4 132.8L260.1 128.2M266.2 131.2L262.4 122.6M267.5 130.7L263.6 118.4M270.3 130.1L269.8 125.8M271.9 130.0L271.7 118.9M273.8 130.1L274.9 119.9M275.2 130.3L276.6 123.7M279.1 131.7L283.4 123.5M280.5 132.6L283.8 127.8M281.9 133.7L287.8 126.9M283.1 134.8L290.2 128.1M284.8 137.0L295.7 130.0M285.8 138.9L292.9 135.8M286.2 139.9L291.3 138.1M287.0 143.5L292.0 143.0M32.7 201.8L38.2 201.5M32.5 205.0L43.8 206.7M32.0 207.3L42.8 210.7M31.7 208.1L35.6 209.5M30.0 211.4L35.6 215.4M28.7 213.0L34.0 217.9M28.1 213.6L32.5 218.2M26.6 214.9L33.8 224.6M23.8 216.5L26.6 223.1M22.0 217.2L24.2 224.3M20.9 217.5L23.4 229.2M17.5 217.8L17.3 230.4M15.7 217.7L14.4 227.2M14.1 217.4L13.0 221.6M10.5 216.0L5.0 226.3M10.0 215.7L3.7 226.0M7.3 213.6L2.7 218.5M6.2 212.4L-3.5 220.6M5.1 210.9L-5.5 217.7M4.3 209.6L-2.4 213.0M3.2 206.5L-2.6 208.0M2.9 205.4L-8.8 207.4M2.7 202.8L-8.4 202.9M2.8 201.3L-2.8 200.7M3.2 198.9L-2.3 197.4M4.6 195.6L-1.2 192.4M5.2 194.6L1.0 191.8M6.4 192.9L0.8 188.0M7.7 191.6L4.6 188.2M8.8 190.7L2.1 181.5M11.1 189.3L8.4 183.7M12.8 188.6L10.6 182.4M14.9 188.1L14.2 183.8M18.1 187.8L18.3 180.7M19.0 187.9L19.9 177.5M21.0 188.2L22.4 181.9M24.7 189.5L27.0 184.9M25.7 190.1L31.8 180.4M28.1 192.0L31.8 188.0M28.8 192.7L36.6 185.7M30.2 194.4L40.6 187.4M31.0 195.9L42.2 190.2M32.1 198.6L37.9 196.9M32.5 200.6L37.7 199.8M90.5 203.3L96.8 203.5M90.2 205.9L99.3 207.8M90.0 206.7L96.0 208.3M89.0 209.3L94.4 211.8M87.6 211.6L91.7 214.7M86.8 212.6L93.5 218.5M85.7 213.8L93.2 221.8M83.8 215.3L89.4 223.5M81.6 216.5L84.3 222.7M80.0 217.1L81.4 221.7M78.4 217.5L80.7 229.0M75.9 217.8L76.2 227.8M74.3 217.8L73.6 226.8M71.6 217.3L69.4 225.5M69.7 216.6L67.9 220.9M67.8 215.7L64.7 220.8M66.4 214.7L60.0 223.0M64.5 213.0L58.9 218.2M62.4 210.1L52.8 215.4M61.5 208.2L50.5 212.4M61.4 207.9L55.3 210.1M60.9 206.0L51.0 208.2M60.5 202.4L53.3 202.2M60.6 200.9L50.8 199.6M61.2 198.1L55.3 196.2M62.2 195.8L55.9 192.5M63.1 194.4L58.4 191.3M63.6 193.7L53.9 186.3M66.1 191.1L59.6 183.0M66.5 190.8L63.9 187.3M68.5 189.5L65.9 184.4M70.8 188.5L68.5 181.5M72.3 188.2L70.8 181.5M75.8 187.8L76.0 182.2M78.4 188.1L80.2 179.1M80.2 188.6L82.2 182.6M81.6 189.1L85.7 179.8M83.3 190.0L85.4 186.6M85.9 192.0L93.5 184.1M86.5 192.6L89.7 189.6M88.6 195.4L96.8 190.8M88.7 195.6L94.1 192.6M89.6 197.7L100.1 193.9M90.2 200.0L102.2 197.7M148.3 203.4L153.1 203.6M148.1 205.4L155.5 206.7M147.5 207.6L158.4 211.3M147.2 208.5L151.6 210.4M145.3 211.8L151.6 216.5M143.9 213.4L151.2 220.6M142.7 214.5L149.9 223.5M141.1 215.6L145.4 222.5M140.5 216.0L145.4 225.0M137.7 217.1L140.2 225.4M134.4 217.8L134.8 222.9M132.7 217.8L132.5 222.2M130.7 217.6L128.7 228.6M129.6 217.3L127.4 226.0M126.1 215.9L121.4 224.5M125.1 215.4L121.7 220.6M124.3 214.8L120.0 220.6M122.1 212.8L117.8 216.7M120.9 211.3L116.6 214.2M119.5 208.6L110.2 212.4M119.1 207.6L113.3 209.6M118.4 204.9L110.5 206.0M118.3 201.8L111.2 201.3M118.4 201.1L106.5 199.8M118.7 199.4L109.9 197.4M119.5 196.9L109.1 192.5M120.7 194.6L111.7 188.7M121.5 193.6L113.6 187.5M123.7 191.3L118.4 185.1M125.7 189.8L119.9 179.9M126.2 189.6L123.1 183.7M128.8 188.5L127.0 182.9M130.1 188.1L128.7 181.8M132.6 187.8L132.1 177.5M135.3 187.9L136.0 183.0M137.1 188.3L139.2 180.3M139.2 189.0L141.4 184.0M140.5 189.7L142.5 186.1M144.0 192.3L151.6 184.7M144.0 192.2L151.4 184.9M146.5 195.7L154.5 191.4M146.5 195.7L153.9 191.8M147.6 198.4L153.1 196.8M148.2 200.8L152.2 200.2M206.1 203.8L215.8 204.5M205.9 205.2L218.2 207.3M205.4 207.4L211.3 209.3M205.0 208.5L209.8 210.5M204.3 209.9L213.9 215.2M201.9 213.2L206.7 217.9M201.5 213.6L208.2 220.7M198.5 215.8L204.6 226.6M198.0 216.1L203.2 225.9M194.6 217.4L197.0 227.8M193.6 217.6L194.6 223.2M190.3 217.8L190.0 224.7M189.3 217.7L188.2 226.6M187.2 217.3L184.2 228.4M185.4 216.7L183.8 220.7M182.9 215.3L177.5 223.4M180.7 213.6L173.5 221.1M179.2 211.9L169.2 219.4M178.5 210.9L171.3 215.5M177.8 209.8L171.9 212.9M176.7 206.8L172.1 208.1M176.2 204.5L170.8 205.1M176.1 202.9L163.4 203.1M176.1 201.6L171.8 201.3M176.7 198.7L171.2 197.2M177.7 196.1L174.1 194.3M178.9 194.0L169.5 187.2M180.2 192.5L174.6 187.1M180.9 191.8L174.1 184.5M183.0 190.2L178.8 183.6M184.5 189.3L181.0 182.2M187.3 188.3L184.3 177.2M189.9 187.8L189.5 182.4M190.6 187.8L190.3 179.8M193.4 188.0L194.5 180.9M194.6 188.2L195.7 183.6M196.9 189.0L200.1 181.5M200.1 190.8L207.5 181.1M201.6 192.1L210.5 182.9M203.1 193.8L210.8 188.1M204.1 195.3L208.0 193.1M204.9 197.0L213.6 193.3M205.3 198.1L214.0 195.3M206.1 201.7L214.4 201.2M263.9 203.2L270.6 203.3M263.8 204.6L275.7 206.0M263.6 205.9L269.1 207.1M262.4 209.4L269.6 213.0M262.0 210.1L270.7 214.9M260.4 212.4L267.5 218.3M258.9 214.0L264.7 220.6M256.9 215.5L260.9 221.9M256.0 216.0L258.6 221.0M252.2 217.4L254.2 226.1M252.0 217.5L254.3 229.0M249.5 217.8L249.7 222.6M246.7 217.6L245.8 223.8M244.7 217.2L242.2 225.8M243.3 216.7L239.8 225.2M241.6 215.9L237.4 223.4M238.9 214.0L235.8 217.5M237.7 212.8L234.2 215.9M236.4 211.0L226.5 217.5M235.2 208.9L225.7 213.2M234.3 206.4L229.5 207.6M233.9 203.8L223.5 204.4M233.9 203.8L222.5 204.5M234.0 200.9L228.5 200.2M234.9 197.5L226.4 194.3M235.5 196.0L230.9 193.6M236.7 194.1L233.0 191.5M237.2 193.5L231.4 188.9M238.2 192.3L231.6 185.7M240.2 190.6L236.3 185.1M243.1 189.0L240.1 181.7M245.6 188.2L243.5 178.8M247.7 187.9L246.9 178.8M249.9 187.8L250.7 176.0M250.2 187.9L251.2 177.2M252.8 188.3L255.6 177.8M255.5 189.3L260.6 179.1M256.2 189.7L259.8 183.3M259.1 191.8L267.7 182.7M260.6 193.4L264.0 190.6M261.7 194.9L265.8 192.3M262.6 196.7L272.8 192.1M263.0 197.7L274.6 193.5M263.8 201.1L270.1 200.4M321.7 202.1L329.7 201.7M321.4 205.7L330.5 207.5M321.3 206.1L325.4 207.1M320.7 208.2L331.2 212.2M319.7 210.3L327.5 214.7M318.4 212.2L326.3 218.6M316.7 213.9L320.3 217.9M314.0 215.9L318.4 223.6M312.5 216.6L316.9 227.0M309.9 217.5L310.8 221.5M309.2 217.6L310.1 222.9M306.7 217.8L306.7 229.7M303.9 217.5L303.0 221.8M303.2 217.4L300.6 228.4M300.1 216.3L296.8 223.0M298.6 215.5L295.7 220.0M296.3 213.6L291.0 219.0M294.8 211.9L287.3 217.7M294.7 211.7L289.1 215.9M293.4 209.6L282.6 215.1M292.2 206.8L288.0 208.0M292.0 205.7L284.9 207.1M291.7 202.9L282.5 202.9M291.8 200.9L284.7 200.0M292.0 199.7L283.0 197.8M292.9 196.9L289.0 195.3M294.0 194.8L283.2 187.9M294.7 193.8L290.4 190.6M297.2 191.2L293.1 186.2M298.1 190.5L293.3 183.5M300.0 189.4L295.9 181.3M302.5 188.4L299.0 176.3M305.7 187.8L305.5 183.5M306.8 187.8L307.0 176.9M309.7 188.1L311.9 177.4M311.2 188.5L314.2 179.2M312.6 189.0L315.2 183.0M315.4 190.6L322.3 180.9M317.3 192.2L324.4 185.0M317.7 192.6L325.7 185.3M319.6 195.2L327.0 190.8M320.5 196.9L327.0 194.0M321.1 198.7L328.5 196.6M321.4 199.6L328.2 198.1M9.5 260.2L22.4 259.8M9.4 262.7L16.6 263.7M9.1 264.2L15.0 265.7M8.3 266.5L13.1 268.6M7.7 267.7L18.2 273.3M5.9 270.3L12.0 275.5M4.2 272.0L8.5 277.2M3.3 272.8L6.0 276.5M1.2 274.0L4.2 280.1M-1.8 275.1L0.4 283.8M-4.4 275.6L-3.9 282.6M-6.5 275.6L-7.1 284.8M-6.6 275.6L-7.1 281.1M-9.9 274.9L-13.7 287.3M-11.4 274.4L-15.7 284.5M-13.5 273.3L-19.7 283.3M-14.5 272.6L-19.5 279.3M-17.4 269.7L-22.6 273.6M-17.8 269.2L-21.2 271.6M-18.8 267.6L-24.5 270.5M-20.0 264.4L-25.8 265.8M-20.3 263.0L-26.0 263.9M-20.5 260.4L-32.3 260.2M-20.3 258.1L-26.0 257.2M-19.7 255.8L-31.7 251.8M-19.0 254.1L-23.3 252.1M-17.7 251.9L-27.4 245.0M-17.1 251.1L-21.1 247.7M-15.9 249.8L-22.0 243.4M-12.8 247.5L-17.6 239.0M-10.8 246.6L-12.9 241.0M-10.1 246.3L-13.4 236.1M-7.3 245.7L-8.2 238.1M-5.1 245.6L-4.9 238.6M-4.4 245.6L-3.9 237.9M-2.3 245.9L-0.3 236.5M0.4 246.8L3.7 239.0M2.8 248.1L6.3 242.9M4.3 249.2L6.9 246.1M6.5 251.6L13.7 246.1M7.7 253.5L11.7 251.4M8.3 254.6L17.9 250.4M8.8 256.0L13.4 254.5M9.2 257.7L14.4 256.6M67.3 261.2L72.1 261.4M67.0 263.5L74.7 265.0M66.7 264.9L75.6 267.6M65.9 267.0L74.9 271.1M64.8 268.9L70.6 272.8M63.2 270.9L67.9 275.2M61.7 272.3L68.6 280.7M59.8 273.6L63.3 279.4M57.9 274.5L62.7 286.4M56.6 275.0L58.5 281.2M54.4 275.5L56.1 287.8M53.2 275.6L53.4 279.6M50.2 275.5L48.9 285.3M47.4 274.8L45.1 281.7M45.0 273.7L42.1 279.0M43.7 272.9L40.9 276.8M43.4 272.6L40.3 276.8M41.7 271.2L35.7 277.2M39.6 268.6L34.8 271.6M38.3 265.9L31.4 268.4M38.2 265.6L32.9 267.5M37.4 262.2L25.2 263.5M37.3 261.4L33.1 261.6M37.6 257.8L31.5 256.7M38.3 255.3L30.3 252.3M38.8 254.1L32.4 251.0M40.1 251.9L33.5 247.2M40.7 251.1L31.3 243.4M41.8 249.9L34.4 242.3M43.3 248.6L37.5 240.7M45.9 247.1L40.8 236.4M47.1 246.5L43.9 238.0M50.0 245.8L48.0 233.7M53.4 245.6L54.1 236.0M53.8 245.7L54.4 239.4M56.0 246.1L57.9 238.4M57.9 246.7L60.1 241.3M60.9 248.3L66.6 240.3M61.8 249.0L69.9 238.9M63.2 250.3L69.8 244.0M64.5 251.8L74.0 244.9M66.3 255.2L72.3 252.9M66.9 257.0L77.9 254.2M67.1 258.0L73.9 256.7M125.1 260.6L137.1 260.5M125.0 261.9L135.1 262.8M124.4 265.1L132.1 267.4M123.7 267.0L134.5 272.1M123.1 268.1L133.4 274.1M121.7 270.2L130.1 277.2M119.2 272.5L122.7 277.0M117.5 273.7L123.8 285.0M116.8 274.0L118.6 277.8M115.2 274.7L119.6 286.7M113.4 275.2L116.1 287.1M110.9 275.6L111.5 286.2M108.9 275.6L108.5 281.1M105.5 274.9L104.0 279.4M104.2 274.4L99.4 285.7M101.6 272.9L94.8 282.7M99.4 271.1L96.4 274.2M99.2 270.9L91.1 278.5M97.2 268.3L93.5 270.6M96.5 266.8L90.9 269.3M95.8 265.0L91.0 266.4M95.5 263.9L82.9 266.7M95.1 261.0L83.2 261.4M95.2 259.4L86.8 258.7M95.5 257.2L87.8 255.4M96.2 255.1L86.7 251.3M97.0 253.2L87.8 248.0M98.8 250.8L95.0 247.5M100.0 249.5L94.3 243.2M102.9 247.5L99.4 241.2M103.3 247.3L97.5 235.9M106.8 246.0L104.4 235.7M107.4 245.8L106.4 240.3M109.5 245.6L109.4 241.0M111.1 245.6L111.7 237.1M114.1 246.1L116.5 237.5M116.0 246.8L117.6 243.1M118.6 248.2L124.2 240.1M120.0 249.3L125.9 242.6M121.7 251.1L131.7 243.0M123.2 253.3L132.3 248.1M123.6 254.1L129.8 251.2M124.4 256.2L136.6 252.4M124.9 258.2L132.3 257.0M182.9 260.4L188.2 260.3M182.5 263.9L186.5 264.8M182.2 265.1L194.0 268.8M181.8 266.3L190.6 269.9M180.7 268.5L185.9 271.7M179.7 269.9L183.7 273.0M177.1 272.5L183.9 281.2M175.2 273.7L177.3 277.6M173.7 274.4L176.4 280.8M171.8 275.1L174.1 283.7M170.5 275.4L172.7 287.9M169.1 275.6L170.0 286.2M164.9 275.3L163.2 283.7M163.5 274.9L159.6 287.3M162.3 274.5L158.6 283.5M159.3 272.9L155.1 279.0M157.7 271.6L152.6 277.1M156.5 270.4L149.3 276.6M155.1 268.3L149.1 271.9M154.1 266.5L146.0 270.1M153.7 265.5L144.7 268.5M153.1 263.3L141.2 265.5M152.9 260.7L142.4 260.7M153.1 258.4L144.9 257.2M153.3 257.0L148.2 255.8M154.7 253.5L147.0 249.3M155.3 252.4L148.0 247.7M157.1 250.2L152.6 246.0M157.5 249.8L149.6 241.6M159.7 248.0L154.4 239.9M162.4 246.6L158.0 235.4M164.5 246.0L163.5 241.7M165.5 245.8L163.6 234.5M168.7 245.6L168.9 240.5M169.2 245.7L169.8 239.4M171.2 246.0L172.8 238.9M174.8 247.3L178.8 239.6M175.9 247.9L178.5 243.9M177.5 249.1L185.9 239.2M179.5 251.1L185.8 246.1M180.5 252.4L189.9 246.4M181.8 254.9L186.7 252.9M182.4 256.8L189.5 254.9M182.8 258.5L188.8 257.7M240.7 260.3L247.8 260.1M240.6 262.5L244.7 263.0M240.3 264.1L249.2 266.3M239.8 265.9L245.0 267.8M238.0 269.1L243.3 272.8M237.3 270.1L242.1 274.0M234.9 272.4L237.9 276.3M233.5 273.4L239.7 283.4M232.6 273.9L236.2 280.9M229.2 275.2L231.5 284.5M228.1 275.4L228.9 279.7M225.8 275.6L225.9 282.9M223.1 275.4L221.9 281.9M221.7 275.1L219.1 284.5M218.8 273.9L215.5 280.3M217.8 273.4L213.0 281.2M215.1 271.2L211.1 275.3M213.7 269.5L205.3 275.7M213.2 269.0L205.0 274.5M212.2 267.2L208.1 269.2M211.1 264.2L204.0 266.0M210.8 262.7L202.5 263.8M210.7 259.6L199.9 258.9M210.7 259.6L201.4 259.0M211.3 256.5L203.4 254.2M212.4 253.6L205.6 250.0M213.0 252.5L202.9 246.1M214.3 250.9L207.9 245.4M215.9 249.2L208.4 240.6M217.9 247.8L212.4 238.6M219.3 247.1L217.4 243.1M221.9 246.1L219.6 237.4M224.2 245.7L223.1 234.8M224.8 245.6L224.4 239.7M226.8 245.6L227.7 234.3M229.0 246.0L230.1 241.3M232.5 247.2L236.6 239.1M232.9 247.4L237.7 238.5M235.9 249.6L241.6 243.5M236.3 250.0L243.5 242.8M238.2 252.3L245.9 247.2M239.8 255.5L250.5 251.6M240.3 257.2L245.5 256.0M240.5 258.1L249.0 256.6M298.5 259.4L311.3 258.4M298.4 262.2L304.7 262.9M298.0 264.4L304.1 266.0M296.8 267.6L304.7 271.8M296.1 268.7L302.6 273.0M295.5 269.6L300.9 273.6M292.6 272.5L299.5 281.4M290.9 273.7L294.0 279.2M290.4 273.9L292.4 277.9M287.6 275.0L289.7 282.1M285.7 275.4L287.0 283.7M283.3 275.6L283.2 282.9M280.7 275.3L279.6 281.0M278.3 274.7L275.2 283.1M278.3 274.7L275.9 281.1M275.3 273.2L271.1 279.6M273.6 271.8L269.0 277.0M272.5 270.8L264.4 278.4M271.2 269.1L262.6 275.0M269.6 266.2L260.9 269.6M269.1 264.9L257.3 268.5M268.7 262.9L256.9 264.7M268.5 261.7L260.7 262.2M268.7 258.1L264.3 257.4M269.4 255.5L265.0 254.0M270.0 254.2L264.9 251.7M271.5 251.7L264.2 246.3M272.6 250.2L266.5 244.4M274.0 249.0L267.6 241.2M275.0 248.3L271.6 243.4M278.0 246.6L276.1 241.7M280.2 246.0L279.0 240.2M280.4 245.9L279.4 241.2M284.2 245.6L284.8 233.1M285.4 245.7L286.7 235.9M287.2 246.1L290.1 234.3M290.1 247.1L292.5 242.3M290.7 247.4L295.6 238.4M292.5 248.6L299.4 239.3M294.5 250.4L299.0 246.3M296.2 252.7L302.1 249.0M297.2 254.5L302.1 252.3M298.1 257.3L304.9 255.8M298.4 259.3L303.8 258.8M-13.7 319.1L-0.9 319.7M-13.8 320.3L-9.6 320.8M-14.2 322.3L-4.8 324.9M-14.8 324.0L-6.5 327.4M-15.6 325.7L-8.4 329.6M-17.7 328.6L-12.0 334.0M-19.2 330.0L-16.0 333.9M-21.3 331.4L-18.7 335.9M-23.4 332.4L-18.8 344.6M-25.5 333.1L-23.6 341.6M-26.1 333.2L-24.8 340.2M-29.3 333.4L-29.6 341.9M-31.8 333.1L-32.9 337.8M-32.9 332.8L-36.2 344.1M-35.1 331.9L-39.0 340.0M-36.0 331.5L-38.5 336.1M-38.1 330.1L-45.6 339.5M-40.6 327.6L-45.3 331.3M-41.8 325.6L-45.6 327.7M-42.4 324.4L-54.1 329.5M-43.0 323.0L-54.9 326.8M-43.6 320.2L-48.0 320.7M-43.7 318.8L-51.7 319.0M-43.6 316.9L-54.2 315.8M-43.3 314.9L-54.1 312.3M-42.5 312.6L-46.8 310.8M-41.2 310.2L-45.3 307.5M-40.0 308.5L-48.3 301.2M-38.3 306.9L-43.6 300.7M-37.7 306.4L-42.9 299.5M-35.8 305.2L-40.4 296.5M-33.8 304.3L-36.9 295.6M-31.2 303.6L-32.4 296.3M-28.3 303.4L-28.2 297.9M-27.4 303.5L-26.2 291.0M-24.9 303.9L-21.9 292.7M-21.7 305.2L-17.8 297.8M-21.3 305.3L-18.9 301.1M-18.2 307.7L-14.7 304.1M-17.4 308.6L-10.7 302.8M-16.6 309.5L-10.0 304.7M-15.4 311.4L-7.6 307.4M-14.3 314.2L-7.3 312.1M-14.0 315.5L-6.5 314.1M44.1 317.7L49.2 317.4M44.0 319.9L55.8 321.1M43.5 322.6L55.0 326.0M43.2 323.6L54.9 327.8M41.7 326.5L51.1 332.5M40.3 328.3L48.0 335.1M39.4 329.3L46.8 337.1M37.9 330.6L41.6 335.7M36.3 331.5L40.0 338.1M33.3 332.8L35.1 339.2M30.3 333.4L30.7 338.1M28.9 333.4L28.8 339.5M26.7 333.2L25.0 344.1M24.4 332.6L23.0 337.0M23.4 332.3L19.9 341.0M20.0 330.4L17.4 333.8M19.1 329.5L12.2 337.1M17.3 327.6L11.7 332.0M16.1 325.9L9.0 329.9M15.1 323.7L11.2 325.1M14.4 321.6L6.9 323.2M14.3 320.8L9.6 321.5M14.1 319.0L3.5 319.4M14.3 315.8L9.0 314.9M14.6 314.5L9.5 313.2M15.2 312.8L9.6 310.6M16.3 310.6L5.3 304.0M18.6 307.7L10.8 299.8M19.2 307.1L13.7 300.7M21.6 305.4L15.4 294.9M23.4 304.5L19.7 295.5M24.2 304.2L21.0 295.1M27.8 303.5L26.8 292.4M28.1 303.4L27.4 293.0M30.9 303.5L31.5 298.1M34.4 304.4L37.9 295.0M35.9 305.0L38.2 300.4M37.9 306.2L45.1 296.1M39.6 307.7L47.2 300.1M40.9 309.2L49.8 302.3M41.8 310.5L48.6 306.3M43.1 312.9L53.3 308.8M43.7 315.0L50.2 313.5M44.1 317.4L52.8 316.8M101.9 319.5L106.9 319.8M101.5 321.6L112.4 324.0M101.4 322.1L112.6 324.9M100.8 324.0L106.2 326.2M99.6 326.4L104.8 329.7M98.2 328.2L107.5 336.2M96.4 330.0L103.0 338.1M95.2 330.9L101.4 340.1M92.5 332.3L96.3 341.7M90.1 333.1L92.5 344.2M89.3 333.2L90.0 337.9M86.5 333.4L86.3 344.9M85.1 333.3L84.1 342.6M81.9 332.5L78.2 343.0M81.8 332.5L78.9 340.4M79.8 331.6L77.4 336.0M76.5 329.2L71.1 334.8M75.4 328.0L69.2 333.2M74.5 326.8L69.6 330.2M73.4 324.9L63.0 330.0M72.4 322.4L66.0 324.1M72.2 321.5L65.9 322.8M71.9 317.9L63.9 317.7M72.1 315.9L61.0 314.0M72.3 315.1L62.4 312.8M72.8 313.2L62.1 309.2M73.9 310.9L68.3 307.7M76.3 307.8L71.2 302.6M76.6 307.5L68.3 298.8M79.0 305.6L72.7 295.4M80.4 304.9L76.8 297.2M83.7 303.7L81.9 295.4M85.9 303.4L85.6 297.7M87.7 303.4L88.0 298.0M89.1 303.6L89.7 299.6M90.4 303.8L93.3 291.6M93.0 304.7L97.6 294.4M94.5 305.5L98.1 299.3M96.0 306.5L101.4 299.3M98.8 309.3L105.6 304.0M99.4 310.0L109.6 303.2M100.9 313.0L110.2 309.5M101.0 313.2L110.0 309.9M101.7 316.1L114.2 314.2M159.7 318.1L169.6 317.8M159.5 320.8L166.8 322.1M159.1 322.7L168.7 325.6M157.9 325.5L165.4 329.5M157.5 326.2L168.4 332.9M156.7 327.4L165.9 334.3M154.2 330.0L159.9 337.0M152.9 331.0L158.8 340.0M150.1 332.4L153.8 342.3M148.3 332.9L149.4 337.1M147.2 333.2L148.1 338.3M143.6 333.4L142.7 345.4M143.4 333.3L142.6 342.6M140.3 332.7L139.0 337.0M138.7 332.1L134.4 342.0M136.3 330.8L132.7 336.2M134.4 329.3L129.9 334.1M133.3 328.1L127.4 333.2M131.5 325.5L122.8 330.2M130.8 324.0L121.4 327.7M130.4 322.9L118.3 326.7M129.8 320.0L119.6 321.1M129.7 318.9L124.3 319.1M129.9 316.1L118.6 314.3M130.5 313.5L123.8 311.2M130.7 313.0L122.7 309.8M132.6 309.5L128.2 306.3M133.7 308.2L129.7 304.4M134.5 307.4L131.5 304.1M136.2 306.1L132.0 299.9M139.5 304.3L135.1 292.5M139.8 304.2L137.5 297.8M143.6 303.4L143.2 297.7M144.3 303.4L144.0 295.5M145.9 303.4L146.4 297.1M148.7 303.9L150.7 296.7M151.9 305.3L155.0 299.6M152.2 305.4L158.3 294.9M154.4 307.0L161.9 298.2M156.2 308.8L164.7 301.8M157.1 309.9L161.5 306.9M158.6 312.7L166.2 309.6M159.1 314.3L168.8 311.6M159.6 316.9L166.1 316.2M217.5 318.1L229.8 317.8M217.3 320.6L223.9 321.6M216.8 322.9L222.8 324.8M215.9 325.2L219.8 327.2M214.7 327.2L222.1 332.5M214.1 328.0L223.7 335.9M212.7 329.4L217.0 333.9M211.5 330.4L216.8 337.6M208.2 332.3L212.0 341.6M206.9 332.7L210.3 343.5M205.6 333.1L206.9 339.7M202.2 333.4L201.9 346.1M200.0 333.2L198.4 343.3M197.6 332.6L195.2 339.7M195.3 331.6L190.2 341.0M194.7 331.2L190.8 337.7M192.1 329.2L187.2 334.4M191.7 328.8L183.1 337.0M189.8 326.4L182.5 331.1M188.7 324.3L177.5 329.0M188.4 323.5L181.7 325.8M187.8 321.6L180.3 323.2M187.5 318.4L175.8 318.4M187.7 315.9L178.6 314.3M188.0 314.4L179.2 312.0M188.6 312.7L177.9 308.2M190.3 309.7L180.9 303.0M190.6 309.2L182.7 303.1M193.1 306.7L187.8 300.0M195.2 305.3L189.3 294.7M196.8 304.5L192.5 294.0M198.6 303.9L195.5 292.4M199.5 303.7L197.4 293.6M203.0 303.4L203.3 293.9M204.1 303.5L204.6 298.9M207.0 304.1L210.4 293.2M208.2 304.5L210.5 299.1M210.0 305.4L212.5 301.2M212.6 307.3L221.3 297.9M214.3 309.1L220.0 304.7M215.4 310.7L219.4 308.3M216.5 312.9L222.9 310.4M216.5 313.0L225.5 309.6M217.2 315.4L223.5 314.1M275.3 317.3L283.3 316.8M275.1 320.7L286.3 322.4M275.0 321.6L286.2 324.0M274.3 323.8L279.9 325.9M272.7 326.8L278.6 330.7M271.9 327.9L278.9 333.7M270.6 329.3L278.3 337.4M269.0 330.6L275.7 340.0M265.8 332.3L269.1 340.5M265.6 332.4L269.5 342.7M263.5 333.0L265.4 341.4M260.5 333.4L260.5 338.0M257.9 333.2L256.1 343.6M255.9 332.7L253.6 340.0M254.0 332.0L250.2 340.5M252.8 331.4L246.8 341.6M249.6 328.9L241.6 336.8M248.3 327.4L242.7 331.5M247.1 325.5L243.0 327.7M246.7 324.7L242.0 326.9M245.9 322.7L236.2 325.7M245.4 320.0L237.3 320.9M245.3 318.8L239.6 318.9M245.4 316.5L238.9 315.7M245.7 314.9L235.4 312.4M246.7 312.1L239.5 308.8M247.3 310.9L238.4 305.8M248.5 309.1L243.5 305.2M250.6 307.0L243.9 299.1M253.2 305.2L248.1 295.8M255.1 304.3L250.8 292.8M256.6 303.9L254.0 293.7M257.1 303.7L255.9 298.0M259.1 303.4L258.2 291.7M263.0 303.6L264.7 294.1M264.0 303.9L265.7 296.9M265.8 304.4L269.3 295.4M269.4 306.5L273.5 301.1M269.3 306.4L272.6 301.9M271.4 308.3L280.4 300.2M273.3 310.9L280.3 306.9M273.5 311.3L277.9 309.0M274.4 313.4L284.8 309.7M275.1 316.2L287.9 314.3M333.1 319.4L344.2 320.1M333.0 320.5L344.2 322.1M332.7 321.8L337.6 322.9M331.7 324.8L339.4 328.4M331.1 325.9L336.5 329.1M330.2 327.3L339.9 334.6M327.5 330.1L335.4 339.8M325.2 331.6L329.0 338.6M323.8 332.3L326.7 339.2M321.6 333.0L324.3 344.2M321.1 333.1L321.9 337.1M318.8 333.4L319.2 342.6M316.3 333.3L315.8 337.3M313.1 332.5L309.4 343.0M311.9 332.1L310.1 336.1M309.2 330.5L304.0 337.6M309.1 330.4L304.9 335.9M306.6 328.0L297.4 335.7M305.5 326.5L297.3 331.8M304.8 325.3L299.3 328.1M303.5 321.7L296.2 323.3M303.4 321.5L294.3 323.4M303.1 319.3L297.3 319.6M303.2 316.4L294.1 315.1M303.8 313.9L293.9 310.7M304.4 312.3L300.2 310.4M305.8 309.8L302.1 307.3M306.7 308.6L300.9 303.7M308.6 306.8L302.0 298.7M309.5 306.1L303.8 298.1M312.3 304.6L309.1 297.0M313.1 304.3L309.0 292.8M316.2 303.5L315.6 299.0M317.5 303.4L316.9 290.5M319.6 303.5L320.3 296.0M323.0 304.2L326.7 293.4M324.6 304.9L329.3 295.3M325.3 305.2L327.6 301.0M328.8 307.8L336.7 299.9M328.7 307.8L331.8 304.6M330.4 309.8L340.5 302.7M331.5 311.6L340.4 307.0M332.7 315.2L342.3 313.1M333.1 317.3L339.4 316.8"/></g></svg><div class="t" style="left:709px;top:690px;font-size:7.8px;color:#c8c8c8;text-shadow:0 0 1px #000">4096 x 4096 (Grayscale, 16bpc)</div><div class="a" style="left:702px;top:705px;width:516px;height:1px;background:#262626;"></div><div class="a" style="left:702px;top:706px;width:516px;height:21px;background:#333333;"></div><svg class="a" style="left:704px;top:711px" width="12" height="11" viewBox="0 0 12 11"><rect x="0.5" y="0.5" width="11" height="10" fill="#101010"/><rect x="1.5" y="1.5" width="3" height="8" fill="#e03030"/><rect x="4.5" y="1.5" width="3.2" height="8" fill="#30c030"/><rect x="7.7" y="1.5" width="3" height="8" fill="#4040e0"/></svg><svg class="a" style="left:718px;top:715px" width="5" height="4" viewBox="0 0 5 4"><path d="M0 0H5L2.5 4Z" fill="#d0d0d0"/></svg><div class="a" style="left:729px;top:708px;width:14px;height:16px;background:#a8a8a8;border-radius:2px"></div><svg class="a" style="left:731px;top:710px" width="10" height="11" viewBox="0 0 10 11"><rect x="0.5" y="0.5" width="9" height="10" fill="#fff" stroke="#1a1a1a" stroke-width="1"/><rect x="3" y="3" width="2" height="2" fill="#bbb"/><rect x="5" y="5" width="2" height="2" fill="#bbb"/><rect x="3" y="7" width="2" height="2" fill="#bbb"/></svg><svg class="a" style="left:748px;top:711px" width="12" height="11" viewBox="0 0 12 11"><defs><linearGradient id="rg" x1="0" x2="1"><stop offset="0" stop-color="#d04020"/><stop offset="0.5" stop-color="#30b040"/><stop offset="1" stop-color="#3050d0"/></linearGradient></defs><rect x="0.5" y="0.5" width="11" height="10" fill="url(#rg)" stroke="#101010"/></svg><div class="a" style="left:766px;top:708px;width:14px;height:16px;background:#a8a8a8;border-radius:2px"></div><div class="t" style="left:767px;top:713px;font-size:6px;color:#000;font-weight:bold;letter-spacing:-0.6px;"><span style="color:#d03030">R</span><span style="color:#20a020">G</span><span style="color:#3030d0">B</span></div><svg class="a" style="left:785px;top:711px" width="10" height="11" viewBox="0 0 10 11"><circle cx="5" cy="5.5" r="4.5" fill="#30c030"/><path d="M5 1A4.5 4.5 0 0 0 5 10Z" fill="#d03030"/><path d="M5 1A4.5 4.5 0 0 1 5 10Z" fill="#3030e0"/><rect x="4" y="1" width="2" height="9" fill="#30c030"/></svg><div class="t" style="left:806px;top:711px;font-size:9.5px;color:#d8d8d8;"><i>i</i></div><svg class="a" style="left:821px;top:711px" width="11" height="11" viewBox="0 0 11 11"><path d="M0.5 1V10.5H10.5L8 6L6 7.5L3.5 2L2 4.5Z" fill="#d8c48a"/></svg><svg class="a" style="left:1086px;top:711px" width="10" height="10" viewBox="0 0 10 10"><rect x="1.5" y="1.5" width="7" height="7" fill="#777"/><path d="M0.5 3V0.5H3M7 0.5H9.5V3M9.5 7V9.5H7M3 9.5H0.5V7" stroke="#d8d8d8" stroke-width="1.2" fill="none"/></svg><div class="t" style="left:1100px;top:713px;font-size:6.5px;color:#d8d8d8;font-weight:bold;letter-spacing:-0.3px;">1:1</div><div class="a" style="left:1114px;top:708px;width:1px;height:17px;background:#2a2a2a;"></div><svg class="a" style="left:1121px;top:712px" width="8" height="8" viewBox="0 0 8 8"><circle cx="4" cy="4" r="3.5" fill="#bdbdbd"/><path d="M2 4H6" stroke="#333" stroke-width="1"/></svg><div class="a" style="left:1136px;top:708px;width:46px;height:16px;background:#313131;"></div><div class="t" style="left:1148px;top:712px;font-size:8px;color:#c8c8c8;">9.67%</div><svg class="a" style="left:1186px;top:712px" width="8" height="8" viewBox="0 0 8 8"><circle cx="4" cy="4" r="3.5" fill="#e0e0e0"/><path d="M2 4H6M4 2V6" stroke="#333" stroke-width="1"/></svg><div class="a" style="left:1200px;top:708px;width:1px;height:17px;background:#2a2a2a;"></div><div class="a" style="left:1204px;top:708px;width:13.6px;height:17px;background:#a8a8a8;border-radius:1px"></div><svg class="a" style="left:1207px;top:711px" width="7" height="10" viewBox="0 0 7 10"><path d="M1 3.5H6M1 6.5H6M3.5 1V9" stroke="#eee" stroke-width="1"/></svg><div class="a" style="left:1221px;top:33px;width:179px;height:12px;background:#1c1c1c;"></div><div class="a" style="left:1233px;top:33px;width:129px;height:12px;background:#111111;"></div><svg class="a" style="left:1223px;top:34px" width="8" height="10" viewBox="0 0 8 10"><path d="M0.5 0.5H5L7.5 3V9.5H0.5Z" fill="#e0e0e0"/><path d="M1.5 4H6.5M1.5 6H6.5M1.5 8H6.5" stroke="#9a9a9a" stroke-width="0.6"/></svg><div class="a" style="left:1363px;top:33px;width:11px;height:12px;background:#1a1a1a;"></div><div class="a" style="left:1375px;top:33px;width:11px;height:12px;background:#1a1a1a;"></div><div class="a" style="left:1388px;top:33px;width:12px;height:12px;background:#1a1a1a;"></div><svg class="a" style="left:1364px;top:35px" width="9" height="8" viewBox="0 0 9 8"><path d="M0 4H3M3 1.5H4V6.5H3ZM4 2H9V6H4Z" fill="#d4d4d4" stroke="#d4d4d4" stroke-width="0.6"/><path d="M4.5 3.3H8.5M4.5 4.7H8.5" stroke="#888" stroke-width="0.6"/></svg><svg class="a" style="left:1377px;top:35px" width="8" height="8" viewBox="0 0 8 8"><path d="M2.5 0.8H7.2V5.2H5.5M0.8 2.8H5.5V7.2H0.8Z" fill="none" stroke="#d4d4d4" stroke-width="1"/></svg><svg class="a" style="left:1391px;top:36px" width="6" height="6" viewBox="0 0 6 6"><path d="M0.5 0.5L5.5 5.5M5.5 0.5L0.5 5.5" stroke="#e0e0e0" stroke-width="1.1"/></svg><div class="t" style="left:1197.5px;top:35.5px;width:200px;text-align:center;font-size:7.8px;color:#d6d6d6;">Visaro_body_shell</div><div class="a" style="left:1221px;top:45px;width:179px;height:682px;background:#2f2f2f;"></div><div class="a" style="left:1392px;top:45px;width:8px;height:672px;background:#262626;"></div><div class="a" style="left:1393px;top:46px;width:7px;height:6px;background:#484848;"></div><div class="a" style="left:1393px;top:53px;width:7px;height:593px;background:#434343;border:1px solid #2c2c2c;border-radius:1px"></div><div class="a" style="left:1393px;top:646px;width:7px;height:66px;background:#1f1f1f;"></div><div class="a" style="left:1221px;top:46px;width:171px;height:14px;background:linear-gradient(#4e4e4e,#424242);"></div><svg class="a" style="left:1225px;top:51px" width="6" height="5" viewBox="0 0 6 5"><path d="M0 0H6L3.0 5Z" fill="#c8c8c8"/></svg><div class="t" style="left:1238px;top:49.5px;font-size:8.4px;color:#e8e8e8;font-weight:bold;">Base Parameters</div><div class="t" style="left:1224px;top:64.5px;font-size:8.3px;color:#d8d8d8;font-weight:bold;">Output Size</div><svg class="a" style="left:1332px;top:64px" width="11" height="9" viewBox="0 0 11 9"><path d="M0.5 6C2 -1 4 -1 5.5 4S9 9 10.5 2" stroke="#7a7a7a" stroke-width="1" fill="none"/></svg><svg class="a" style="left:1346px;top:67px" width="5" height="4" viewBox="0 0 5 4"><path d="M0 0H5L2.5 4Z" fill="#d0d0d0"/></svg><svg class="a" style="left:1352px;top:64px" width="12" height="9" viewBox="0 0 12 9"><rect x="0.5" y="1" width="8" height="7" fill="#e04848"/><path d="M9.5 2L12 4.5L9.5 7Z" fill="#e8e8e8"/></svg><svg class="a" style="left:1368px;top:67px" width="5" height="4" viewBox="0 0 5 4"><path d="M0 0H5L2.5 4Z" fill="#d0d0d0"/></svg><svg class="a" style="left:1388px;top:67px" width="5" height="4" viewBox="0 0 5 4"><path d="M0 0H5L2.5 4Z" fill="#d0d0d0"/></svg><div class="t" style="left:1055px;top:79.5px;width:200px;text-align:right;font-size:8px;color:#c8c8c8;">Width</div><div class="fld" style="left:1258px;top:79px;width:73px;height:11px"></div><div class="t" style="left:1194.5px;top:82px;width:200px;text-align:center;font-size:8px;color:#d8d8d8;">12</div><div class="t" style="left:1334px;top:81.5px;font-size:8px;color:#c8c8c8;">4096 px</div><div class="t" style="left:1055px;top:95.5px;width:200px;text-align:right;font-size:8px;color:#c8c8c8;">Height</div><div class="fld" style="left:1258px;top:95px;width:73px;height:11px"></div><div class="t" style="left:1194.5px;top:98px;width:200px;text-align:center;font-size:8px;color:#d8d8d8;">12</div><div class="t" style="left:1334px;top:97.5px;font-size:8px;color:#c8c8c8;">4096 px</div><div class="a" style="left:1221px;top:113px;width:171px;height:1px;background:#3b3b3b;"></div><div class="t" style="left:1224px;top:117.5px;font-size:8.3px;color:#d8d8d8;font-weight:bold;">Output Format</div><svg class="a" style="left:1332px;top:117px" width="11" height="9" viewBox="0 0 11 9"><path d="M0.5 6C2 -1 4 -1 5.5 4S9 9 10.5 2" stroke="#7a7a7a" stroke-width="1" fill="none"/></svg><svg class="a" style="left:1346px;top:120px" width="5" height="4" viewBox="0 0 5 4"><path d="M0 0H5L2.5 4Z" fill="#d0d0d0"/></svg><svg class="a" style="left:1353px;top:117px" width="10" height="9" viewBox="0 0 10 9"><path d="M1 0.5H5M2 2V8.5M2 4.5H5M2 7.5H5M5.5 3H9.5M5.5 6H9.5" stroke="#d0d0d0" stroke-width="0.9" fill="none"/><rect x="0.5" y="0" width="6" height="1.4" fill="#e04040"/></svg><svg class="a" style="left:1368px;top:120px" width="5" height="4" viewBox="0 0 5 4"><path d="M0 0H5L2.5 4Z" fill="#d0d0d0"/></svg><svg class="a" style="left:1388px;top:120px" width="5" height="4" viewBox="0 0 5 4"><path d="M0 0H5L2.5 4Z" fill="#d0d0d0"/></svg><div class="a" style="left:1232px;top:132px;width:157px;height:12px;border:1px solid #2a2a2a;border-radius:2px;background:#363636"></div><div class="t" style="left:1235px;top:134.5px;font-size:7.8px;color:#666;">8 Bits per channel</div><svg class="a" style="left:1381px;top:134px" width="5" height="8" viewBox="0 0 5 8"><path d="M0.5 3L2.5 0.5L4.5 3ZM0.5 5L2.5 7.5L4.5 5Z" fill="#777"/></svg><div class="a" style="left:1221px;top:149px;width:171px;height:1px;background:#3b3b3b;"></div><div class="t" style="left:1224px;top:155.0px;font-size:8.3px;color:#d8d8d8;font-weight:bold;">Pixel Size</div><svg class="a" style="left:1332px;top:154.5px" width="11" height="9" viewBox="0 0 11 9"><path d="M0.5 6C2 -1 4 -1 5.5 4S9 9 10.5 2" stroke="#7a7a7a" stroke-width="1" fill="none"/></svg><svg class="a" style="left:1346px;top:157.5px" width="5" height="4" viewBox="0 0 5 4"><path d="M0 0H5L2.5 4Z" fill="#d0d0d0"/></svg><svg class="a" style="left:1353px;top:154.5px" width="10" height="9" viewBox="0 0 10 9"><path d="M1 0.5H5M2 2V8.5M2 4.5H5M2 7.5H5M5.5 3H9.5M5.5 6H9.5" stroke="#d0d0d0" stroke-width="0.9" fill="none"/><rect x="0.5" y="0" width="6" height="1.4" fill="#e04040"/></svg><svg class="a" style="left:1368px;top:157.5px" width="5" height="4" viewBox="0 0 5 4"><path d="M0 0H5L2.5 4Z" fill="#d0d0d0"/></svg><svg class="a" style="left:1388px;top:157.5px" width="5" height="4" viewBox="0 0 5 4"><path d="M0 0H5L2.5 4Z" fill="#d0d0d0"/></svg><div class="t" style="left:1055px;top:169.5px;width:200px;text-align:right;font-size:8px;color:#c8c8c8;">Width</div><div class="fld" style="left:1258px;top:169px;width:131px;height:11px"></div><div class="t" style="left:1223.5px;top:172px;width:200px;text-align:center;font-size:8px;color:#d8d8d8;">1</div><div class="t" style="left:1055px;top:185.5px;width:200px;text-align:right;font-size:8px;color:#c8c8c8;">Height</div><div class="fld" style="left:1258px;top:185px;width:131px;height:11px"></div><div class="t" style="left:1223.5px;top:188px;width:200px;text-align:center;font-size:8px;color:#d8d8d8;">1</div><div class="a" style="left:1221px;top:202px;width:171px;height:1px;background:#3b3b3b;"></div><div class="t" style="left:1224px;top:208.0px;font-size:8.3px;color:#d8d8d8;font-weight:bold;">Tiling Mode</div><svg class="a" style="left:1332px;top:207.5px" width="11" height="9" viewBox="0 0 11 9"><path d="M0.5 6C2 -1 4 -1 5.5 4S9 9 10.5 2" stroke="#7a7a7a" stroke-width="1" fill="none"/></svg><svg class="a" style="left:1346px;top:210.5px" width="5" height="4" viewBox="0 0 5 4"><path d="M0 0H5L2.5 4Z" fill="#d0d0d0"/></svg><svg class="a" style="left:1353px;top:207.5px" width="10" height="9" viewBox="0 0 10 9"><path d="M1 0.5H5M2 2V8.5M2 4.5H5M2 7.5H5M5.5 3H9.5M5.5 6H9.5" stroke="#d0d0d0" stroke-width="0.9" fill="none"/><rect x="0.5" y="0" width="6" height="1.4" fill="#e04040"/></svg><svg class="a" style="left:1368px;top:210.5px" width="5" height="4" viewBox="0 0 5 4"><path d="M0 0H5L2.5 4Z" fill="#d0d0d0"/></svg><svg class="a" style="left:1388px;top:210.5px" width="5" height="4" viewBox="0 0 5 4"><path d="M0 0H5L2.5 4Z" fill="#d0d0d0"/></svg><div class="a" style="left:1232px;top:222px;width:157px;height:12px;border:1px solid #2a2a2a;border-radius:2px;background:#363636"></div><div class="t" style="left:1235px;top:224.5px;font-size:7.8px;color:#666;">H and V Tiling</div><svg class="a" style="left:1381px;top:224px" width="5" height="8" viewBox="0 0 5 8"><path d="M0.5 3L2.5 0.5L4.5 3ZM0.5 5L2.5 7.5L4.5 5Z" fill="#777"/></svg><div class="a" style="left:1221px;top:240px;width:171px;height:1px;background:#3b3b3b;"></div><div class="t" style="left:1224px;top:245.5px;font-size:8.3px;color:#d8d8d8;font-weight:bold;">Random Seed</div><svg class="a" style="left:1332px;top:245px" width="11" height="9" viewBox="0 0 11 9"><path d="M0.5 6C2 -1 4 -1 5.5 4S9 9 10.5 2" stroke="#7a7a7a" stroke-width="1" fill="none"/></svg><svg class="a" style="left:1346px;top:248px" width="5" height="4" viewBox="0 0 5 4"><path d="M0 0H5L2.5 4Z" fill="#d0d0d0"/></svg><svg class="a" style="left:1353px;top:245px" width="10" height="9" viewBox="0 0 10 9"><path d="M1 0.5H5M2 2V8.5M2 4.5H5M2 7.5H5M5.5 3H9.5M5.5 6H9.5" stroke="#d0d0d0" stroke-width="0.9" fill="none"/><rect x="0.5" y="0" width="6" height="1.4" fill="#e04040"/></svg><svg class="a" style="left:1368px;top:248px" width="5" height="4" viewBox="0 0 5 4"><path d="M0 0H5L2.5 4Z" fill="#d0d0d0"/></svg><svg class="a" style="left:1388px;top:248px" width="5" height="4" viewBox="0 0 5 4"><path d="M0 0H5L2.5 4Z" fill="#d0d0d0"/></svg><div class="dfld" style="left:1233px;top:259px;width:156px;height:12px"></div><div class="t" style="left:1210.0px;top:261px;width:200px;text-align:center;font-size:8px;color:#d0d0d0;">0</div><div class="a" style="left:1221px;top:276px;width:171px;height:1px;background:#3b3b3b;"></div><div class="a" style="left:1221px;top:279px;width:171px;height:14px;background:linear-gradient(#4e4e4e,#424242);"></div><svg class="a" style="left:1225px;top:284px" width="6" height="5" viewBox="0 0 6 5"><path d="M0 0H6L3.0 5Z" fill="#c8c8c8"/></svg><div class="t" style="left:1238px;top:282.5px;font-size:8.4px;color:#e8e8e8;font-weight:bold;">Attributes</div><div class="t" style="left:1224px;top:296.0px;font-size:8.3px;color:#d8d8d8;font-weight:bold;">Identifier</div><div class="dfld" style="left:1232px;top:308px;width:157px;height:13px"></div><div class="t" style="left:1235px;top:310.5px;font-size:7.8px;color:#d0d0d0;">Visaro_body_shell</div><div class="a" style="left:1221px;top:327px;width:171px;height:1px;background:#3b3b3b;"></div><div class="t" style="left:1224px;top:329.5px;font-size:8.3px;color:#d8d8d8;font-weight:bold;">Output(s) computation</div><div class="fld" style="left:1251px;top:342px;width:118px;height:12px"></div><div class="t" style="left:1210.0px;top:344.5px;width:200px;text-align:center;font-size:8px;color:#d0d0d0;">Yes</div><div class="a" style="left:1221px;top:360px;width:171px;height:1px;background:#3b3b3b;"></div><div class="t" style="left:1224px;top:363.5px;font-size:8.3px;color:#d8d8d8;font-weight:bold;">Description</div><div class="dfld" style="left:1232px;top:375px;width:157px;height:37px;background:#232323"></div><div class="a" style="left:1221px;top:418px;width:171px;height:1px;background:#3b3b3b;"></div><div class="t" style="left:1224px;top:420.5px;font-size:8.3px;color:#d8d8d8;font-weight:bold;">Category</div><div class="dfld" style="left:1232px;top:432px;width:157px;height:13px;background:#232323"></div><div class="a" style="left:1221px;top:451.5px;width:171px;height:1px;background:#3b3b3b;"></div><div class="t" style="left:1224px;top:454.0px;font-size:8.3px;color:#d8d8d8;font-weight:bold;">Label</div><div class="dfld" style="left:1232px;top:465.5px;width:157px;height:13px;background:#232323"></div><div class="a" style="left:1221px;top:485.0px;width:171px;height:1px;background:#3b3b3b;"></div><div class="t" style="left:1224px;top:487.5px;font-size:8.3px;color:#d8d8d8;font-weight:bold;">Author</div><div class="dfld" style="left:1232px;top:499.0px;width:157px;height:13px;background:#232323"></div><div class="a" style="left:1221px;top:518.5px;width:171px;height:1px;background:#3b3b3b;"></div><div class="t" style="left:1224px;top:521.0px;font-size:8.3px;color:#d8d8d8;font-weight:bold;">Author URL</div><div class="dfld" style="left:1232px;top:532.5px;width:157px;height:13px;background:#232323"></div><div class="a" style="left:1221px;top:552.0px;width:171px;height:1px;background:#3b3b3b;"></div><div class="t" style="left:1224px;top:554.5px;font-size:8.3px;color:#d8d8d8;font-weight:bold;">Tags</div><div class="dfld" style="left:1232px;top:566.0px;width:157px;height:13px;background:#232323"></div><div class="a" style="left:1221px;top:585.5px;width:171px;height:1px;background:#3b3b3b;"></div><div class="t" style="left:1224px;top:588.0px;font-size:8.3px;color:#d8d8d8;font-weight:bold;">User Data</div><div class="dfld" style="left:1232px;top:599.5px;width:157px;height:13px;background:#232323"></div><div class="a" style="left:1221px;top:619.0px;width:171px;height:1px;background:#3b3b3b;"></div><div class="t" style="left:1224px;top:621.5px;font-size:8.3px;color:#d8d8d8;font-weight:bold;">Show In Library</div><div class="fld" style="left:1251px;top:634px;width:118px;height:13px"></div><div class="t" style="left:1210.0px;top:637px;width:200px;text-align:center;font-size:8px;color:#d0d0d0;">Yes</div><div class="a" style="left:1221px;top:653.5px;width:171px;height:1px;background:#3b3b3b;"></div><div class="t" style="left:1224px;top:656.0px;font-size:8.3px;color:#d8d8d8;font-weight:bold;">Icon</div><svg class="a" style="left:1232px;top:667px" width="47" height="47" viewBox="0 0 47 47"><rect x="1" y="1" width="45" height="45" fill="none" stroke="#d0d0d0" stroke-width="1.3" stroke-dasharray="3.5 2.2"/><path d="M20 14H27V22H31L23.5 30L16 22H20Z" fill="#d8d8d8"/><rect x="16" y="34" width="15" height="1.5" fill="#d0d0d0"/></svg><div class="a" style="left:1221px;top:716px;width:171px;height:1px;background:#262626;"></div><div class="a" style="left:1221px;top:717px;width:171px;height:10px;background:#2a2a2a;"></div><div class="a" style="left:1222px;top:719px;width:6px;height:7px;background:#3e3e3e;"></div><div class="a" style="left:1229px;top:719px;width:154px;height:7px;background:#474747;border-radius:2px"></div><div class="a" style="left:1385px;top:719px;width:6px;height:7px;background:#3e3e3e;"></div><div class="a" style="left:1394px;top:713px;width:6px;height:6px;background:#484848;"></div><div class="a" style="left:0px;top:727px;width:1400px;height:13px;background:#2e2e2e;"></div><div class="a" style="left:1315px;top:727px;width:85px;height:13px;background:#333333;"></div><div class="t" style="left:1318px;top:730px;font-size:7.8px;color:#c8c8c8;">Engine: Direct3D 10</div></body></html>
